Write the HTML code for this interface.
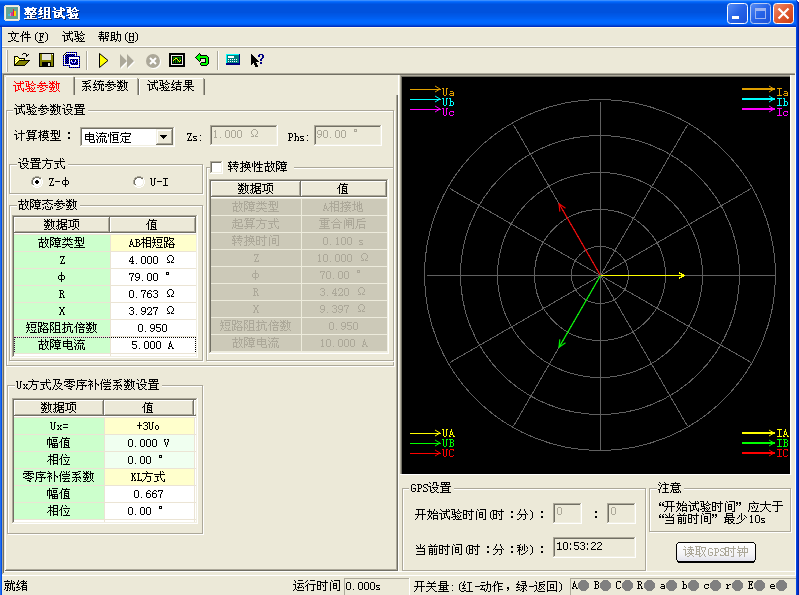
<!DOCTYPE html>
<html><head><meta charset="utf-8"><style>
html,body{margin:0;padding:0;background:#ECE9D8;width:799px;height:595px;overflow:hidden;font-family:"Liberation Sans",sans-serif}
svg{position:absolute;left:0;top:0;display:block}
</style></head><body>
<svg width="799" height="595" viewBox="0 0 799 595" shape-rendering="crispEdges"><defs><path id="g0" d="M3 0h1v1h-1zM8 0h1v1h-1zM0 1h7v1h-7zM8 1h4v1h-4zM1 2h1v1h-1zM3 2h1v1h-1zM5 2h1v1h-1zM7 2h1v1h-1zM10 2h1v1h-1zM1 3h6v1h-6zM8 3h1v1h-1zM10 3h1v1h-1zM2 4h3v1h-3zM9 4h1v1h-1zM1 5h1v1h-1zM3 5h1v1h-1zM5 5h1v1h-1zM8 5h1v1h-1zM10 5h1v1h-1zM0 6h1v1h-1zM3 6h1v1h-1zM6 6h2v1h-2zM11 6h1v1h-1zM1 7h10v1h-10zM6 8h1v1h-1zM3 9h1v1h-1zM6 9h4v1h-4zM3 10h1v1h-1zM6 10h1v1h-1zM0 11h12v1h-12z"/><path id="g1" d="M2 0h1v1h-1zM6 0h5v1h-5zM2 1h1v1h-1zM6 1h1v1h-1zM10 1h1v1h-1zM1 2h1v1h-1zM6 2h1v1h-1zM10 2h1v1h-1zM1 3h1v1h-1zM3 3h1v1h-1zM6 3h1v1h-1zM10 3h1v1h-1zM0 4h3v1h-3zM6 4h5v1h-5zM2 5h1v1h-1zM6 5h1v1h-1zM10 5h1v1h-1zM1 6h1v1h-1zM3 6h1v1h-1zM6 6h1v1h-1zM10 6h1v1h-1zM0 7h3v1h-3zM6 7h5v1h-5zM6 8h1v1h-1zM10 8h1v1h-1zM2 9h2v1h-2zM6 9h1v1h-1zM10 9h1v1h-1zM0 10h2v1h-2zM6 10h1v1h-1zM10 10h1v1h-1zM4 11h8v1h-8z"/><path id="g2" d="M1 0h1v1h-1zM8 0h1v1h-1zM2 1h1v1h-1zM8 1h1v1h-1zM10 1h1v1h-1zM2 2h1v1h-1zM8 2h1v1h-1zM11 2h1v1h-1zM4 3h8v1h-8zM0 4h3v1h-3zM8 4h1v1h-1zM2 5h1v1h-1zM4 5h5v1h-5zM2 6h1v1h-1zM6 6h1v1h-1zM8 6h1v1h-1zM2 7h1v1h-1zM6 7h1v1h-1zM8 7h1v1h-1zM2 8h1v1h-1zM4 8h1v1h-1zM6 8h1v1h-1zM9 8h1v1h-1zM2 9h2v1h-2zM6 9h2v1h-2zM9 9h1v1h-1zM11 9h1v1h-1zM2 10h1v1h-1zM4 10h2v1h-2zM10 10h2v1h-2zM11 11h1v1h-1z"/><path id="g3" d="M0 0h4v1h-4zM8 0h1v1h-1zM3 1h1v1h-1zM7 1h2v1h-2zM1 2h1v1h-1zM3 2h1v1h-1zM6 2h1v1h-1zM9 2h1v1h-1zM1 3h1v1h-1zM3 3h1v1h-1zM5 3h1v1h-1zM10 3h2v1h-2zM1 4h1v1h-1zM3 4h1v1h-1zM6 4h4v1h-4zM1 5h4v1h-4zM4 6h1v1h-1zM7 6h1v1h-1zM10 6h1v1h-1zM2 7h4v1h-4zM8 7h1v1h-1zM10 7h1v1h-1zM0 8h2v1h-2zM4 8h1v1h-1zM6 8h1v1h-1zM8 8h1v1h-1zM10 8h1v1h-1zM4 9h1v1h-1zM6 9h1v1h-1zM9 9h1v1h-1zM2 10h1v1h-1zM4 10h1v1h-1zM9 10h1v1h-1zM3 11h1v1h-1zM5 11h7v1h-7z"/><path id="g4" d="M4 0h1v1h-1zM5 1h1v1h-1zM0 2h11v1h-11zM3 3h1v1h-1zM7 3h1v1h-1zM3 4h1v1h-1zM7 4h1v1h-1zM3 5h1v1h-1zM7 5h1v1h-1zM4 6h1v1h-1zM6 6h1v1h-1zM4 7h1v1h-1zM6 7h1v1h-1zM5 8h1v1h-1zM3 9h2v1h-2zM6 9h2v1h-2zM0 10h3v1h-3zM8 10h3v1h-3z"/><path id="g5" d="M3 0h1v1h-1zM7 0h1v1h-1zM3 1h1v1h-1zM5 1h1v1h-1zM7 1h1v1h-1zM2 2h1v1h-1zM5 2h1v1h-1zM7 2h1v1h-1zM2 3h1v1h-1zM4 3h6v1h-6zM1 4h3v1h-3zM7 4h1v1h-1zM0 5h1v1h-1zM2 5h1v1h-1zM7 5h1v1h-1zM2 6h1v1h-1zM4 6h7v1h-7zM2 7h1v1h-1zM7 7h1v1h-1zM2 8h1v1h-1zM7 8h1v1h-1zM2 9h1v1h-1zM7 9h1v1h-1zM2 10h1v1h-1zM7 10h1v1h-1z"/><path id="g6" d="M5 1h1v1h-1zM4 2h1v1h-1zM3 3h1v1h-1zM3 4h1v1h-1zM3 5h1v1h-1zM3 6h1v1h-1zM3 7h1v1h-1zM3 8h1v1h-1zM4 9h1v1h-1zM5 10h1v1h-1z"/><path id="g7" d="M1 2h5v1h-5zM2 3h1v1h-1zM5 3h1v1h-1zM2 4h1v1h-1zM4 4h1v1h-1zM2 5h3v1h-3zM2 6h1v1h-1zM4 6h1v1h-1zM2 7h1v1h-1zM2 8h1v1h-1zM1 9h3v1h-3z"/><path id="g8" d="M1 1h1v1h-1zM2 2h1v1h-1zM3 3h1v1h-1zM3 4h1v1h-1zM3 5h1v1h-1zM3 6h1v1h-1zM3 7h1v1h-1zM3 8h1v1h-1zM2 9h1v1h-1zM1 10h1v1h-1z"/><path id="g9" d="M1 0h1v1h-1zM7 0h1v1h-1zM9 0h1v1h-1zM2 1h1v1h-1zM7 1h1v1h-1zM10 1h1v1h-1zM3 2h8v1h-8zM7 3h1v1h-1zM0 4h3v1h-3zM4 4h4v1h-4zM2 5h1v1h-1zM5 5h1v1h-1zM7 5h1v1h-1zM2 6h1v1h-1zM5 6h1v1h-1zM7 6h1v1h-1zM2 7h1v1h-1zM5 7h1v1h-1zM8 7h1v1h-1zM10 7h1v1h-1zM2 8h1v1h-1zM5 8h2v1h-2zM8 8h1v1h-1zM10 8h1v1h-1zM2 9h3v1h-3zM9 9h2v1h-2zM2 10h1v1h-1zM10 10h1v1h-1z"/><path id="g10" d="M0 0h4v1h-4zM7 0h1v1h-1zM3 1h1v1h-1zM7 1h1v1h-1zM1 2h1v1h-1zM3 2h1v1h-1zM6 2h1v1h-1zM8 2h1v1h-1zM1 3h1v1h-1zM3 3h3v1h-3zM9 3h2v1h-2zM1 4h1v1h-1zM3 4h1v1h-1zM6 4h3v1h-3zM1 5h4v1h-4zM4 6h1v1h-1zM6 6h1v1h-1zM9 6h1v1h-1zM2 7h4v1h-4zM7 7h1v1h-1zM9 7h1v1h-1zM0 8h2v1h-2zM4 8h1v1h-1zM6 8h1v1h-1zM8 8h1v1h-1zM4 9h1v1h-1zM7 9h1v1h-1zM2 10h2v1h-2zM5 10h6v1h-6z"/><path id="g11" d="M3 0h1v1h-1zM1 1h5v1h-5zM7 1h4v1h-4zM3 2h1v1h-1zM7 2h1v1h-1zM10 2h1v1h-1zM1 3h5v1h-5zM7 3h1v1h-1zM9 3h1v1h-1zM3 4h1v1h-1zM7 4h1v1h-1zM10 4h1v1h-1zM0 5h6v1h-6zM7 5h4v1h-4zM2 6h1v1h-1zM5 6h1v1h-1zM7 6h1v1h-1zM1 7h9v1h-9zM2 8h1v1h-1zM5 8h1v1h-1zM9 8h1v1h-1zM2 9h1v1h-1zM5 9h1v1h-1zM8 9h2v1h-2zM5 10h1v1h-1z"/><path id="g12" d="M7 0h1v1h-1zM1 1h4v1h-4zM7 1h1v1h-1zM1 2h1v1h-1zM4 2h1v1h-1zM7 2h1v1h-1zM1 3h1v1h-1zM4 3h1v1h-1zM6 3h5v1h-5zM1 4h4v1h-4zM7 4h1v1h-1zM10 4h1v1h-1zM1 5h1v1h-1zM4 5h1v1h-1zM7 5h1v1h-1zM10 5h1v1h-1zM1 6h4v1h-4zM7 6h1v1h-1zM10 6h1v1h-1zM1 7h1v1h-1zM4 7h1v1h-1zM7 7h1v1h-1zM10 7h1v1h-1zM1 8h1v1h-1zM3 8h4v1h-4zM10 8h1v1h-1zM0 9h3v1h-3zM6 9h1v1h-1zM8 9h1v1h-1zM10 9h1v1h-1zM5 10h1v1h-1zM9 10h1v1h-1z"/><path id="g13" d="M1 2h2v1h-2zM4 2h2v1h-2zM1 3h1v1h-1zM5 3h1v1h-1zM1 4h1v1h-1zM5 4h1v1h-1zM1 5h5v1h-5zM1 6h1v1h-1zM5 6h1v1h-1zM1 7h1v1h-1zM5 7h1v1h-1zM1 8h1v1h-1zM5 8h1v1h-1zM1 9h2v1h-2zM4 9h2v1h-2z"/><path id="g14" d="M4 0h1v1h-1zM3 1h1v1h-1zM7 1h1v1h-1zM2 2h7v1h-7zM4 3h1v1h-1zM0 4h11v1h-11zM2 5h1v1h-1zM5 5h1v1h-1zM8 5h1v1h-1zM0 6h2v1h-2zM3 6h2v1h-2zM9 6h2v1h-2zM5 7h2v1h-2zM3 8h2v1h-2zM8 8h1v1h-1zM6 9h2v1h-2zM2 10h4v1h-4z"/><path id="g15" d="M0 0h1v1h-1zM3 0h1v1h-1zM5 0h1v1h-1zM7 0h1v1h-1zM1 1h1v1h-1zM3 1h2v1h-2zM7 1h1v1h-1zM0 2h6v1h-6zM7 2h4v1h-4zM2 3h2v1h-2zM6 3h2v1h-2zM9 3h1v1h-1zM1 4h1v1h-1zM3 4h2v1h-2zM7 4h1v1h-1zM9 4h1v1h-1zM0 5h1v1h-1zM3 5h1v1h-1zM5 5h1v1h-1zM7 5h1v1h-1zM9 5h1v1h-1zM0 6h6v1h-6zM7 6h1v1h-1zM9 6h1v1h-1zM2 7h1v1h-1zM4 7h1v1h-1zM7 7h1v1h-1zM9 7h1v1h-1zM1 8h2v1h-2zM4 8h1v1h-1zM8 8h1v1h-1zM3 9h1v1h-1zM7 9h1v1h-1zM9 9h1v1h-1zM0 10h3v1h-3zM4 10h3v1h-3zM10 10h1v1h-1z"/><path id="g16" d="M7 0h3v1h-3zM1 1h6v1h-6zM4 2h1v1h-1zM8 2h1v1h-1zM2 3h6v1h-6zM5 4h1v1h-1zM4 5h1v1h-1zM8 5h1v1h-1zM1 6h9v1h-9zM5 7h1v1h-1zM9 7h1v1h-1zM3 8h1v1h-1zM5 8h1v1h-1zM7 8h1v1h-1zM2 9h1v1h-1zM5 9h1v1h-1zM8 9h1v1h-1zM1 10h1v1h-1zM4 10h2v1h-2zM9 10h1v1h-1z"/><path id="g17" d="M2 0h1v1h-1zM7 0h1v1h-1zM2 1h1v1h-1zM4 1h7v1h-7zM1 2h1v1h-1zM6 2h1v1h-1zM1 3h1v1h-1zM3 3h1v1h-1zM5 3h1v1h-1zM9 3h1v1h-1zM0 4h3v1h-3zM4 4h7v1h-7zM2 5h1v1h-1zM6 5h1v1h-1zM8 5h1v1h-1zM10 5h1v1h-1zM1 6h1v1h-1zM6 6h1v1h-1zM8 6h1v1h-1zM0 7h4v1h-4zM6 7h1v1h-1zM8 7h1v1h-1zM6 8h1v1h-1zM8 8h1v1h-1zM10 8h1v1h-1zM2 9h2v1h-2zM5 9h1v1h-1zM8 9h1v1h-1zM10 9h1v1h-1zM0 10h2v1h-2zM4 10h1v1h-1zM8 10h3v1h-3z"/><path id="g18" d="M2 0h1v1h-1zM7 0h1v1h-1zM2 1h1v1h-1zM7 1h1v1h-1zM1 2h1v1h-1zM4 2h7v1h-7zM1 3h1v1h-1zM3 3h1v1h-1zM7 3h1v1h-1zM0 4h3v1h-3zM5 4h5v1h-5zM2 5h1v1h-1zM1 6h1v1h-1zM5 6h5v1h-5zM0 7h4v1h-4zM5 7h1v1h-1zM9 7h1v1h-1zM4 8h2v1h-2zM9 8h1v1h-1zM2 9h2v1h-2zM5 9h5v1h-5zM0 10h2v1h-2zM5 10h1v1h-1zM9 10h1v1h-1z"/><path id="g19" d="M2 0h7v1h-7zM2 1h1v1h-1zM5 1h1v1h-1zM8 1h1v1h-1zM2 2h7v1h-7zM2 3h1v1h-1zM5 3h1v1h-1zM8 3h1v1h-1zM2 4h7v1h-7zM5 5h1v1h-1zM0 6h11v1h-11zM4 7h3v1h-3zM3 8h1v1h-1zM5 8h1v1h-1zM7 8h1v1h-1zM2 9h1v1h-1zM5 9h1v1h-1zM8 9h1v1h-1zM0 10h2v1h-2zM5 10h1v1h-1zM9 10h2v1h-2z"/><path id="g20" d="M1 0h1v1h-1zM5 0h4v1h-4zM2 1h1v1h-1zM5 1h1v1h-1zM8 1h1v1h-1zM5 2h1v1h-1zM8 2h1v1h-1zM4 3h1v1h-1zM8 3h3v1h-3zM0 4h3v1h-3zM2 5h1v1h-1zM4 5h6v1h-6zM2 6h1v1h-1zM5 6h1v1h-1zM9 6h1v1h-1zM2 7h1v1h-1zM6 7h1v1h-1zM8 7h1v1h-1zM2 8h2v1h-2zM7 8h1v1h-1zM2 9h1v1h-1zM6 9h1v1h-1zM8 9h1v1h-1zM3 10h3v1h-3zM9 10h2v1h-2z"/><path id="g21" d="M1 0h9v1h-9zM1 1h1v1h-1zM4 1h1v1h-1zM6 1h1v1h-1zM9 1h1v1h-1zM1 2h9v1h-9zM5 3h1v1h-1zM0 4h11v1h-11zM2 5h1v1h-1zM8 5h1v1h-1zM2 6h7v1h-7zM2 7h1v1h-1zM8 7h1v1h-1zM2 8h7v1h-7zM2 9h1v1h-1zM8 9h1v1h-1zM0 10h11v1h-11z"/><path id="g22" d="M1 0h1v1h-1zM7 0h1v1h-1zM2 1h1v1h-1zM7 1h1v1h-1zM7 2h1v1h-1zM4 3h7v1h-7zM0 4h3v1h-3zM7 4h1v1h-1zM2 5h1v1h-1zM7 5h1v1h-1zM2 6h1v1h-1zM7 6h1v1h-1zM2 7h1v1h-1zM4 7h1v1h-1zM7 7h1v1h-1zM2 8h2v1h-2zM7 8h1v1h-1zM2 9h1v1h-1zM7 9h1v1h-1zM7 10h1v1h-1z"/><path id="g23" d="M1 0h4v1h-4zM6 0h5v1h-5zM1 1h1v1h-1zM3 1h1v1h-1zM6 1h1v1h-1zM9 1h1v1h-1zM0 2h1v1h-1zM2 2h7v1h-7zM2 3h1v1h-1zM8 3h1v1h-1zM2 4h7v1h-7zM2 5h1v1h-1zM8 5h1v1h-1zM2 6h7v1h-7zM3 7h1v1h-1zM7 7h1v1h-1zM0 8h11v1h-11zM3 9h1v1h-1zM7 9h1v1h-1zM1 10h2v1h-2zM7 10h1v1h-1z"/><path id="g24" d="M2 0h1v1h-1zM6 0h1v1h-1zM8 0h1v1h-1zM2 1h1v1h-1zM4 1h7v1h-7zM0 2h4v1h-4zM6 2h1v1h-1zM8 2h1v1h-1zM2 3h1v1h-1zM5 3h5v1h-5zM2 4h2v1h-2zM5 4h1v1h-1zM9 4h1v1h-1zM1 5h2v1h-2zM4 5h6v1h-6zM1 6h2v1h-2zM5 6h1v1h-1zM9 6h1v1h-1zM0 7h1v1h-1zM2 7h1v1h-1zM4 7h7v1h-7zM2 8h1v1h-1zM7 8h1v1h-1zM2 9h1v1h-1zM6 9h1v1h-1zM8 9h1v1h-1zM2 10h1v1h-1zM4 10h2v1h-2zM9 10h2v1h-2z"/><path id="g25" d="M1 0h6v1h-6zM9 0h1v1h-1zM2 1h1v1h-1zM4 1h1v1h-1zM7 1h1v1h-1zM9 1h1v1h-1zM2 2h1v1h-1zM4 2h1v1h-1zM7 2h1v1h-1zM9 2h1v1h-1zM0 3h8v1h-8zM9 3h1v1h-1zM2 4h1v1h-1zM4 4h1v1h-1zM7 4h1v1h-1zM9 4h1v1h-1zM2 5h1v1h-1zM4 5h1v1h-1zM9 5h1v1h-1zM1 6h1v1h-1zM4 6h2v1h-2zM8 6h2v1h-2zM5 7h1v1h-1zM2 8h7v1h-7zM5 9h1v1h-1zM0 10h11v1h-11z"/><path id="g26" d="M6 2h2v1h-2zM6 3h2v1h-2zM6 7h2v1h-2zM6 8h2v1h-2z"/><path id="g27" d="M5 0h1v1h-1zM5 1h1v1h-1zM1 2h9v1h-9zM1 3h1v1h-1zM5 3h1v1h-1zM9 3h1v1h-1zM1 4h9v1h-9zM1 5h1v1h-1zM5 5h1v1h-1zM9 5h1v1h-1zM1 6h1v1h-1zM5 6h1v1h-1zM9 6h1v1h-1zM1 7h9v1h-9zM5 8h1v1h-1zM10 8h1v1h-1zM5 9h1v1h-1zM10 9h1v1h-1zM6 10h5v1h-5z"/><path id="g28" d="M0 0h1v1h-1zM6 0h1v1h-1zM1 1h1v1h-1zM3 1h8v1h-8zM5 2h1v1h-1zM0 3h1v1h-1zM4 3h1v1h-1zM8 3h1v1h-1zM1 4h1v1h-1zM3 4h7v1h-7zM2 5h1v1h-1zM9 5h1v1h-1zM2 6h1v1h-1zM4 6h1v1h-1zM6 6h1v1h-1zM8 6h1v1h-1zM0 7h2v1h-2zM4 7h1v1h-1zM6 7h1v1h-1zM8 7h1v1h-1zM1 8h1v1h-1zM4 8h1v1h-1zM6 8h1v1h-1zM8 8h1v1h-1zM10 8h1v1h-1zM1 9h1v1h-1zM4 9h1v1h-1zM6 9h1v1h-1zM8 9h1v1h-1zM10 9h1v1h-1zM1 10h1v1h-1zM3 10h1v1h-1zM6 10h1v1h-1zM9 10h2v1h-2z"/><path id="g29" d="M2 0h1v1h-1zM4 0h7v1h-7zM2 1h1v1h-1zM0 2h1v1h-1zM2 2h2v1h-2zM5 2h5v1h-5zM0 3h1v1h-1zM2 3h1v1h-1zM4 3h2v1h-2zM9 3h1v1h-1zM0 4h1v1h-1zM2 4h1v1h-1zM5 4h1v1h-1zM9 4h1v1h-1zM2 5h1v1h-1zM5 5h5v1h-5zM2 6h1v1h-1zM5 6h1v1h-1zM9 6h1v1h-1zM2 7h1v1h-1zM5 7h5v1h-5zM2 8h1v1h-1zM5 8h1v1h-1zM9 8h1v1h-1zM2 9h1v1h-1zM2 10h1v1h-1zM4 10h7v1h-7z"/><path id="g30" d="M5 0h1v1h-1zM1 1h10v1h-10zM1 2h1v1h-1zM10 2h1v1h-1zM0 3h1v1h-1zM9 3h1v1h-1zM2 4h8v1h-8zM5 5h1v1h-1zM2 6h1v1h-1zM5 6h1v1h-1zM2 7h1v1h-1zM5 7h4v1h-4zM2 8h1v1h-1zM5 8h1v1h-1zM1 9h1v1h-1zM3 9h1v1h-1zM5 9h1v1h-1zM0 10h1v1h-1zM4 10h7v1h-7z"/><path id="g31" d="M1 2h5v1h-5zM1 3h1v1h-1zM4 3h1v1h-1zM4 4h1v1h-1zM3 5h1v1h-1zM3 6h1v1h-1zM2 7h1v1h-1zM2 8h1v1h-1zM5 8h1v1h-1zM1 9h5v1h-5z"/><path id="g32" d="M1 5h4v1h-4zM1 6h1v1h-1zM2 7h2v1h-2zM4 8h1v1h-1zM1 9h4v1h-4z"/><path id="g33" d="M2 4h1v1h-1zM2 9h1v1h-1z"/><path id="g34" d="M3 2h1v1h-1zM2 3h2v1h-2zM3 4h1v1h-1zM3 5h1v1h-1zM3 6h1v1h-1zM3 7h1v1h-1zM3 8h1v1h-1zM2 9h3v1h-3z"/><path id="g35" d="M2 9h1v1h-1z"/><path id="g36" d="M2 2h3v1h-3zM1 3h1v1h-1zM5 3h1v1h-1zM1 4h1v1h-1zM5 4h1v1h-1zM1 5h1v1h-1zM5 5h1v1h-1zM1 6h1v1h-1zM5 6h1v1h-1zM1 7h1v1h-1zM5 7h1v1h-1zM1 8h1v1h-1zM5 8h1v1h-1zM2 9h3v1h-3z"/><path id="g37" d="M5 1h3v1h-3zM4 2h1v1h-1zM8 2h1v1h-1zM3 3h1v1h-1zM9 3h1v1h-1zM3 4h1v1h-1zM9 4h1v1h-1zM3 5h1v1h-1zM9 5h1v1h-1zM4 6h1v1h-1zM8 6h1v1h-1zM5 7h1v1h-1zM7 7h1v1h-1zM3 8h3v1h-3zM7 8h3v1h-3z"/><path id="g38" d="M1 2h4v1h-4zM2 3h1v1h-1zM5 3h1v1h-1zM2 4h1v1h-1zM5 4h1v1h-1zM2 5h1v1h-1zM5 5h1v1h-1zM2 6h3v1h-3zM2 7h1v1h-1zM2 8h1v1h-1zM1 9h3v1h-3z"/><path id="g39" d="M1 2h2v1h-2zM2 3h1v1h-1zM2 4h1v1h-1zM2 5h3v1h-3zM2 6h1v1h-1zM5 6h1v1h-1zM2 7h1v1h-1zM5 7h1v1h-1zM2 8h1v1h-1zM5 8h1v1h-1zM1 9h2v1h-2zM4 9h2v1h-2z"/><path id="g40" d="M2 2h3v1h-3zM1 3h1v1h-1zM5 3h1v1h-1zM1 4h1v1h-1zM5 4h1v1h-1zM1 5h1v1h-1zM5 5h1v1h-1zM2 6h4v1h-4zM5 7h1v1h-1zM1 8h1v1h-1zM4 8h1v1h-1zM2 9h2v1h-2z"/><path id="g41" d="M2 1h3v1h-3zM2 2h1v1h-1zM4 2h1v1h-1zM2 3h3v1h-3z"/><path id="g42" d="M4 0h1v1h-1zM5 1h1v1h-1zM0 2h11v1h-11zM4 3h1v1h-1zM4 4h1v1h-1zM4 5h5v1h-5zM3 6h1v1h-1zM8 6h1v1h-1zM3 7h1v1h-1zM8 7h1v1h-1zM2 8h1v1h-1zM8 8h1v1h-1zM1 9h1v1h-1zM8 9h1v1h-1zM0 10h1v1h-1zM5 10h3v1h-3z"/><path id="g43" d="M6 0h1v1h-1zM8 0h1v1h-1zM6 1h1v1h-1zM9 1h1v1h-1zM6 2h1v1h-1zM0 3h11v1h-11zM6 4h1v1h-1zM1 5h4v1h-4zM6 5h1v1h-1zM3 6h1v1h-1zM6 6h1v1h-1zM3 7h1v1h-1zM7 7h1v1h-1zM3 8h1v1h-1zM7 8h1v1h-1zM10 8h1v1h-1zM3 9h2v1h-2zM8 9h1v1h-1zM10 9h1v1h-1zM0 10h3v1h-3zM9 10h2v1h-2z"/><path id="g44" d="M1 5h5v1h-5z"/><path id="g45" d="M5 1h1v1h-1zM5 2h1v1h-1zM5 3h1v1h-1zM3 4h5v1h-5zM2 5h1v1h-1zM5 5h1v1h-1zM8 5h1v1h-1zM2 6h1v1h-1zM5 6h1v1h-1zM8 6h1v1h-1zM2 7h1v1h-1zM5 7h1v1h-1zM8 7h1v1h-1zM3 8h5v1h-5zM5 9h1v1h-1zM5 10h1v1h-1z"/><path id="g46" d="M0 2h2v1h-2zM4 2h2v1h-2zM1 3h1v1h-1zM4 3h1v1h-1zM1 4h1v1h-1zM4 4h1v1h-1zM1 5h1v1h-1zM4 5h1v1h-1zM1 6h1v1h-1zM4 6h1v1h-1zM1 7h1v1h-1zM4 7h1v1h-1zM1 8h1v1h-1zM4 8h1v1h-1zM2 9h2v1h-2z"/><path id="g47" d="M1 2h5v1h-5zM3 3h1v1h-1zM3 4h1v1h-1zM3 5h1v1h-1zM3 6h1v1h-1zM3 7h1v1h-1zM3 8h1v1h-1zM1 9h5v1h-5z"/><path id="g48" d="M3 0h1v1h-1zM7 0h1v1h-1zM3 1h1v1h-1zM7 1h1v1h-1zM0 2h6v1h-6zM7 2h4v1h-4zM3 3h1v1h-1zM7 3h1v1h-1zM9 3h1v1h-1zM3 4h1v1h-1zM6 4h1v1h-1zM9 4h1v1h-1zM1 5h5v1h-5zM7 5h1v1h-1zM9 5h1v1h-1zM1 6h1v1h-1zM4 6h1v1h-1zM7 6h1v1h-1zM9 6h1v1h-1zM1 7h1v1h-1zM4 7h1v1h-1zM8 7h1v1h-1zM1 8h1v1h-1zM4 8h1v1h-1zM8 8h1v1h-1zM1 9h4v1h-4zM7 9h1v1h-1zM9 9h1v1h-1zM1 10h1v1h-1zM4 10h3v1h-3zM10 10h1v1h-1z"/><path id="g49" d="M0 0h4v1h-4zM7 0h1v1h-1zM0 1h1v1h-1zM3 1h8v1h-8zM0 2h1v1h-1zM2 2h1v1h-1zM5 2h1v1h-1zM8 2h1v1h-1zM0 3h2v1h-2zM4 3h7v1h-7zM0 4h1v1h-1zM2 4h1v1h-1zM5 4h1v1h-1zM9 4h1v1h-1zM0 5h1v1h-1zM3 5h1v1h-1zM5 5h5v1h-5zM0 6h1v1h-1zM3 6h1v1h-1zM5 6h1v1h-1zM9 6h1v1h-1zM0 7h4v1h-4zM5 7h5v1h-5zM0 8h1v1h-1zM2 8h1v1h-1zM7 8h1v1h-1zM0 9h1v1h-1zM4 9h7v1h-7zM0 10h1v1h-1zM7 10h1v1h-1z"/><path id="g50" d="M5 0h1v1h-1zM0 1h11v1h-11zM5 2h1v1h-1zM4 3h1v1h-1zM6 3h1v1h-1zM2 4h3v1h-3zM7 4h2v1h-2zM0 5h2v1h-2zM5 5h1v1h-1zM9 5h2v1h-2zM3 7h1v1h-1zM5 7h1v1h-1zM9 7h1v1h-1zM1 8h1v1h-1zM3 8h1v1h-1zM6 8h1v1h-1zM8 8h1v1h-1zM10 8h1v1h-1zM1 9h1v1h-1zM3 9h1v1h-1zM8 9h1v1h-1zM10 9h1v1h-1zM0 10h1v1h-1zM4 10h5v1h-5z"/><path id="g51" d="M2 0h1v1h-1zM5 0h1v1h-1zM8 0h1v1h-1zM3 1h1v1h-1zM5 1h1v1h-1zM7 1h1v1h-1zM0 2h11v1h-11zM3 3h1v1h-1zM5 3h1v1h-1zM7 3h1v1h-1zM2 4h1v1h-1zM5 4h1v1h-1zM8 4h1v1h-1zM1 5h1v1h-1zM9 5h1v1h-1zM5 6h1v1h-1zM0 7h11v1h-11zM4 8h1v1h-1zM6 8h1v1h-1zM3 9h1v1h-1zM7 9h1v1h-1zM0 10h3v1h-3zM8 10h3v1h-3z"/><path id="g52" d="M3 2h1v1h-1zM3 3h1v1h-1zM2 4h2v1h-2zM2 5h1v1h-1zM4 5h1v1h-1zM2 6h1v1h-1zM4 6h1v1h-1zM2 7h3v1h-3zM1 8h1v1h-1zM5 8h1v1h-1zM1 9h2v1h-2zM5 9h2v1h-2z"/><path id="g53" d="M1 2h4v1h-4zM2 3h1v1h-1zM5 3h1v1h-1zM2 4h1v1h-1zM5 4h1v1h-1zM2 5h3v1h-3zM2 6h1v1h-1zM5 6h1v1h-1zM2 7h1v1h-1zM5 7h1v1h-1zM2 8h1v1h-1zM5 8h1v1h-1zM1 9h4v1h-4z"/><path id="g54" d="M3 0h1v1h-1zM6 0h5v1h-5zM3 1h1v1h-1zM6 1h1v1h-1zM10 1h1v1h-1zM1 2h6v1h-6zM10 2h1v1h-1zM3 3h1v1h-1zM6 3h5v1h-5zM3 4h1v1h-1zM6 4h1v1h-1zM10 4h1v1h-1zM2 5h3v1h-3zM6 5h1v1h-1zM10 5h1v1h-1zM1 6h1v1h-1zM3 6h1v1h-1zM5 6h6v1h-6zM0 7h1v1h-1zM3 7h1v1h-1zM6 7h1v1h-1zM10 7h1v1h-1zM3 8h1v1h-1zM6 8h1v1h-1zM10 8h1v1h-1zM3 9h1v1h-1zM6 9h5v1h-5zM3 10h1v1h-1zM6 10h1v1h-1zM10 10h1v1h-1z"/><path id="g55" d="M1 0h1v1h-1zM4 0h7v1h-7zM1 1h1v1h-1zM1 2h3v1h-3zM5 2h5v1h-5zM0 3h1v1h-1zM2 3h1v1h-1zM5 3h1v1h-1zM9 3h1v1h-1zM2 4h1v1h-1zM5 4h1v1h-1zM9 4h1v1h-1zM0 5h4v1h-4zM5 5h5v1h-5zM2 6h1v1h-1zM2 7h1v1h-1zM5 7h1v1h-1zM9 7h1v1h-1zM1 8h1v1h-1zM3 8h1v1h-1zM6 8h1v1h-1zM8 8h1v1h-1zM1 9h1v1h-1zM8 9h1v1h-1zM0 10h1v1h-1zM4 10h7v1h-7z"/><path id="g56" d="M0 0h4v1h-4zM5 0h1v1h-1zM0 1h1v1h-1zM3 1h1v1h-1zM5 1h5v1h-5zM0 2h1v1h-1zM3 2h1v1h-1zM5 2h1v1h-1zM9 2h1v1h-1zM0 3h1v1h-1zM3 3h2v1h-2zM6 3h1v1h-1zM8 3h1v1h-1zM0 4h4v1h-4zM7 4h1v1h-1zM2 5h1v1h-1zM6 5h1v1h-1zM8 5h1v1h-1zM0 6h1v1h-1zM2 6h2v1h-2zM5 6h1v1h-1zM9 6h1v1h-1zM0 7h1v1h-1zM2 7h1v1h-1zM4 7h7v1h-7zM0 8h1v1h-1zM2 8h1v1h-1zM5 8h1v1h-1zM9 8h1v1h-1zM0 9h1v1h-1zM2 9h2v1h-2zM5 9h1v1h-1zM9 9h1v1h-1zM0 10h2v1h-2zM5 10h5v1h-5z"/><path id="g57" d="M4 2h1v1h-1zM3 3h2v1h-2zM2 4h1v1h-1zM4 4h1v1h-1zM2 5h1v1h-1zM4 5h1v1h-1zM1 6h1v1h-1zM4 6h1v1h-1zM1 7h5v1h-5zM4 8h1v1h-1zM3 9h3v1h-3z"/><path id="g58" d="M1 2h5v1h-5zM1 3h1v1h-1zM5 3h1v1h-1zM4 4h1v1h-1zM4 5h1v1h-1zM3 6h1v1h-1zM3 7h1v1h-1zM3 8h1v1h-1zM3 9h1v1h-1z"/><path id="g59" d="M0 2h4v1h-4zM1 3h1v1h-1zM4 3h1v1h-1zM1 4h1v1h-1zM4 4h1v1h-1zM1 5h3v1h-3zM1 6h1v1h-1zM3 6h1v1h-1zM1 7h1v1h-1zM4 7h1v1h-1zM1 8h1v1h-1zM4 8h1v1h-1zM0 9h3v1h-3zM4 9h2v1h-2z"/><path id="g60" d="M3 2h2v1h-2zM2 3h1v1h-1zM5 3h1v1h-1zM1 4h1v1h-1zM1 5h4v1h-4zM1 6h1v1h-1zM5 6h1v1h-1zM1 7h1v1h-1zM5 7h1v1h-1zM1 8h1v1h-1zM5 8h1v1h-1zM2 9h3v1h-3z"/><path id="g61" d="M2 2h3v1h-3zM1 3h1v1h-1zM5 3h1v1h-1zM5 4h1v1h-1zM3 5h2v1h-2zM5 6h1v1h-1zM5 7h1v1h-1zM1 8h1v1h-1zM5 8h1v1h-1zM2 9h3v1h-3z"/><path id="g62" d="M0 2h2v1h-2zM4 2h2v1h-2zM1 3h1v1h-1zM4 3h1v1h-1zM2 4h2v1h-2zM2 5h2v1h-2zM2 6h2v1h-2zM1 7h1v1h-1zM4 7h1v1h-1zM1 8h1v1h-1zM4 8h1v1h-1zM0 9h2v1h-2zM4 9h2v1h-2z"/><path id="g63" d="M2 2h3v1h-3zM1 3h1v1h-1zM5 3h1v1h-1zM1 4h1v1h-1zM5 4h1v1h-1zM5 5h1v1h-1zM4 6h1v1h-1zM3 7h1v1h-1zM2 8h1v1h-1zM5 8h1v1h-1zM1 9h5v1h-5z"/><path id="g64" d="M0 0h4v1h-4zM5 0h5v1h-5zM0 1h1v1h-1zM3 1h1v1h-1zM5 1h1v1h-1zM9 1h1v1h-1zM0 2h1v1h-1zM2 2h1v1h-1zM5 2h1v1h-1zM9 2h1v1h-1zM0 3h2v1h-2zM5 3h5v1h-5zM0 4h1v1h-1zM2 4h1v1h-1zM5 4h1v1h-1zM9 4h1v1h-1zM0 5h1v1h-1zM3 5h1v1h-1zM5 5h1v1h-1zM9 5h1v1h-1zM0 6h1v1h-1zM3 6h1v1h-1zM5 6h1v1h-1zM9 6h1v1h-1zM0 7h2v1h-2zM3 7h1v1h-1zM5 7h5v1h-5zM0 8h1v1h-1zM2 8h1v1h-1zM5 8h1v1h-1zM9 8h1v1h-1zM0 9h1v1h-1zM5 9h1v1h-1zM9 9h1v1h-1zM0 10h1v1h-1zM3 10h8v1h-8z"/><path id="g65" d="M2 0h1v1h-1zM6 0h1v1h-1zM2 1h1v1h-1zM7 1h1v1h-1zM0 2h11v1h-11zM2 3h1v1h-1zM2 4h1v1h-1zM5 4h4v1h-4zM2 5h2v1h-2zM5 5h1v1h-1zM8 5h1v1h-1zM1 6h2v1h-2zM5 6h1v1h-1zM8 6h1v1h-1zM0 7h1v1h-1zM2 7h1v1h-1zM5 7h1v1h-1zM8 7h1v1h-1zM2 8h1v1h-1zM5 8h1v1h-1zM8 8h1v1h-1zM10 8h1v1h-1zM2 9h1v1h-1zM4 9h1v1h-1zM8 9h1v1h-1zM10 9h1v1h-1zM0 10h4v1h-4zM9 10h2v1h-2z"/><path id="g66" d="M3 0h1v1h-1zM6 0h1v1h-1zM3 1h1v1h-1zM7 1h1v1h-1zM2 2h1v1h-1zM4 2h7v1h-7zM2 3h1v1h-1zM5 3h1v1h-1zM9 3h1v1h-1zM1 4h2v1h-2zM6 4h1v1h-1zM8 4h1v1h-1zM0 5h1v1h-1zM2 5h1v1h-1zM4 5h7v1h-7zM2 6h1v1h-1zM2 7h1v1h-1zM5 7h5v1h-5zM2 8h1v1h-1zM5 8h1v1h-1zM9 8h1v1h-1zM2 9h1v1h-1zM5 9h1v1h-1zM9 9h1v1h-1zM2 10h1v1h-1zM5 10h5v1h-5z"/><path id="g67" d="M1 2h5v1h-5zM1 3h1v1h-1zM1 4h1v1h-1zM1 5h4v1h-4zM5 6h1v1h-1zM5 7h1v1h-1zM1 8h1v1h-1zM5 8h1v1h-1zM2 9h3v1h-3z"/><path id="g68" d="M2 0h1v1h-1zM5 0h6v1h-6zM2 1h1v1h-1zM5 1h1v1h-1zM10 1h1v1h-1zM0 2h6v1h-6zM10 2h1v1h-1zM2 3h1v1h-1zM5 3h6v1h-6zM2 4h1v1h-1zM4 4h2v1h-2zM8 4h1v1h-1zM2 5h2v1h-2zM5 5h6v1h-6zM1 6h2v1h-2zM5 6h1v1h-1zM8 6h1v1h-1zM0 7h1v1h-1zM2 7h1v1h-1zM5 7h6v1h-6zM2 8h1v1h-1zM4 8h3v1h-3zM10 8h1v1h-1zM0 9h1v1h-1zM2 9h1v1h-1zM4 9h1v1h-1zM6 9h1v1h-1zM10 9h1v1h-1zM1 10h1v1h-1zM3 10h1v1h-1zM6 10h5v1h-5z"/><path id="g69" d="M5 0h6v1h-6zM0 1h5v1h-5zM7 1h1v1h-1zM2 2h1v1h-1zM5 2h6v1h-6zM2 3h1v1h-1zM5 3h1v1h-1zM10 3h1v1h-1zM2 4h1v1h-1zM5 4h1v1h-1zM7 4h1v1h-1zM10 4h1v1h-1zM2 5h1v1h-1zM5 5h1v1h-1zM7 5h1v1h-1zM10 5h1v1h-1zM2 6h1v1h-1zM5 6h1v1h-1zM7 6h1v1h-1zM10 6h1v1h-1zM2 7h4v1h-4zM7 7h1v1h-1zM10 7h1v1h-1zM0 8h2v1h-2zM7 8h2v1h-2zM6 9h1v1h-1zM9 9h1v1h-1zM4 10h2v1h-2zM10 10h1v1h-1z"/><path id="g70" d="M3 0h1v1h-1zM7 0h1v1h-1zM3 1h8v1h-8zM2 2h1v1h-1zM6 2h1v1h-1zM2 3h1v1h-1zM5 3h5v1h-5zM1 4h2v1h-2zM5 4h1v1h-1zM9 4h1v1h-1zM0 5h1v1h-1zM2 5h1v1h-1zM5 5h5v1h-5zM2 6h1v1h-1zM5 6h1v1h-1zM9 6h1v1h-1zM2 7h1v1h-1zM5 7h3v1h-3zM9 7h1v1h-1zM2 8h1v1h-1zM5 8h1v1h-1zM7 8h3v1h-3zM2 9h1v1h-1zM5 9h1v1h-1zM9 9h1v1h-1zM2 10h1v1h-1zM4 10h7v1h-7z"/><path id="g71" d="M2 0h1v1h-1zM7 0h1v1h-1zM0 1h4v1h-4zM5 1h5v1h-5zM1 2h1v1h-1zM7 2h1v1h-1zM1 3h2v1h-2zM4 3h7v1h-7zM0 4h1v1h-1zM2 4h1v1h-1zM6 4h1v1h-1zM0 5h4v1h-4zM5 5h5v1h-5zM2 6h1v1h-1zM9 6h1v1h-1zM2 7h3v1h-3zM6 7h1v1h-1zM8 7h1v1h-1zM0 8h3v1h-3zM7 8h1v1h-1zM2 9h1v1h-1zM8 9h1v1h-1zM2 10h1v1h-1zM8 10h1v1h-1z"/><path id="g72" d="M2 0h1v1h-1zM6 0h1v1h-1zM2 1h1v1h-1zM6 1h4v1h-4zM0 2h6v1h-6zM8 2h1v1h-1zM2 3h1v1h-1zM5 3h5v1h-5zM2 4h1v1h-1zM4 4h2v1h-2zM7 4h1v1h-1zM9 4h1v1h-1zM2 5h2v1h-2zM5 5h1v1h-1zM7 5h1v1h-1zM9 5h1v1h-1zM1 6h2v1h-2zM4 6h7v1h-7zM0 7h1v1h-1zM2 7h1v1h-1zM7 7h1v1h-1zM2 8h1v1h-1zM6 8h1v1h-1zM8 8h1v1h-1zM2 9h1v1h-1zM5 9h1v1h-1zM9 9h1v1h-1zM0 10h3v1h-3zM4 10h1v1h-1zM10 10h1v1h-1z"/><path id="g73" d="M2 0h1v1h-1zM7 0h1v1h-1zM2 1h1v1h-1zM5 1h1v1h-1zM7 1h1v1h-1zM0 2h1v1h-1zM2 2h2v1h-2zM5 2h1v1h-1zM7 2h1v1h-1zM0 3h1v1h-1zM2 3h1v1h-1zM4 3h7v1h-7zM0 4h1v1h-1zM2 4h1v1h-1zM4 4h1v1h-1zM7 4h1v1h-1zM0 5h1v1h-1zM2 5h2v1h-2zM7 5h1v1h-1zM2 6h1v1h-1zM5 6h5v1h-5zM2 7h1v1h-1zM7 7h1v1h-1zM2 8h1v1h-1zM7 8h1v1h-1zM2 9h1v1h-1zM7 9h1v1h-1zM2 10h1v1h-1zM4 10h7v1h-7z"/><path id="g74" d="M2 0h1v1h-1zM7 0h1v1h-1zM2 1h1v1h-1zM4 1h7v1h-7zM0 2h4v1h-4zM5 2h1v1h-1zM9 2h1v1h-1zM2 3h1v1h-1zM6 3h1v1h-1zM8 3h1v1h-1zM2 4h1v1h-1zM4 4h7v1h-7zM2 5h2v1h-2zM7 5h1v1h-1zM1 6h2v1h-2zM4 6h7v1h-7zM0 7h1v1h-1zM2 7h1v1h-1zM6 7h1v1h-1zM9 7h1v1h-1zM2 8h1v1h-1zM5 8h2v1h-2zM8 8h1v1h-1zM2 9h1v1h-1zM7 9h1v1h-1zM9 9h1v1h-1zM0 10h3v1h-3zM4 10h3v1h-3zM10 10h1v1h-1z"/><path id="g75" d="M2 0h1v1h-1zM7 0h1v1h-1zM2 1h1v1h-1zM5 1h1v1h-1zM7 1h1v1h-1zM2 2h1v1h-1zM5 2h1v1h-1zM7 2h1v1h-1zM9 2h1v1h-1zM0 3h4v1h-4zM5 3h1v1h-1zM7 3h3v1h-3zM2 4h1v1h-1zM5 4h3v1h-3zM9 4h1v1h-1zM2 5h1v1h-1zM4 5h2v1h-2zM7 5h1v1h-1zM9 5h1v1h-1zM2 6h1v1h-1zM5 6h1v1h-1zM7 6h1v1h-1zM9 6h1v1h-1zM2 7h1v1h-1zM5 7h1v1h-1zM7 7h3v1h-3zM2 8h2v1h-2zM5 8h1v1h-1zM7 8h1v1h-1zM10 8h1v1h-1zM0 9h2v1h-2zM5 9h1v1h-1zM10 9h1v1h-1zM6 10h5v1h-5z"/><path id="g76" d="M3 0h1v1h-1zM3 1h1v1h-1zM6 1h4v1h-4zM1 2h5v1h-5zM9 2h1v1h-1zM3 3h1v1h-1zM9 3h1v1h-1zM0 4h10v1h-10zM3 5h1v1h-1zM6 5h1v1h-1zM1 6h1v1h-1zM3 6h1v1h-1zM6 6h1v1h-1zM10 6h1v1h-1zM1 7h1v1h-1zM3 7h4v1h-4zM10 7h1v1h-1zM1 8h1v1h-1zM3 8h1v1h-1zM6 8h5v1h-5zM0 9h1v1h-1zM2 9h2v1h-2zM0 10h1v1h-1zM4 10h7v1h-7z"/><path id="g77" d="M1 0h9v1h-9zM5 1h1v1h-1zM0 2h11v1h-11zM2 3h1v1h-1zM5 3h1v1h-1zM8 3h1v1h-1zM2 4h7v1h-7zM2 5h1v1h-1zM5 5h1v1h-1zM8 5h1v1h-1zM2 6h7v1h-7zM5 7h1v1h-1zM1 8h9v1h-9zM5 9h1v1h-1zM0 10h11v1h-11z"/><path id="g78" d="M5 0h1v1h-1zM4 1h1v1h-1zM6 1h1v1h-1zM3 2h1v1h-1zM7 2h1v1h-1zM2 3h1v1h-1zM8 3h1v1h-1zM0 4h2v1h-2zM3 4h5v1h-5zM9 4h2v1h-2zM2 6h7v1h-7zM2 7h1v1h-1zM8 7h1v1h-1zM2 8h1v1h-1zM8 8h1v1h-1zM2 9h7v1h-7zM2 10h1v1h-1zM8 10h1v1h-1z"/><path id="g79" d="M2 0h1v1h-1zM5 0h6v1h-6zM3 1h1v1h-1zM10 1h1v1h-1zM1 2h1v1h-1zM3 2h6v1h-6zM10 2h1v1h-1zM1 3h1v1h-1zM3 3h1v1h-1zM5 3h1v1h-1zM8 3h1v1h-1zM10 3h1v1h-1zM1 4h1v1h-1zM3 4h6v1h-6zM10 4h1v1h-1zM1 5h1v1h-1zM3 5h1v1h-1zM5 5h1v1h-1zM8 5h1v1h-1zM10 5h1v1h-1zM1 6h1v1h-1zM3 6h6v1h-6zM10 6h1v1h-1zM1 7h1v1h-1zM3 7h1v1h-1zM5 7h1v1h-1zM8 7h1v1h-1zM10 7h1v1h-1zM1 8h1v1h-1zM5 8h1v1h-1zM10 8h1v1h-1zM1 9h1v1h-1zM5 9h1v1h-1zM10 9h1v1h-1zM1 10h1v1h-1zM9 10h2v1h-2z"/><path id="g80" d="M7 0h3v1h-3zM2 1h5v1h-5zM2 2h1v1h-1zM2 3h9v1h-9zM2 4h1v1h-1zM2 5h1v1h-1zM2 6h1v1h-1zM4 6h6v1h-6zM2 7h1v1h-1zM4 7h1v1h-1zM9 7h1v1h-1zM1 8h1v1h-1zM4 8h1v1h-1zM9 8h1v1h-1zM1 9h1v1h-1zM4 9h6v1h-6zM0 10h1v1h-1zM4 10h1v1h-1zM9 10h1v1h-1z"/><path id="g81" d="M8 0h1v1h-1zM0 1h4v1h-4zM8 1h1v1h-1zM0 2h1v1h-1zM3 2h8v1h-8zM0 3h1v1h-1zM3 3h1v1h-1zM8 3h1v1h-1zM0 4h1v1h-1zM3 4h1v1h-1zM5 4h1v1h-1zM8 4h1v1h-1zM0 5h4v1h-4zM6 5h1v1h-1zM8 5h1v1h-1zM0 6h1v1h-1zM3 6h1v1h-1zM6 6h1v1h-1zM8 6h1v1h-1zM0 7h1v1h-1zM3 7h1v1h-1zM8 7h1v1h-1zM0 8h1v1h-1zM3 8h1v1h-1zM8 8h1v1h-1zM0 9h4v1h-4zM8 9h1v1h-1zM6 10h3v1h-3z"/><path id="g82" d="M2 0h1v1h-1zM5 0h6v1h-6zM3 1h1v1h-1zM10 1h1v1h-1zM1 2h1v1h-1zM10 2h1v1h-1zM1 3h1v1h-1zM4 3h4v1h-4zM10 3h1v1h-1zM1 4h1v1h-1zM4 4h1v1h-1zM7 4h1v1h-1zM10 4h1v1h-1zM1 5h1v1h-1zM4 5h4v1h-4zM10 5h1v1h-1zM1 6h1v1h-1zM4 6h1v1h-1zM7 6h1v1h-1zM10 6h1v1h-1zM1 7h1v1h-1zM4 7h1v1h-1zM7 7h1v1h-1zM10 7h1v1h-1zM1 8h1v1h-1zM4 8h4v1h-4zM10 8h1v1h-1zM1 9h1v1h-1zM10 9h1v1h-1zM1 10h1v1h-1zM8 10h3v1h-3z"/><path id="g83" d="M1 5h2v1h-2zM4 5h2v1h-2zM2 6h1v1h-1zM4 6h1v1h-1zM3 7h1v1h-1zM2 8h1v1h-1zM4 8h1v1h-1zM1 9h2v1h-2zM4 9h2v1h-2z"/><path id="g84" d="M1 0h7v1h-7zM3 1h1v1h-1zM7 1h1v1h-1zM3 2h1v1h-1zM6 2h1v1h-1zM3 3h1v1h-1zM6 3h1v1h-1zM3 4h1v1h-1zM5 4h5v1h-5zM3 5h1v1h-1zM9 5h1v1h-1zM2 6h1v1h-1zM4 6h1v1h-1zM8 6h1v1h-1zM2 7h1v1h-1zM5 7h1v1h-1zM7 7h1v1h-1zM1 8h1v1h-1zM6 8h1v1h-1zM1 9h1v1h-1zM5 9h1v1h-1zM7 9h2v1h-2zM0 10h1v1h-1zM3 10h2v1h-2zM9 10h2v1h-2z"/><path id="g85" d="M1 0h9v1h-9zM5 1h1v1h-1zM0 2h11v1h-11zM0 3h1v1h-1zM3 3h1v1h-1zM5 3h1v1h-1zM7 3h1v1h-1zM10 3h1v1h-1zM4 4h3v1h-3zM2 5h2v1h-2zM7 5h2v1h-2zM0 6h2v1h-2zM5 6h1v1h-1zM9 6h2v1h-2zM2 7h7v1h-7zM7 8h1v1h-1zM4 9h3v1h-3zM6 10h2v1h-2z"/><path id="g86" d="M5 0h1v1h-1zM1 1h10v1h-10zM1 2h1v1h-1zM1 3h1v1h-1zM3 3h6v1h-6zM1 4h1v1h-1zM5 4h1v1h-1zM7 4h1v1h-1zM1 5h1v1h-1zM6 5h1v1h-1zM1 6h10v1h-10zM1 7h1v1h-1zM6 7h1v1h-1zM9 7h1v1h-1zM1 8h1v1h-1zM6 8h1v1h-1zM0 9h1v1h-1zM6 9h1v1h-1zM0 10h1v1h-1zM4 10h3v1h-3z"/><path id="g87" d="M1 0h1v1h-1zM7 0h1v1h-1zM2 1h1v1h-1zM7 1h1v1h-1zM0 2h5v1h-5zM7 2h1v1h-1zM3 3h1v1h-1zM7 3h1v1h-1zM2 4h1v1h-1zM4 4h1v1h-1zM7 4h2v1h-2zM1 5h3v1h-3zM7 5h1v1h-1zM9 5h2v1h-2zM0 6h1v1h-1zM2 6h1v1h-1zM4 6h1v1h-1zM7 6h1v1h-1zM10 6h1v1h-1zM2 7h1v1h-1zM4 7h1v1h-1zM7 7h1v1h-1zM2 8h1v1h-1zM7 8h1v1h-1zM2 9h1v1h-1zM7 9h1v1h-1zM2 10h1v1h-1zM7 10h1v1h-1z"/><path id="g88" d="M2 0h1v1h-1zM4 0h1v1h-1zM7 0h1v1h-1zM10 0h1v1h-1zM2 1h1v1h-1zM5 1h1v1h-1zM7 1h1v1h-1zM9 1h1v1h-1zM1 2h1v1h-1zM7 2h1v1h-1zM1 3h1v1h-1zM3 3h8v1h-8zM0 4h2v1h-2zM3 4h1v1h-1zM10 4h1v1h-1zM1 5h1v1h-1zM4 5h6v1h-6zM1 6h1v1h-1zM1 7h1v1h-1zM3 7h8v1h-8zM1 8h1v1h-1zM6 8h1v1h-1zM1 9h1v1h-1zM5 9h1v1h-1zM9 9h1v1h-1zM1 10h1v1h-1zM4 10h7v1h-7z"/><path id="g89" d="M1 4h5v1h-5zM1 7h5v1h-5z"/><path id="g90" d="M3 2h1v1h-1zM3 3h1v1h-1zM3 4h1v1h-1zM1 5h5v1h-5zM3 6h1v1h-1zM3 7h1v1h-1zM3 8h1v1h-1z"/><path id="g91" d="M2 5h2v1h-2zM1 6h1v1h-1zM4 6h1v1h-1zM1 7h1v1h-1zM4 7h1v1h-1zM1 8h1v1h-1zM4 8h1v1h-1zM2 9h2v1h-2z"/><path id="g92" d="M2 0h1v1h-1zM5 0h6v1h-6zM2 1h1v1h-1zM0 2h5v1h-5zM6 2h4v1h-4zM0 3h1v1h-1zM2 3h1v1h-1zM4 3h1v1h-1zM6 3h1v1h-1zM9 3h1v1h-1zM0 4h1v1h-1zM2 4h1v1h-1zM4 4h1v1h-1zM6 4h4v1h-4zM0 5h1v1h-1zM2 5h1v1h-1zM4 5h1v1h-1zM0 6h1v1h-1zM2 6h1v1h-1zM4 6h7v1h-7zM0 7h1v1h-1zM2 7h4v1h-4zM7 7h1v1h-1zM10 7h1v1h-1zM2 8h1v1h-1zM5 8h6v1h-6zM2 9h1v1h-1zM5 9h1v1h-1zM7 9h1v1h-1zM10 9h1v1h-1zM2 10h1v1h-1zM5 10h6v1h-6z"/><path id="g93" d="M1 2h2v1h-2zM4 2h2v1h-2zM1 3h1v1h-1zM5 3h1v1h-1zM1 4h1v1h-1zM5 4h1v1h-1zM2 5h1v1h-1zM4 5h1v1h-1zM2 6h1v1h-1zM4 6h1v1h-1zM2 7h1v1h-1zM4 7h1v1h-1zM3 8h1v1h-1zM3 9h1v1h-1z"/><path id="g94" d="M3 0h1v1h-1zM6 0h1v1h-1zM3 1h1v1h-1zM7 1h1v1h-1zM2 2h1v1h-1zM2 3h1v1h-1zM4 3h7v1h-7zM1 4h2v1h-2zM0 5h1v1h-1zM2 5h1v1h-1zM5 5h1v1h-1zM9 5h1v1h-1zM2 6h1v1h-1zM6 6h1v1h-1zM9 6h1v1h-1zM2 7h1v1h-1zM6 7h1v1h-1zM8 7h1v1h-1zM2 8h1v1h-1zM8 8h1v1h-1zM2 9h1v1h-1zM7 9h1v1h-1zM2 10h1v1h-1zM4 10h7v1h-7z"/><path id="g95" d="M1 2h2v1h-2zM4 2h2v1h-2zM2 3h1v1h-1zM4 3h1v1h-1zM2 4h2v1h-2zM2 5h2v1h-2zM2 6h1v1h-1zM4 6h1v1h-1zM2 7h1v1h-1zM4 7h1v1h-1zM2 8h1v1h-1zM5 8h1v1h-1zM1 9h2v1h-2zM4 9h2v1h-2z"/><path id="g96" d="M1 2h3v1h-3zM2 3h1v1h-1zM2 4h1v1h-1zM2 5h1v1h-1zM2 6h1v1h-1zM2 7h1v1h-1zM2 8h1v1h-1zM5 8h1v1h-1zM1 9h5v1h-5z"/><path id="g97" d="M2 5h3v1h-3zM5 6h1v1h-1zM2 7h4v1h-4zM1 8h1v1h-1zM5 8h1v1h-1zM2 9h4v1h-4z"/><path id="g98" d="M1 2h2v1h-2zM2 3h1v1h-1zM2 4h1v1h-1zM2 5h3v1h-3zM2 6h1v1h-1zM5 6h1v1h-1zM2 7h1v1h-1zM5 7h1v1h-1zM2 8h1v1h-1zM5 8h1v1h-1zM1 9h4v1h-4z"/><path id="g99" d="M2 5h4v1h-4zM1 6h1v1h-1zM5 6h1v1h-1zM1 7h1v1h-1zM1 8h1v1h-1zM5 8h1v1h-1zM2 9h3v1h-3z"/><path id="g100" d="M2 2h4v1h-4zM1 3h1v1h-1zM5 3h1v1h-1zM1 4h1v1h-1zM1 5h1v1h-1zM1 6h1v1h-1zM1 7h1v1h-1zM1 8h1v1h-1zM5 8h1v1h-1zM2 9h3v1h-3z"/><path id="g101" d="M2 2h3v1h-3zM1 3h1v1h-1zM5 3h1v1h-1zM1 4h1v1h-1zM1 5h1v1h-1zM1 6h1v1h-1zM3 6h3v1h-3zM1 7h1v1h-1zM5 7h1v1h-1zM1 8h1v1h-1zM5 8h1v1h-1zM2 9h3v1h-3z"/><path id="g102" d="M2 2h4v1h-4zM1 3h1v1h-1zM5 3h1v1h-1zM1 4h1v1h-1zM2 5h2v1h-2zM4 6h1v1h-1zM5 7h1v1h-1zM1 8h1v1h-1zM5 8h1v1h-1zM1 9h4v1h-4z"/><path id="g103" d="M1 0h9v1h-9zM3 1h1v1h-1zM7 1h1v1h-1zM3 2h1v1h-1zM7 2h1v1h-1zM3 3h1v1h-1zM7 3h1v1h-1zM3 4h1v1h-1zM7 4h1v1h-1zM0 5h11v1h-11zM3 6h1v1h-1zM7 6h1v1h-1zM2 7h1v1h-1zM7 7h1v1h-1zM2 8h1v1h-1zM7 8h1v1h-1zM1 9h1v1h-1zM7 9h1v1h-1zM0 10h1v1h-1zM7 10h1v1h-1z"/><path id="g104" d="M2 0h1v1h-1zM7 0h1v1h-1zM2 1h1v1h-1zM7 1h1v1h-1zM0 2h5v1h-5zM6 2h1v1h-1zM9 2h1v1h-1zM2 3h1v1h-1zM4 3h1v1h-1zM6 3h1v1h-1zM10 3h1v1h-1zM2 4h1v1h-1zM4 4h7v1h-7zM1 5h1v1h-1zM4 5h1v1h-1zM1 6h1v1h-1zM3 6h1v1h-1zM6 6h5v1h-5zM2 7h2v1h-2zM6 7h1v1h-1zM10 7h1v1h-1zM2 8h1v1h-1zM4 8h1v1h-1zM6 8h1v1h-1zM10 8h1v1h-1zM1 9h1v1h-1zM4 9h1v1h-1zM6 9h5v1h-5zM0 10h1v1h-1zM6 10h1v1h-1zM10 10h1v1h-1z"/><path id="g105" d="M3 0h1v1h-1zM7 0h1v1h-1zM3 1h1v1h-1zM7 1h1v1h-1zM2 2h1v1h-1zM8 2h1v1h-1zM2 3h1v1h-1zM8 3h1v1h-1zM1 4h1v1h-1zM9 4h1v1h-1zM0 5h1v1h-1zM2 5h7v1h-7zM10 5h1v1h-1zM4 6h1v1h-1zM8 6h1v1h-1zM4 7h1v1h-1zM8 7h1v1h-1zM3 8h1v1h-1zM8 8h1v1h-1zM2 9h1v1h-1zM8 9h1v1h-1zM0 10h2v1h-2zM6 10h2v1h-2z"/><path id="g106" d="M2 1h3v1h-3zM1 2h1v1h-1zM5 2h1v1h-1zM1 3h1v1h-1zM5 3h1v1h-1zM1 4h1v1h-1zM5 4h1v1h-1zM1 5h1v1h-1zM5 5h1v1h-1zM1 6h1v1h-1zM5 6h1v1h-1zM1 7h1v1h-1zM5 7h1v1h-1zM2 8h3v1h-3z"/><path id="g107" d="M5 0h1v1h-1zM1 1h1v1h-1zM5 1h1v1h-1zM9 1h1v1h-1zM2 2h1v1h-1zM5 2h1v1h-1zM8 2h1v1h-1zM3 3h1v1h-1zM5 3h1v1h-1zM7 3h1v1h-1zM1 4h9v1h-9zM9 5h1v1h-1zM9 6h1v1h-1zM2 7h8v1h-8zM9 8h1v1h-1zM9 9h1v1h-1zM1 10h9v1h-9z"/><path id="g108" d="M3 0h1v1h-1zM8 0h1v1h-1zM4 1h1v1h-1zM7 1h1v1h-1zM1 2h10v1h-10zM2 4h4v1h-4zM7 4h1v1h-1zM9 4h1v1h-1zM2 5h1v1h-1zM5 5h1v1h-1zM7 5h1v1h-1zM9 5h1v1h-1zM2 6h4v1h-4zM7 6h1v1h-1zM9 6h1v1h-1zM2 7h1v1h-1zM5 7h1v1h-1zM7 7h1v1h-1zM9 7h1v1h-1zM2 8h4v1h-4zM7 8h1v1h-1zM9 8h1v1h-1zM2 9h1v1h-1zM5 9h1v1h-1zM9 9h1v1h-1zM2 10h1v1h-1zM4 10h2v1h-2zM7 10h3v1h-3z"/><path id="g109" d="M3 0h1v1h-1zM7 0h1v1h-1zM0 1h3v1h-3zM7 1h1v1h-1zM2 2h1v1h-1zM5 2h1v1h-1zM7 2h1v1h-1zM9 2h1v1h-1zM0 3h4v1h-4zM5 3h1v1h-1zM7 3h1v1h-1zM10 3h1v1h-1zM2 4h1v1h-1zM5 4h1v1h-1zM7 4h1v1h-1zM10 4h1v1h-1zM1 5h3v1h-3zM5 5h1v1h-1zM7 5h1v1h-1zM1 6h2v1h-2zM4 6h1v1h-1zM7 6h1v1h-1zM10 6h1v1h-1zM0 7h1v1h-1zM2 7h1v1h-1zM9 7h1v1h-1zM2 8h1v1h-1zM8 8h1v1h-1zM2 9h1v1h-1zM6 9h2v1h-2zM2 10h1v1h-1zM4 10h2v1h-2z"/><path id="g110" d="M3 1h1v1h-1zM1 2h3v1h-3zM3 3h1v1h-1zM3 4h1v1h-1zM3 5h1v1h-1zM3 6h1v1h-1zM3 7h1v1h-1zM1 8h5v1h-5z"/><path id="g111" d="M2 2h1v1h-1zM2 3h1v1h-1zM2 7h1v1h-1zM2 8h1v1h-1z"/><path id="g112" d="M1 1h5v1h-5zM1 2h1v1h-1zM1 3h1v1h-1zM1 4h4v1h-4zM5 5h1v1h-1zM5 6h1v1h-1zM1 7h1v1h-1zM5 7h1v1h-1zM2 8h3v1h-3z"/><path id="g113" d="M2 1h3v1h-3zM1 2h1v1h-1zM5 2h1v1h-1zM5 3h1v1h-1zM3 4h2v1h-2zM5 5h1v1h-1zM5 6h1v1h-1zM1 7h1v1h-1zM5 7h1v1h-1zM2 8h3v1h-3z"/><path id="g114" d="M2 1h3v1h-3zM1 2h1v1h-1zM5 2h1v1h-1zM5 3h1v1h-1zM4 4h1v1h-1zM3 5h1v1h-1zM2 6h1v1h-1zM1 7h1v1h-1zM1 8h5v1h-5z"/><path id="g115" d="M1 0h1v1h-1zM6 0h1v1h-1zM2 1h1v1h-1zM7 1h1v1h-1zM0 2h1v1h-1zM4 2h7v1h-7zM1 3h1v1h-1zM3 3h1v1h-1zM7 3h1v1h-1zM3 4h1v1h-1zM7 4h1v1h-1zM2 5h1v1h-1zM7 5h1v1h-1zM2 6h1v1h-1zM5 6h5v1h-5zM0 7h2v1h-2zM7 7h1v1h-1zM1 8h1v1h-1zM7 8h1v1h-1zM1 9h1v1h-1zM7 9h1v1h-1zM1 10h1v1h-1zM4 10h7v1h-7z"/><path id="g116" d="M5 0h1v1h-1zM1 1h9v1h-9zM3 2h1v1h-1zM7 2h1v1h-1zM0 3h11v1h-11zM2 4h1v1h-1zM8 4h1v1h-1zM2 5h7v1h-7zM2 6h1v1h-1zM8 6h1v1h-1zM2 7h7v1h-7zM1 8h1v1h-1zM3 8h1v1h-1zM5 8h1v1h-1zM9 8h1v1h-1zM1 9h1v1h-1zM3 9h1v1h-1zM6 9h1v1h-1zM8 9h1v1h-1zM10 9h1v1h-1zM0 10h1v1h-1zM3 10h6v1h-6zM10 10h1v1h-1z"/><path id="g117" d="M2 1h1v1h-1zM5 1h1v1h-1zM1 2h1v1h-1zM4 2h1v1h-1zM1 3h2v1h-2zM4 3h2v1h-2zM1 4h2v1h-2zM4 4h2v1h-2z"/><path id="g118" d="M0 1h2v1h-2zM3 1h2v1h-2zM0 2h2v1h-2zM3 2h2v1h-2zM1 3h1v1h-1zM4 3h1v1h-1zM0 4h1v1h-1zM3 4h1v1h-1z"/><path id="g119" d="M5 0h1v1h-1zM6 1h1v1h-1zM1 2h10v1h-10zM1 3h1v1h-1zM1 4h1v1h-1zM5 4h1v1h-1zM9 4h1v1h-1zM1 5h1v1h-1zM3 5h1v1h-1zM6 5h1v1h-1zM9 5h1v1h-1zM1 6h1v1h-1zM4 6h1v1h-1zM6 6h1v1h-1zM9 6h1v1h-1zM1 7h1v1h-1zM4 7h1v1h-1zM8 7h1v1h-1zM1 8h1v1h-1zM8 8h1v1h-1zM0 9h1v1h-1zM7 9h1v1h-1zM0 10h1v1h-1zM3 10h8v1h-8z"/><path id="g120" d="M5 0h1v1h-1zM5 1h1v1h-1zM5 2h1v1h-1zM0 3h11v1h-11zM5 4h1v1h-1zM5 5h1v1h-1zM4 6h1v1h-1zM6 6h1v1h-1zM4 7h1v1h-1zM6 7h1v1h-1zM3 8h1v1h-1zM7 8h1v1h-1zM2 9h1v1h-1zM8 9h1v1h-1zM0 10h2v1h-2zM9 10h2v1h-2z"/><path id="g121" d="M1 0h9v1h-9zM5 1h1v1h-1zM5 2h1v1h-1zM5 3h1v1h-1zM0 4h11v1h-11zM5 5h1v1h-1zM5 6h1v1h-1zM5 7h1v1h-1zM5 8h1v1h-1zM5 9h1v1h-1zM3 10h3v1h-3z"/><path id="g122" d="M2 0h7v1h-7zM2 1h1v1h-1zM8 1h1v1h-1zM2 2h7v1h-7zM2 3h1v1h-1zM8 3h1v1h-1zM0 4h11v1h-11zM1 5h1v1h-1zM4 5h1v1h-1zM1 6h9v1h-9zM1 7h1v1h-1zM4 7h1v1h-1zM6 7h1v1h-1zM9 7h1v1h-1zM1 8h4v1h-4zM7 8h2v1h-2zM0 9h2v1h-2zM4 9h1v1h-1zM7 9h2v1h-2zM4 10h3v1h-3zM9 10h2v1h-2z"/><path id="g123" d="M5 0h1v1h-1zM5 1h1v1h-1zM3 2h1v1h-1zM5 2h1v1h-1zM8 2h1v1h-1zM3 3h1v1h-1zM5 3h1v1h-1zM9 3h1v1h-1zM2 4h1v1h-1zM5 4h1v1h-1zM10 4h1v1h-1zM1 5h1v1h-1zM5 5h1v1h-1zM8 5h1v1h-1zM5 6h1v1h-1zM7 6h1v1h-1zM6 7h1v1h-1zM5 8h1v1h-1zM3 9h2v1h-2zM0 10h3v1h-3z"/><path id="g124" d="M1 0h1v1h-1zM7 0h1v1h-1zM2 1h1v1h-1zM5 1h5v1h-5zM7 2h1v1h-1zM0 3h3v1h-3zM4 3h7v1h-7zM2 4h1v1h-1zM6 4h1v1h-1zM8 4h1v1h-1zM10 4h1v1h-1zM2 5h1v1h-1zM5 5h1v1h-1zM7 5h2v1h-2zM2 6h1v1h-1zM6 6h1v1h-1zM8 6h1v1h-1zM2 7h1v1h-1zM4 7h7v1h-7zM2 8h2v1h-2zM7 8h2v1h-2zM2 9h1v1h-1zM6 9h1v1h-1zM9 9h1v1h-1zM4 10h2v1h-2zM10 10h1v1h-1z"/><path id="g125" d="M0 0h6v1h-6zM1 1h1v1h-1zM4 1h1v1h-1zM6 1h5v1h-5zM1 2h1v1h-1zM4 2h1v1h-1zM6 2h1v1h-1zM10 2h1v1h-1zM1 3h4v1h-4zM6 3h1v1h-1zM10 3h1v1h-1zM1 4h1v1h-1zM4 4h1v1h-1zM7 4h1v1h-1zM9 4h1v1h-1zM1 5h4v1h-4zM7 5h1v1h-1zM9 5h1v1h-1zM1 6h1v1h-1zM4 6h1v1h-1zM8 6h1v1h-1zM1 7h1v1h-1zM4 7h2v1h-2zM8 7h1v1h-1zM0 8h5v1h-5zM7 8h1v1h-1zM9 8h1v1h-1zM4 9h1v1h-1zM6 9h1v1h-1zM9 9h1v1h-1zM4 10h2v1h-2zM10 10h1v1h-1z"/><path id="g126" d="M1 0h1v1h-1zM7 0h1v1h-1zM1 1h1v1h-1zM7 1h1v1h-1zM1 2h10v1h-10zM0 3h1v1h-1zM5 3h1v1h-1zM7 3h1v1h-1zM10 3h1v1h-1zM1 4h3v1h-3zM5 4h1v1h-1zM7 4h1v1h-1zM10 4h1v1h-1zM2 5h1v1h-1zM5 5h1v1h-1zM7 5h1v1h-1zM10 5h1v1h-1zM0 6h11v1h-11zM2 7h1v1h-1zM7 7h1v1h-1zM2 8h1v1h-1zM4 8h1v1h-1zM7 8h1v1h-1zM2 9h2v1h-2zM7 9h1v1h-1zM2 10h1v1h-1zM7 10h1v1h-1z"/><path id="g127" d="M3 0h1v1h-1zM7 0h1v1h-1zM0 1h6v1h-6zM7 1h1v1h-1zM9 1h1v1h-1zM7 2h1v1h-1zM10 2h1v1h-1zM1 3h10v1h-10zM1 4h1v1h-1zM4 4h1v1h-1zM6 4h1v1h-1zM8 4h1v1h-1zM1 5h4v1h-4zM6 5h1v1h-1zM8 5h1v1h-1zM3 6h1v1h-1zM6 6h1v1h-1zM8 6h1v1h-1zM1 7h1v1h-1zM3 7h2v1h-2zM6 7h1v1h-1zM8 7h1v1h-1zM10 7h1v1h-1zM1 8h1v1h-1zM3 8h1v1h-1zM5 8h2v1h-2zM8 8h1v1h-1zM10 8h1v1h-1zM0 9h1v1h-1zM3 9h1v1h-1zM6 9h1v1h-1zM8 9h1v1h-1zM10 9h1v1h-1zM2 10h2v1h-2zM5 10h1v1h-1zM9 10h2v1h-2z"/><path id="g128" d="M2 0h1v1h-1zM7 0h1v1h-1zM2 1h1v1h-1zM5 1h4v1h-4zM10 1h1v1h-1zM1 2h1v1h-1zM4 2h1v1h-1zM7 2h1v1h-1zM9 2h1v1h-1zM1 3h1v1h-1zM3 3h1v1h-1zM5 3h6v1h-6zM0 4h3v1h-3zM7 4h1v1h-1zM2 5h1v1h-1zM6 5h5v1h-5zM1 6h1v1h-1zM5 6h2v1h-2zM10 6h1v1h-1zM0 7h4v1h-4zM6 7h5v1h-5zM4 8h1v1h-1zM6 8h1v1h-1zM10 8h1v1h-1zM2 9h2v1h-2zM6 9h5v1h-5zM0 10h2v1h-2zM6 10h1v1h-1zM10 10h1v1h-1z"/><path id="g129" d="M1 0h1v1h-1zM5 0h5v1h-5zM2 1h1v1h-1zM2 2h1v1h-1zM4 3h7v1h-7zM0 4h3v1h-3zM6 4h1v1h-1zM2 5h1v1h-1zM6 5h1v1h-1zM8 5h1v1h-1zM2 6h1v1h-1zM5 6h1v1h-1zM9 6h1v1h-1zM2 7h1v1h-1zM4 7h5v1h-5zM10 7h1v1h-1zM2 8h1v1h-1zM5 8h1v1h-1zM10 8h1v1h-1zM1 9h1v1h-1zM3 9h1v1h-1zM0 10h1v1h-1zM4 10h7v1h-7z"/><path id="g130" d="M2 0h1v1h-1zM5 0h5v1h-5zM1 1h1v1h-1zM0 2h1v1h-1zM3 3h1v1h-1zM2 4h1v1h-1zM4 4h7v1h-7zM1 5h2v1h-2zM8 5h1v1h-1zM0 6h1v1h-1zM2 6h1v1h-1zM8 6h1v1h-1zM2 7h1v1h-1zM8 7h1v1h-1zM2 8h1v1h-1zM8 8h1v1h-1zM2 9h1v1h-1zM8 9h1v1h-1zM2 10h1v1h-1zM6 10h3v1h-3z"/><path id="g131" d="M2 0h1v1h-1zM8 0h1v1h-1zM3 1h1v1h-1zM7 1h1v1h-1zM1 2h9v1h-9zM5 3h1v1h-1zM5 4h1v1h-1zM0 5h10v1h-10zM5 6h1v1h-1zM4 7h1v1h-1zM6 7h1v1h-1zM3 8h1v1h-1zM7 8h1v1h-1zM2 9h1v1h-1zM8 9h1v1h-1zM0 10h2v1h-2zM9 10h2v1h-2z"/><path id="g132" d="M2 0h7v1h-7zM2 1h1v1h-1zM8 1h1v1h-1zM2 2h7v1h-7zM2 3h1v1h-1zM8 3h1v1h-1zM0 4h11v1h-11zM2 5h1v1h-1zM5 5h1v1h-1zM8 5h1v1h-1zM2 6h7v1h-7zM2 7h1v1h-1zM5 7h1v1h-1zM8 7h1v1h-1zM1 8h9v1h-9zM5 9h1v1h-1zM0 10h11v1h-11z"/><path id="g133" d="M2 0h1v1h-1zM2 1h1v1h-1zM5 1h5v1h-5zM1 2h1v1h-1zM7 2h1v1h-1zM1 3h1v1h-1zM3 3h1v1h-1zM7 3h1v1h-1zM0 4h3v1h-3zM7 4h1v1h-1zM2 5h1v1h-1zM7 5h1v1h-1zM1 6h1v1h-1zM7 6h1v1h-1zM0 7h4v1h-4zM7 7h1v1h-1zM7 8h1v1h-1zM2 9h2v1h-2zM7 9h1v1h-1zM0 10h2v1h-2zM4 10h7v1h-7z"/><path id="g134" d="M7 0h1v1h-1zM1 1h4v1h-4zM7 1h1v1h-1zM7 2h1v1h-1zM6 3h5v1h-5zM0 4h6v1h-6zM7 4h1v1h-1zM10 4h1v1h-1zM2 5h1v1h-1zM7 5h1v1h-1zM10 5h1v1h-1zM2 6h1v1h-1zM7 6h1v1h-1zM10 6h1v1h-1zM1 7h1v1h-1zM4 7h1v1h-1zM7 7h1v1h-1zM10 7h1v1h-1zM0 8h5v1h-5zM6 8h1v1h-1zM10 8h1v1h-1zM4 9h1v1h-1zM6 9h1v1h-1zM10 9h1v1h-1zM5 10h1v1h-1zM8 10h2v1h-2z"/><path id="g135" d="M3 0h1v1h-1zM5 0h1v1h-1zM3 1h1v1h-1zM5 1h1v1h-1zM2 2h1v1h-1zM5 2h6v1h-6zM2 3h1v1h-1zM4 3h1v1h-1zM6 3h1v1h-1zM1 4h3v1h-3zM6 4h1v1h-1zM0 5h1v1h-1zM2 5h1v1h-1zM6 5h4v1h-4zM2 6h1v1h-1zM6 6h1v1h-1zM2 7h1v1h-1zM6 7h1v1h-1zM2 8h1v1h-1zM6 8h5v1h-5zM2 9h1v1h-1zM6 9h1v1h-1zM2 10h1v1h-1zM6 10h1v1h-1z"/><path id="g136" d="M3 6h2v1h-2zM3 7h2v1h-2zM4 8h1v1h-1zM3 9h1v1h-1z"/><path id="g137" d="M2 0h1v1h-1zM5 0h5v1h-5zM2 1h1v1h-1zM9 1h1v1h-1zM1 2h1v1h-1zM6 2h4v1h-4zM0 3h4v1h-4zM9 3h1v1h-1zM2 4h1v1h-1zM4 4h7v1h-7zM1 5h1v1h-1zM7 5h1v1h-1zM10 5h1v1h-1zM0 6h4v1h-4zM5 6h1v1h-1zM7 6h1v1h-1zM9 6h1v1h-1zM6 7h3v1h-3zM2 8h2v1h-2zM5 8h1v1h-1zM7 8h1v1h-1zM9 8h1v1h-1zM0 9h2v1h-2zM4 9h1v1h-1zM7 9h1v1h-1zM10 9h1v1h-1zM6 10h2v1h-2z"/><path id="g138" d="M1 0h1v1h-1zM9 0h2v1h-2zM2 1h1v1h-1zM5 1h4v1h-4zM2 2h1v1h-1zM5 2h1v1h-1zM5 3h6v1h-6zM0 4h3v1h-3zM5 4h2v1h-2zM10 4h1v1h-1zM2 5h1v1h-1zM5 5h1v1h-1zM7 5h1v1h-1zM9 5h1v1h-1zM2 6h1v1h-1zM5 6h1v1h-1zM8 6h1v1h-1zM2 7h1v1h-1zM4 7h1v1h-1zM7 7h1v1h-1zM9 7h1v1h-1zM2 8h1v1h-1zM5 8h2v1h-2zM10 8h1v1h-1zM1 9h1v1h-1zM3 9h1v1h-1zM0 10h1v1h-1zM4 10h7v1h-7z"/><path id="g139" d="M1 0h10v1h-10zM1 1h1v1h-1zM10 1h1v1h-1zM1 2h1v1h-1zM10 2h1v1h-1zM1 3h1v1h-1zM4 3h4v1h-4zM10 3h1v1h-1zM1 4h1v1h-1zM4 4h1v1h-1zM7 4h1v1h-1zM10 4h1v1h-1zM1 5h1v1h-1zM4 5h1v1h-1zM7 5h1v1h-1zM10 5h1v1h-1zM1 6h1v1h-1zM4 6h4v1h-4zM10 6h1v1h-1zM1 7h1v1h-1zM4 7h1v1h-1zM7 7h1v1h-1zM10 7h1v1h-1zM1 8h1v1h-1zM10 8h1v1h-1zM1 9h10v1h-10zM1 10h1v1h-1zM10 10h1v1h-1z"/><path id="g140" d="M1 5h2v1h-2zM4 5h2v1h-2zM2 6h2v1h-2zM2 7h1v1h-1zM2 8h1v1h-1zM1 9h3v1h-3z"/><path id="g141" d="M1 2h5v1h-5zM2 3h1v1h-1zM5 3h1v1h-1zM2 4h1v1h-1zM4 4h1v1h-1zM2 5h3v1h-3zM2 6h1v1h-1zM4 6h1v1h-1zM2 7h1v1h-1zM2 8h1v1h-1zM5 8h1v1h-1zM1 9h5v1h-5z"/><path id="g142" d="M2 5h3v1h-3zM1 6h1v1h-1zM5 6h1v1h-1zM1 7h5v1h-5zM1 8h1v1h-1zM2 9h4v1h-4z"/></defs>
<rect x="0" y="0" width="799" height="595" fill="#ECE9D8"/><rect x="0" y="0" width="799" height="1" fill="#3A8EFF"/><rect x="0" y="1" width="799" height="1" fill="#0A6EFF"/><rect x="0" y="2" width="799" height="1" fill="#0062F5"/><rect x="0" y="3" width="799" height="1" fill="#0058E8"/><rect x="0" y="4" width="799" height="1" fill="#0052DD"/><rect x="0" y="5" width="799" height="1" fill="#0052DD"/><rect x="0" y="6" width="799" height="1" fill="#0052DD"/><rect x="0" y="7" width="799" height="1" fill="#0052DD"/><rect x="0" y="8" width="799" height="1" fill="#0052DD"/><rect x="0" y="9" width="799" height="1" fill="#0052DD"/><rect x="0" y="10" width="799" height="1" fill="#0052DD"/><rect x="0" y="11" width="799" height="1" fill="#0052DD"/><rect x="0" y="12" width="799" height="1" fill="#0052DD"/><rect x="0" y="13" width="799" height="1" fill="#0055E2"/><rect x="0" y="14" width="799" height="1" fill="#0057E5"/><rect x="0" y="15" width="799" height="1" fill="#0059E8"/><rect x="0" y="16" width="799" height="1" fill="#005BEB"/><rect x="0" y="17" width="799" height="1" fill="#005EEF"/><rect x="0" y="18" width="799" height="1" fill="#0060F2"/><rect x="0" y="19" width="799" height="1" fill="#0064F8"/><rect x="0" y="20" width="799" height="1" fill="#0066FC"/><rect x="0" y="21" width="799" height="1" fill="#0066FF"/><rect x="0" y="22" width="799" height="1" fill="#0066FF"/><rect x="0" y="23" width="799" height="1" fill="#0064FA"/><rect x="0" y="24" width="799" height="1" fill="#005CF0"/><rect x="0" y="25" width="799" height="1" fill="#0046D8"/><rect x="0" y="26" width="799" height="1" fill="#0030C0"/><rect x="0" y="27" width="1" height="568" fill="#2470F0"/><rect x="1" y="27" width="1" height="568" fill="#0050E4"/><rect x="796" y="27" width="1" height="568" fill="#0848E0"/><rect x="797" y="27" width="1" height="568" fill="#0032C8"/><rect x="798" y="27" width="1" height="568" fill="#0022A8"/><rect x="799" y="0" width="1" height="595" fill="#001A90"/><rect x="5" y="5" width="14" height="16" fill="#E6E2D8"/><rect x="4" y="6" width="16" height="14" fill="#E6E2D8"/><rect x="6" y="6" width="12" height="14" fill="#F4F0E8"/><rect x="5" y="7" width="14" height="12" fill="#F4F0E8"/><rect x="6" y="7" width="12" height="12" fill="#62A393"/><rect x="8" y="14" width="2" height="2" fill="#40B8E0"/><rect x="10" y="13" width="1" height="3" fill="#F080C0"/><rect x="11" y="12" width="2" height="4" fill="#C040A0"/><rect x="13" y="9" width="1" height="7" fill="#E82030"/><rect x="14" y="11" width="2" height="5" fill="#FFD000"/><use href="#g0" x="25" y="8" fill="#0A246A"/><use href="#g0" x="26" y="8" fill="#0A246A"/><use href="#g1" x="39" y="8" fill="#0A246A"/><use href="#g1" x="40" y="8" fill="#0A246A"/><use href="#g2" x="53" y="8" fill="#0A246A"/><use href="#g2" x="54" y="8" fill="#0A246A"/><use href="#g3" x="67" y="8" fill="#0A246A"/><use href="#g3" x="68" y="8" fill="#0A246A"/><use href="#g0" x="24" y="7" fill="#FFFFFF"/><use href="#g0" x="25" y="7" fill="#FFFFFF"/><use href="#g1" x="38" y="7" fill="#FFFFFF"/><use href="#g1" x="39" y="7" fill="#FFFFFF"/><use href="#g2" x="52" y="7" fill="#FFFFFF"/><use href="#g2" x="53" y="7" fill="#FFFFFF"/><use href="#g3" x="66" y="7" fill="#FFFFFF"/><use href="#g3" x="67" y="7" fill="#FFFFFF"/><defs><linearGradient id="gmin" x1="0" y1="0" x2="1" y2="1"><stop offset="0" stop-color="#5A8FF5"/><stop offset="0.5" stop-color="#2663E8"/><stop offset="1" stop-color="#1A50D8"/></linearGradient><linearGradient id="gclose" x1="0" y1="0" x2="1" y2="1"><stop offset="0" stop-color="#F09070"/><stop offset="0.5" stop-color="#E05A30"/><stop offset="1" stop-color="#C83A10"/></linearGradient></defs><rect x="727.5" y="3.5" width="20" height="20" rx="3" fill="url(#gmin)" stroke="#FFFFFF" stroke-width="1" shape-rendering="auto"/><rect x="750.5" y="3.5" width="20" height="20" rx="3" fill="url(#gmin)" stroke="#B8CCF4" stroke-width="1" shape-rendering="auto"/><rect x="773.5" y="3.5" width="20" height="20" rx="3" fill="url(#gclose)" stroke="#FFFFFF" stroke-width="1" shape-rendering="auto"/><rect x="796" y="0" width="1" height="27" fill="#0A50E8"/><rect x="797" y="0" width="1" height="27" fill="#0038D0"/><rect x="798" y="0" width="1" height="27" fill="#0028B0"/><rect x="797" y="0" width="3" height="1" fill="#FFFFFF"/><rect x="798" y="1" width="2" height="1" fill="#FFFFFF"/><rect x="799" y="2" width="1" height="1" fill="#FFFFFF"/><rect x="758.5" y="4" width="1" height="1" fill="none"/><rect x="732" y="16" width="7" height="3" fill="#FFFFFF"/><rect x="755.5" y="8.5" width="10" height="10" fill="none" stroke="#9DB4F0" stroke-width="1"/><rect x="756" y="9" width="10" height="2" fill="#9DB4F0"/><path d="M778.5 8.5 L788.5 18.5 M788.5 8.5 L778.5 18.5" stroke="#FFFFFF" stroke-width="2.2" shape-rendering="auto"/><rect x="2" y="27" width="794" height="1" fill="#FFF8E8"/><use href="#g4" x="8" y="31" fill="#000"/><use href="#g5" x="20" y="31" fill="#000"/><use href="#g6" x="32" y="31" fill="#000"/><use href="#g7" x="38" y="31" fill="#000"/><use href="#g8" x="44" y="31" fill="#000"/><rect x="38" y="42" width="6" height="1" fill="#000"/><use href="#g9" x="62" y="31" fill="#000"/><use href="#g10" x="74" y="31" fill="#000"/><use href="#g11" x="98" y="31" fill="#000"/><use href="#g12" x="110" y="31" fill="#000"/><use href="#g6" x="122" y="31" fill="#000"/><use href="#g13" x="128" y="31" fill="#000"/><use href="#g8" x="134" y="31" fill="#000"/><rect x="128" y="42" width="6" height="1" fill="#000"/><rect x="2" y="46" width="794" height="1" fill="#FFFFFF"/><rect x="2" y="47" width="794" height="1" fill="#ACA899"/><rect x="6" y="50" width="1" height="22" fill="#FFFFFF"/><rect x="7" y="50" width="1" height="22" fill="#ACA899"/><rect x="2" y="73" width="793" height="1" fill="#ACA899"/><rect x="2" y="74" width="793" height="1" fill="#716F64"/><rect x="2" y="73" width="1" height="501" fill="#ACA899"/><rect x="3" y="74" width="1" height="499" fill="#716F64"/><rect x="795" y="73" width="1" height="502" fill="#FFFFFF"/><rect x="86" y="51" width="1" height="19" fill="#ACA899"/><rect x="87" y="51" width="1" height="19" fill="#FFFFFF"/><rect x="217" y="51" width="1" height="19" fill="#ACA899"/><rect x="218" y="51" width="1" height="19" fill="#FFFFFF"/><rect x="23" y="53" width="3" height="1" fill="#000000"/><rect x="22" y="54" width="1" height="1" fill="#000000"/><rect x="26" y="54" width="1" height="1" fill="#000000"/><rect x="28" y="54" width="1" height="1" fill="#000000"/><rect x="26" y="55" width="2" height="1" fill="#000000"/><rect x="14" y="56" width="4" height="1" fill="#000000"/><rect x="26" y="56" width="1" height="1" fill="#000000"/><rect x="14" y="57" width="1" height="1" fill="#000000"/><rect x="15" y="57" width="1" height="1" fill="#FFFF00"/><rect x="16" y="57" width="1" height="1" fill="#FFFFFF"/><rect x="17" y="57" width="1" height="1" fill="#FFFF00"/><rect x="18" y="57" width="1" height="1" fill="#000000"/><rect x="14" y="58" width="1" height="1" fill="#000000"/><rect x="15" y="58" width="1" height="1" fill="#FFFFFF"/><rect x="16" y="58" width="1" height="1" fill="#FFFF00"/><rect x="17" y="58" width="1" height="1" fill="#FFFFFF"/><rect x="18" y="58" width="1" height="1" fill="#FFFF00"/><rect x="19" y="58" width="6" height="1" fill="#000000"/><rect x="14" y="59" width="1" height="1" fill="#000000"/><rect x="15" y="59" width="1" height="1" fill="#FFFF00"/><rect x="16" y="59" width="1" height="1" fill="#FFFFFF"/><rect x="17" y="59" width="1" height="1" fill="#FFFF00"/><rect x="18" y="59" width="1" height="1" fill="#FFFFFF"/><rect x="19" y="59" width="1" height="1" fill="#FFFF00"/><rect x="20" y="59" width="1" height="1" fill="#FFFFFF"/><rect x="21" y="59" width="1" height="1" fill="#FFFF00"/><rect x="22" y="59" width="1" height="1" fill="#FFFFFF"/><rect x="23" y="59" width="1" height="1" fill="#FFFF00"/><rect x="24" y="59" width="1" height="1" fill="#000000"/><rect x="14" y="60" width="1" height="1" fill="#000000"/><rect x="15" y="60" width="1" height="1" fill="#FFFFFF"/><rect x="16" y="60" width="1" height="1" fill="#FFFF00"/><rect x="17" y="60" width="1" height="1" fill="#FFFFFF"/><rect x="18" y="60" width="1" height="1" fill="#FFFF00"/><rect x="19" y="60" width="11" height="1" fill="#000000"/><rect x="14" y="61" width="1" height="1" fill="#000000"/><rect x="15" y="61" width="1" height="1" fill="#FFFF00"/><rect x="16" y="61" width="1" height="1" fill="#FFFFFF"/><rect x="17" y="61" width="1" height="1" fill="#FFFF00"/><rect x="18" y="61" width="1" height="1" fill="#000000"/><rect x="19" y="61" width="9" height="1" fill="#808000"/><rect x="28" y="61" width="1" height="1" fill="#000000"/><rect x="14" y="62" width="1" height="1" fill="#000000"/><rect x="15" y="62" width="1" height="1" fill="#FFFFFF"/><rect x="16" y="62" width="1" height="1" fill="#FFFF00"/><rect x="17" y="62" width="1" height="1" fill="#000000"/><rect x="18" y="62" width="9" height="1" fill="#808000"/><rect x="27" y="62" width="1" height="1" fill="#000000"/><rect x="14" y="63" width="1" height="1" fill="#000000"/><rect x="15" y="63" width="1" height="1" fill="#FFFF00"/><rect x="16" y="63" width="1" height="1" fill="#000000"/><rect x="17" y="63" width="9" height="1" fill="#808000"/><rect x="26" y="63" width="1" height="1" fill="#000000"/><rect x="14" y="64" width="2" height="1" fill="#000000"/><rect x="16" y="64" width="9" height="1" fill="#808000"/><rect x="25" y="64" width="1" height="1" fill="#000000"/><rect x="14" y="65" width="11" height="1" fill="#000000"/><rect x="39" y="53" width="15" height="1" fill="#000000"/><rect x="39" y="54" width="1" height="1" fill="#000000"/><rect x="40" y="54" width="2" height="1" fill="#808000"/><rect x="42" y="54" width="9" height="1" fill="#E4E4DC"/><rect x="51" y="54" width="1" height="1" fill="#808000"/><rect x="52" y="54" width="1" height="1" fill="#FFFFFF"/><rect x="53" y="54" width="1" height="1" fill="#000000"/><rect x="39" y="55" width="1" height="1" fill="#000000"/><rect x="40" y="55" width="2" height="1" fill="#808000"/><rect x="42" y="55" width="9" height="1" fill="#E4E4DC"/><rect x="51" y="55" width="2" height="1" fill="#808000"/><rect x="53" y="55" width="1" height="1" fill="#000000"/><rect x="39" y="56" width="1" height="1" fill="#000000"/><rect x="40" y="56" width="2" height="1" fill="#808000"/><rect x="42" y="56" width="9" height="1" fill="#E4E4DC"/><rect x="51" y="56" width="2" height="1" fill="#808000"/><rect x="53" y="56" width="1" height="1" fill="#000000"/><rect x="39" y="57" width="1" height="1" fill="#000000"/><rect x="40" y="57" width="2" height="1" fill="#808000"/><rect x="42" y="57" width="9" height="1" fill="#E4E4DC"/><rect x="51" y="57" width="2" height="1" fill="#808000"/><rect x="53" y="57" width="1" height="1" fill="#000000"/><rect x="39" y="58" width="1" height="1" fill="#000000"/><rect x="40" y="58" width="2" height="1" fill="#808000"/><rect x="42" y="58" width="9" height="1" fill="#E4E4DC"/><rect x="51" y="58" width="2" height="1" fill="#808000"/><rect x="53" y="58" width="1" height="1" fill="#000000"/><rect x="39" y="59" width="1" height="1" fill="#000000"/><rect x="40" y="59" width="2" height="1" fill="#808000"/><rect x="42" y="59" width="9" height="1" fill="#E4E4DC"/><rect x="51" y="59" width="2" height="1" fill="#808000"/><rect x="53" y="59" width="1" height="1" fill="#000000"/><rect x="39" y="60" width="1" height="1" fill="#000000"/><rect x="40" y="60" width="13" height="1" fill="#808000"/><rect x="53" y="60" width="1" height="1" fill="#000000"/><rect x="39" y="61" width="1" height="1" fill="#000000"/><rect x="40" y="61" width="13" height="1" fill="#808000"/><rect x="53" y="61" width="1" height="1" fill="#000000"/><rect x="39" y="62" width="1" height="1" fill="#000000"/><rect x="40" y="62" width="2" height="1" fill="#808000"/><rect x="42" y="62" width="9" height="1" fill="#000000"/><rect x="51" y="62" width="2" height="1" fill="#808000"/><rect x="53" y="62" width="1" height="1" fill="#000000"/><rect x="39" y="63" width="1" height="1" fill="#000000"/><rect x="40" y="63" width="2" height="1" fill="#808000"/><rect x="42" y="63" width="6" height="1" fill="#000000"/><rect x="48" y="63" width="2" height="1" fill="#E4E4DC"/><rect x="50" y="63" width="1" height="1" fill="#000000"/><rect x="51" y="63" width="2" height="1" fill="#808000"/><rect x="53" y="63" width="1" height="1" fill="#000000"/><rect x="39" y="64" width="1" height="1" fill="#000000"/><rect x="40" y="64" width="2" height="1" fill="#808000"/><rect x="42" y="64" width="6" height="1" fill="#000000"/><rect x="48" y="64" width="2" height="1" fill="#E4E4DC"/><rect x="50" y="64" width="1" height="1" fill="#000000"/><rect x="51" y="64" width="2" height="1" fill="#808000"/><rect x="53" y="64" width="1" height="1" fill="#000000"/><rect x="39" y="65" width="1" height="1" fill="#000000"/><rect x="40" y="65" width="2" height="1" fill="#808000"/><rect x="42" y="65" width="6" height="1" fill="#000000"/><rect x="48" y="65" width="2" height="1" fill="#E4E4DC"/><rect x="50" y="65" width="1" height="1" fill="#000000"/><rect x="51" y="65" width="2" height="1" fill="#808000"/><rect x="53" y="65" width="1" height="1" fill="#000000"/><rect x="39" y="66" width="15" height="1" fill="#000000"/><rect x="66" y="52" width="1" height="1" fill="#000000"/><rect x="67" y="52" width="1" height="1" fill="#0000FF"/><rect x="68" y="52" width="1" height="1" fill="#000000"/><rect x="69" y="52" width="1" height="1" fill="#0000FF"/><rect x="70" y="52" width="1" height="1" fill="#000000"/><rect x="71" y="52" width="1" height="1" fill="#0000FF"/><rect x="72" y="52" width="1" height="1" fill="#000000"/><rect x="73" y="52" width="1" height="1" fill="#0000FF"/><rect x="74" y="52" width="1" height="1" fill="#000000"/><rect x="75" y="52" width="1" height="1" fill="#0000FF"/><rect x="76" y="52" width="1" height="1" fill="#000000"/><rect x="65" y="53" width="1" height="1" fill="#000000"/><rect x="66" y="53" width="10" height="1" fill="#FFFFFF"/><rect x="76" y="53" width="1" height="1" fill="#0000FF"/><rect x="64" y="54" width="1" height="1" fill="#000000"/><rect x="65" y="54" width="1" height="1" fill="#FFFFFF"/><rect x="66" y="54" width="1" height="1" fill="#000000"/><rect x="67" y="54" width="1" height="1" fill="#0000FF"/><rect x="68" y="54" width="1" height="1" fill="#000000"/><rect x="69" y="54" width="1" height="1" fill="#0000FF"/><rect x="70" y="54" width="1" height="1" fill="#000000"/><rect x="71" y="54" width="1" height="1" fill="#0000FF"/><rect x="72" y="54" width="1" height="1" fill="#000000"/><rect x="73" y="54" width="1" height="1" fill="#0000FF"/><rect x="74" y="54" width="1" height="1" fill="#000000"/><rect x="75" y="54" width="1" height="1" fill="#FFFFFF"/><rect x="76" y="54" width="1" height="1" fill="#000000"/><rect x="63" y="55" width="1" height="1" fill="#000000"/><rect x="64" y="55" width="1" height="1" fill="#FFFFFF"/><rect x="65" y="55" width="1" height="1" fill="#000000"/><rect x="66" y="55" width="1" height="1" fill="#0000FF"/><rect x="67" y="55" width="1" height="1" fill="#000000"/><rect x="68" y="55" width="1" height="1" fill="#0000FF"/><rect x="69" y="55" width="1" height="1" fill="#000000"/><rect x="70" y="55" width="1" height="1" fill="#0000FF"/><rect x="71" y="55" width="1" height="1" fill="#000000"/><rect x="72" y="55" width="1" height="1" fill="#0000FF"/><rect x="73" y="55" width="1" height="1" fill="#000000"/><rect x="74" y="55" width="1" height="1" fill="#0000FF"/><rect x="75" y="55" width="1" height="1" fill="#FFFFFF"/><rect x="76" y="55" width="1" height="1" fill="#0000FF"/><rect x="63" y="56" width="1" height="1" fill="#0000FF"/><rect x="64" y="56" width="1" height="1" fill="#FFFFFF"/><rect x="65" y="56" width="1" height="1" fill="#0000FF"/><rect x="66" y="56" width="1" height="1" fill="#000000"/><rect x="67" y="56" width="1" height="1" fill="#0000FF"/><rect x="68" y="56" width="1" height="1" fill="#000000"/><rect x="69" y="56" width="1" height="1" fill="#0000FF"/><rect x="70" y="56" width="1" height="1" fill="#000000"/><rect x="71" y="56" width="1" height="1" fill="#0000FF"/><rect x="72" y="56" width="1" height="1" fill="#000000"/><rect x="73" y="56" width="1" height="1" fill="#0000FF"/><rect x="74" y="56" width="1" height="1" fill="#000000"/><rect x="75" y="56" width="1" height="1" fill="#0000FF"/><rect x="76" y="56" width="1" height="1" fill="#000000"/><rect x="77" y="56" width="1" height="1" fill="#0000FF"/><rect x="78" y="56" width="1" height="1" fill="#000000"/><rect x="79" y="56" width="1" height="1" fill="#0000FF"/><rect x="63" y="57" width="1" height="1" fill="#000000"/><rect x="64" y="57" width="1" height="1" fill="#FFFFFF"/><rect x="65" y="57" width="1" height="1" fill="#000000"/><rect x="66" y="57" width="1" height="1" fill="#0000FF"/><rect x="67" y="57" width="1" height="1" fill="#000000"/><rect x="68" y="57" width="1" height="1" fill="#0000FF"/><rect x="69" y="57" width="10" height="1" fill="#FFFFFF"/><rect x="79" y="57" width="1" height="1" fill="#000000"/><rect x="63" y="58" width="1" height="1" fill="#0000FF"/><rect x="64" y="58" width="1" height="1" fill="#FFFFFF"/><rect x="65" y="58" width="1" height="1" fill="#0000FF"/><rect x="66" y="58" width="1" height="1" fill="#000000"/><rect x="67" y="58" width="1" height="1" fill="#0000FF"/><rect x="68" y="58" width="1" height="1" fill="#000000"/><rect x="69" y="58" width="10" height="1" fill="#FFFFFF"/><rect x="79" y="58" width="1" height="1" fill="#0000FF"/><rect x="63" y="59" width="1" height="1" fill="#000000"/><rect x="64" y="59" width="1" height="1" fill="#FFFFFF"/><rect x="65" y="59" width="1" height="1" fill="#000000"/><rect x="66" y="59" width="1" height="1" fill="#0000FF"/><rect x="67" y="59" width="1" height="1" fill="#000000"/><rect x="68" y="59" width="1" height="1" fill="#0000FF"/><rect x="69" y="59" width="1" height="1" fill="#FFFFFF"/><rect x="70" y="59" width="1" height="1" fill="#0000FF"/><rect x="71" y="59" width="1" height="1" fill="#000000"/><rect x="72" y="59" width="1" height="1" fill="#0000FF"/><rect x="73" y="59" width="1" height="1" fill="#000000"/><rect x="74" y="59" width="1" height="1" fill="#0000FF"/><rect x="75" y="59" width="1" height="1" fill="#000000"/><rect x="76" y="59" width="1" height="1" fill="#0000FF"/><rect x="77" y="59" width="1" height="1" fill="#000000"/><rect x="78" y="59" width="1" height="1" fill="#FFFFFF"/><rect x="79" y="59" width="1" height="1" fill="#000000"/><rect x="63" y="60" width="1" height="1" fill="#0000FF"/><rect x="64" y="60" width="1" height="1" fill="#FFFFFF"/><rect x="65" y="60" width="1" height="1" fill="#0000FF"/><rect x="66" y="60" width="1" height="1" fill="#000000"/><rect x="67" y="60" width="1" height="1" fill="#0000FF"/><rect x="68" y="60" width="1" height="1" fill="#000000"/><rect x="69" y="60" width="1" height="1" fill="#FFFFFF"/><rect x="70" y="60" width="1" height="1" fill="#000000"/><rect x="71" y="60" width="1" height="1" fill="#FFFFFF"/><rect x="72" y="60" width="1" height="1" fill="#000000"/><rect x="73" y="60" width="1" height="1" fill="#0000FF"/><rect x="74" y="60" width="1" height="1" fill="#000000"/><rect x="75" y="60" width="1" height="1" fill="#FFFFFF"/><rect x="76" y="60" width="1" height="1" fill="#000000"/><rect x="77" y="60" width="1" height="1" fill="#0000FF"/><rect x="78" y="60" width="1" height="1" fill="#FFFFFF"/><rect x="79" y="60" width="1" height="1" fill="#0000FF"/><rect x="63" y="61" width="1" height="1" fill="#000000"/><rect x="64" y="61" width="1" height="1" fill="#FFFFFF"/><rect x="65" y="61" width="1" height="1" fill="#000000"/><rect x="66" y="61" width="1" height="1" fill="#0000FF"/><rect x="67" y="61" width="1" height="1" fill="#000000"/><rect x="68" y="61" width="1" height="1" fill="#0000FF"/><rect x="69" y="61" width="1" height="1" fill="#FFFFFF"/><rect x="70" y="61" width="1" height="1" fill="#0000FF"/><rect x="71" y="61" width="1" height="1" fill="#FFFFFF"/><rect x="72" y="61" width="1" height="1" fill="#0000FF"/><rect x="73" y="61" width="1" height="1" fill="#000000"/><rect x="74" y="61" width="1" height="1" fill="#0000FF"/><rect x="75" y="61" width="1" height="1" fill="#FFFFFF"/><rect x="76" y="61" width="1" height="1" fill="#0000FF"/><rect x="77" y="61" width="1" height="1" fill="#000000"/><rect x="78" y="61" width="1" height="1" fill="#FFFFFF"/><rect x="79" y="61" width="1" height="1" fill="#000000"/><rect x="63" y="62" width="1" height="1" fill="#0000FF"/><rect x="64" y="62" width="1" height="1" fill="#FFFFFF"/><rect x="65" y="62" width="1" height="1" fill="#0000FF"/><rect x="66" y="62" width="1" height="1" fill="#000000"/><rect x="67" y="62" width="1" height="1" fill="#0000FF"/><rect x="68" y="62" width="1" height="1" fill="#000000"/><rect x="69" y="62" width="1" height="1" fill="#FFFFFF"/><rect x="70" y="62" width="1" height="1" fill="#000000"/><rect x="71" y="62" width="1" height="1" fill="#0000FF"/><rect x="72" y="62" width="1" height="1" fill="#FFFFFF"/><rect x="73" y="62" width="1" height="1" fill="#0000FF"/><rect x="74" y="62" width="1" height="1" fill="#FFFFFF"/><rect x="75" y="62" width="1" height="1" fill="#0000FF"/><rect x="76" y="62" width="1" height="1" fill="#000000"/><rect x="77" y="62" width="1" height="1" fill="#0000FF"/><rect x="78" y="62" width="1" height="1" fill="#FFFFFF"/><rect x="79" y="62" width="1" height="1" fill="#0000FF"/><rect x="63" y="63" width="1" height="1" fill="#000000"/><rect x="64" y="63" width="1" height="1" fill="#FFFFFF"/><rect x="65" y="63" width="1" height="1" fill="#000000"/><rect x="66" y="63" width="1" height="1" fill="#0000FF"/><rect x="67" y="63" width="1" height="1" fill="#000000"/><rect x="68" y="63" width="1" height="1" fill="#0000FF"/><rect x="69" y="63" width="1" height="1" fill="#FFFFFF"/><rect x="70" y="63" width="1" height="1" fill="#0000FF"/><rect x="71" y="63" width="1" height="1" fill="#000000"/><rect x="72" y="63" width="1" height="1" fill="#0000FF"/><rect x="73" y="63" width="1" height="1" fill="#000000"/><rect x="74" y="63" width="1" height="1" fill="#0000FF"/><rect x="75" y="63" width="1" height="1" fill="#000000"/><rect x="76" y="63" width="1" height="1" fill="#0000FF"/><rect x="77" y="63" width="1" height="1" fill="#000000"/><rect x="78" y="63" width="1" height="1" fill="#FFFFFF"/><rect x="79" y="63" width="1" height="1" fill="#000000"/><rect x="63" y="64" width="1" height="1" fill="#0000FF"/><rect x="64" y="64" width="7" height="1" fill="#FFFFFF"/><rect x="71" y="64" width="1" height="1" fill="#0000FF"/><rect x="72" y="64" width="1" height="1" fill="#000000"/><rect x="73" y="64" width="1" height="1" fill="#0000FF"/><rect x="74" y="64" width="1" height="1" fill="#000000"/><rect x="75" y="64" width="1" height="1" fill="#0000FF"/><rect x="76" y="64" width="1" height="1" fill="#000000"/><rect x="77" y="64" width="1" height="1" fill="#0000FF"/><rect x="78" y="64" width="1" height="1" fill="#FFFFFF"/><rect x="79" y="64" width="1" height="1" fill="#0000FF"/><rect x="63" y="65" width="1" height="1" fill="#000000"/><rect x="64" y="65" width="1" height="1" fill="#0000FF"/><rect x="65" y="65" width="1" height="1" fill="#000000"/><rect x="66" y="65" width="1" height="1" fill="#0000FF"/><rect x="67" y="65" width="1" height="1" fill="#000000"/><rect x="68" y="65" width="1" height="1" fill="#0000FF"/><rect x="69" y="65" width="1" height="1" fill="#000000"/><rect x="70" y="65" width="9" height="1" fill="#FFFFFF"/><rect x="79" y="65" width="1" height="1" fill="#000000"/><rect x="69" y="66" width="1" height="1" fill="#0000FF"/><rect x="70" y="66" width="9" height="1" fill="#FFFFFF"/><rect x="79" y="66" width="1" height="1" fill="#0000FF"/><rect x="69" y="67" width="1" height="1" fill="#000000"/><rect x="70" y="67" width="1" height="1" fill="#0000FF"/><rect x="71" y="67" width="1" height="1" fill="#000000"/><rect x="72" y="67" width="1" height="1" fill="#0000FF"/><rect x="73" y="67" width="1" height="1" fill="#000000"/><rect x="74" y="67" width="1" height="1" fill="#0000FF"/><rect x="75" y="67" width="1" height="1" fill="#000000"/><rect x="76" y="67" width="1" height="1" fill="#0000FF"/><rect x="77" y="67" width="1" height="1" fill="#000000"/><rect x="78" y="67" width="1" height="1" fill="#0000FF"/><rect x="79" y="67" width="1" height="1" fill="#000000"/><rect x="169" y="53" width="16" height="1" fill="#000000"/><rect x="169" y="54" width="16" height="1" fill="#000000"/><rect x="169" y="55" width="2" height="1" fill="#000000"/><rect x="171" y="55" width="12" height="1" fill="#F0F0F0"/><rect x="183" y="55" width="2" height="1" fill="#000000"/><rect x="169" y="56" width="2" height="1" fill="#000000"/><rect x="171" y="56" width="1" height="1" fill="#F0F0F0"/><rect x="172" y="56" width="10" height="1" fill="#000000"/><rect x="182" y="56" width="1" height="1" fill="#F0F0F0"/><rect x="183" y="56" width="2" height="1" fill="#000000"/><rect x="169" y="57" width="2" height="1" fill="#000000"/><rect x="171" y="57" width="1" height="1" fill="#F0F0F0"/><rect x="172" y="57" width="1" height="1" fill="#000000"/><rect x="173" y="57" width="8" height="1" fill="#008000"/><rect x="181" y="57" width="1" height="1" fill="#000000"/><rect x="182" y="57" width="1" height="1" fill="#F0F0F0"/><rect x="183" y="57" width="2" height="1" fill="#000000"/><rect x="169" y="58" width="2" height="1" fill="#000000"/><rect x="171" y="58" width="1" height="1" fill="#F0F0F0"/><rect x="172" y="58" width="1" height="1" fill="#000000"/><rect x="173" y="58" width="1" height="1" fill="#008000"/><rect x="174" y="58" width="1" height="1" fill="#000000"/><rect x="175" y="58" width="2" height="1" fill="#FFFF00"/><rect x="177" y="58" width="1" height="1" fill="#008000"/><rect x="178" y="58" width="1" height="1" fill="#000000"/><rect x="179" y="58" width="2" height="1" fill="#008000"/><rect x="181" y="58" width="1" height="1" fill="#000000"/><rect x="182" y="58" width="1" height="1" fill="#F0F0F0"/><rect x="183" y="58" width="2" height="1" fill="#000000"/><rect x="169" y="59" width="2" height="1" fill="#000000"/><rect x="171" y="59" width="1" height="1" fill="#F0F0F0"/><rect x="172" y="59" width="1" height="1" fill="#000000"/><rect x="173" y="59" width="1" height="1" fill="#008000"/><rect x="174" y="59" width="1" height="1" fill="#FFFF00"/><rect x="175" y="59" width="1" height="1" fill="#008000"/><rect x="176" y="59" width="1" height="1" fill="#000000"/><rect x="177" y="59" width="1" height="1" fill="#FFFF00"/><rect x="178" y="59" width="1" height="1" fill="#000000"/><rect x="179" y="59" width="2" height="1" fill="#008000"/><rect x="181" y="59" width="1" height="1" fill="#000000"/><rect x="182" y="59" width="1" height="1" fill="#F0F0F0"/><rect x="183" y="59" width="2" height="1" fill="#000000"/><rect x="169" y="60" width="2" height="1" fill="#000000"/><rect x="171" y="60" width="1" height="1" fill="#F0F0F0"/><rect x="172" y="60" width="1" height="1" fill="#000000"/><rect x="173" y="60" width="1" height="1" fill="#FFFF00"/><rect x="174" y="60" width="1" height="1" fill="#000000"/><rect x="175" y="60" width="1" height="1" fill="#008000"/><rect x="176" y="60" width="1" height="1" fill="#000000"/><rect x="177" y="60" width="1" height="1" fill="#008000"/><rect x="178" y="60" width="1" height="1" fill="#FFFF00"/><rect x="179" y="60" width="1" height="1" fill="#000000"/><rect x="180" y="60" width="1" height="1" fill="#FFFF00"/><rect x="181" y="60" width="1" height="1" fill="#000000"/><rect x="182" y="60" width="1" height="1" fill="#F0F0F0"/><rect x="183" y="60" width="2" height="1" fill="#000000"/><rect x="169" y="61" width="2" height="1" fill="#000000"/><rect x="171" y="61" width="1" height="1" fill="#F0F0F0"/><rect x="172" y="61" width="1" height="1" fill="#000000"/><rect x="173" y="61" width="1" height="1" fill="#008000"/><rect x="174" y="61" width="1" height="1" fill="#000000"/><rect x="175" y="61" width="1" height="1" fill="#008000"/><rect x="176" y="61" width="1" height="1" fill="#000000"/><rect x="177" y="61" width="2" height="1" fill="#008000"/><rect x="179" y="61" width="1" height="1" fill="#FFFF00"/><rect x="180" y="61" width="1" height="1" fill="#008000"/><rect x="181" y="61" width="1" height="1" fill="#000000"/><rect x="182" y="61" width="1" height="1" fill="#F0F0F0"/><rect x="183" y="61" width="2" height="1" fill="#000000"/><rect x="169" y="62" width="2" height="1" fill="#000000"/><rect x="171" y="62" width="1" height="1" fill="#F0F0F0"/><rect x="172" y="62" width="1" height="1" fill="#000000"/><rect x="173" y="62" width="1" height="1" fill="#008000"/><rect x="174" y="62" width="1" height="1" fill="#000000"/><rect x="175" y="62" width="1" height="1" fill="#008000"/><rect x="176" y="62" width="1" height="1" fill="#000000"/><rect x="177" y="62" width="1" height="1" fill="#008000"/><rect x="178" y="62" width="1" height="1" fill="#000000"/><rect x="179" y="62" width="1" height="1" fill="#008000"/><rect x="180" y="62" width="2" height="1" fill="#000000"/><rect x="182" y="62" width="1" height="1" fill="#F0F0F0"/><rect x="183" y="62" width="2" height="1" fill="#000000"/><rect x="169" y="63" width="2" height="1" fill="#000000"/><rect x="171" y="63" width="1" height="1" fill="#F0F0F0"/><rect x="172" y="63" width="10" height="1" fill="#000000"/><rect x="182" y="63" width="1" height="1" fill="#F0F0F0"/><rect x="183" y="63" width="2" height="1" fill="#000000"/><rect x="169" y="64" width="2" height="1" fill="#000000"/><rect x="171" y="64" width="12" height="1" fill="#F0F0F0"/><rect x="183" y="64" width="2" height="1" fill="#000000"/><rect x="169" y="65" width="16" height="1" fill="#000000"/><rect x="169" y="66" width="16" height="1" fill="#000000"/><rect x="199" y="53" width="1" height="1" fill="#000000"/><rect x="198" y="54" width="1" height="1" fill="#000000"/><rect x="199" y="54" width="1" height="1" fill="#00FF00"/><rect x="200" y="54" width="1" height="1" fill="#000000"/><rect x="197" y="55" width="1" height="1" fill="#000000"/><rect x="198" y="55" width="2" height="1" fill="#00FF00"/><rect x="200" y="55" width="7" height="1" fill="#000000"/><rect x="196" y="56" width="1" height="1" fill="#000000"/><rect x="197" y="56" width="10" height="1" fill="#00FF00"/><rect x="207" y="56" width="1" height="1" fill="#000000"/><rect x="195" y="57" width="1" height="1" fill="#000000"/><rect x="196" y="57" width="12" height="1" fill="#00FF00"/><rect x="208" y="57" width="1" height="1" fill="#000000"/><rect x="196" y="58" width="1" height="1" fill="#000000"/><rect x="197" y="58" width="3" height="1" fill="#00FF00"/><rect x="200" y="58" width="6" height="1" fill="#000000"/><rect x="206" y="58" width="2" height="1" fill="#00FF00"/><rect x="208" y="58" width="1" height="1" fill="#000000"/><rect x="197" y="59" width="1" height="1" fill="#000000"/><rect x="198" y="59" width="2" height="1" fill="#00FF00"/><rect x="200" y="59" width="1" height="1" fill="#000000"/><rect x="205" y="59" width="1" height="1" fill="#000000"/><rect x="206" y="59" width="2" height="1" fill="#00FF00"/><rect x="208" y="59" width="1" height="1" fill="#000000"/><rect x="198" y="60" width="1" height="1" fill="#000000"/><rect x="199" y="60" width="1" height="1" fill="#00FF00"/><rect x="200" y="60" width="1" height="1" fill="#000000"/><rect x="205" y="60" width="1" height="1" fill="#000000"/><rect x="206" y="60" width="2" height="1" fill="#00FF00"/><rect x="208" y="60" width="1" height="1" fill="#000000"/><rect x="199" y="61" width="1" height="1" fill="#000000"/><rect x="205" y="61" width="1" height="1" fill="#000000"/><rect x="206" y="61" width="2" height="1" fill="#00FF00"/><rect x="208" y="61" width="1" height="1" fill="#000000"/><rect x="201" y="62" width="5" height="1" fill="#000000"/><rect x="206" y="62" width="2" height="1" fill="#00FF00"/><rect x="208" y="62" width="1" height="1" fill="#000000"/><rect x="200" y="63" width="1" height="1" fill="#000000"/><rect x="201" y="63" width="7" height="1" fill="#00FF00"/><rect x="208" y="63" width="1" height="1" fill="#000000"/><rect x="200" y="64" width="1" height="1" fill="#000000"/><rect x="201" y="64" width="6" height="1" fill="#00FF00"/><rect x="207" y="64" width="1" height="1" fill="#000000"/><rect x="201" y="65" width="6" height="1" fill="#000000"/><rect x="226" y="54" width="13" height="1" fill="#00FFFF"/><rect x="239" y="54" width="1" height="1" fill="#000080"/><rect x="226" y="55" width="1" height="1" fill="#00FFFF"/><rect x="227" y="55" width="12" height="1" fill="#008080"/><rect x="239" y="55" width="1" height="1" fill="#000080"/><rect x="226" y="56" width="1" height="1" fill="#00FFFF"/><rect x="227" y="56" width="1" height="1" fill="#008080"/><rect x="228" y="56" width="6" height="1" fill="#FFFFFF"/><rect x="234" y="56" width="5" height="1" fill="#008080"/><rect x="239" y="56" width="1" height="1" fill="#000080"/><rect x="226" y="57" width="1" height="1" fill="#00FFFF"/><rect x="227" y="57" width="1" height="1" fill="#008080"/><rect x="228" y="57" width="6" height="1" fill="#FFFFFF"/><rect x="234" y="57" width="5" height="1" fill="#008080"/><rect x="239" y="57" width="1" height="1" fill="#000080"/><rect x="226" y="58" width="1" height="1" fill="#00FFFF"/><rect x="227" y="58" width="12" height="1" fill="#008080"/><rect x="239" y="58" width="1" height="1" fill="#000080"/><rect x="226" y="59" width="1" height="1" fill="#00FFFF"/><rect x="227" y="59" width="1" height="1" fill="#008080"/><rect x="228" y="59" width="1" height="1" fill="#FFFFFF"/><rect x="229" y="59" width="1" height="1" fill="#008080"/><rect x="230" y="59" width="1" height="1" fill="#FFFFFF"/><rect x="231" y="59" width="1" height="1" fill="#008080"/><rect x="232" y="59" width="1" height="1" fill="#FFFFFF"/><rect x="233" y="59" width="1" height="1" fill="#008080"/><rect x="234" y="59" width="1" height="1" fill="#FFFFFF"/><rect x="235" y="59" width="1" height="1" fill="#008080"/><rect x="236" y="59" width="1" height="1" fill="#FFFFFF"/><rect x="237" y="59" width="2" height="1" fill="#008080"/><rect x="239" y="59" width="1" height="1" fill="#000080"/><rect x="226" y="60" width="1" height="1" fill="#00FFFF"/><rect x="227" y="60" width="12" height="1" fill="#008080"/><rect x="239" y="60" width="1" height="1" fill="#000080"/><rect x="226" y="61" width="1" height="1" fill="#00FFFF"/><rect x="227" y="61" width="1" height="1" fill="#008080"/><rect x="228" y="61" width="1" height="1" fill="#FFFFFF"/><rect x="229" y="61" width="1" height="1" fill="#008080"/><rect x="230" y="61" width="1" height="1" fill="#FFFFFF"/><rect x="231" y="61" width="1" height="1" fill="#008080"/><rect x="232" y="61" width="1" height="1" fill="#FFFFFF"/><rect x="233" y="61" width="1" height="1" fill="#008080"/><rect x="234" y="61" width="1" height="1" fill="#FFFFFF"/><rect x="235" y="61" width="1" height="1" fill="#008080"/><rect x="236" y="61" width="1" height="1" fill="#FFFFFF"/><rect x="237" y="61" width="2" height="1" fill="#008080"/><rect x="239" y="61" width="1" height="1" fill="#000080"/><rect x="226" y="62" width="1" height="1" fill="#00FFFF"/><rect x="227" y="62" width="12" height="1" fill="#008080"/><rect x="239" y="62" width="1" height="1" fill="#000080"/><rect x="226" y="63" width="14" height="1" fill="#000080"/><rect x="226" y="64" width="14" height="1" fill="#000080"/><rect x="251" y="54" width="1" height="1" fill="#000000"/><rect x="259" y="54" width="4" height="1" fill="#000080"/><rect x="251" y="55" width="2" height="1" fill="#000000"/><rect x="258" y="55" width="2" height="1" fill="#000080"/><rect x="262" y="55" width="2" height="1" fill="#000080"/><rect x="251" y="56" width="3" height="1" fill="#000000"/><rect x="258" y="56" width="2" height="1" fill="#000080"/><rect x="262" y="56" width="2" height="1" fill="#000080"/><rect x="251" y="57" width="4" height="1" fill="#000000"/><rect x="262" y="57" width="2" height="1" fill="#000080"/><rect x="251" y="58" width="5" height="1" fill="#000000"/><rect x="261" y="58" width="2" height="1" fill="#000080"/><rect x="251" y="59" width="6" height="1" fill="#000000"/><rect x="260" y="59" width="2" height="1" fill="#000080"/><rect x="251" y="60" width="7" height="1" fill="#000000"/><rect x="260" y="60" width="2" height="1" fill="#000080"/><rect x="251" y="61" width="8" height="1" fill="#000000"/><rect x="251" y="62" width="5" height="1" fill="#000000"/><rect x="260" y="62" width="2" height="1" fill="#000080"/><rect x="251" y="63" width="2" height="1" fill="#000000"/><rect x="254" y="63" width="3" height="1" fill="#000000"/><rect x="260" y="63" width="2" height="1" fill="#000080"/><rect x="251" y="64" width="1" height="1" fill="#000000"/><rect x="254" y="64" width="3" height="1" fill="#000000"/><rect x="255" y="65" width="3" height="1" fill="#000000"/><rect x="255" y="66" width="3" height="1" fill="#000000"/><g shape-rendering="auto"><path d="M99.5 53.5v14l8.5 -7z" fill="#FFFF00" stroke="#000" stroke-width="1"/><path d="M121 55v14l7 -7z M128 55v14l7 -7z" fill="#FFFFFF"/><path d="M120 54v14l7 -7z M127 54v14l7 -7z" fill="#ACA899"/><circle cx="154" cy="62" r="7" fill="#FFFFFF"/><circle cx="153" cy="61" r="7" fill="#ACA899"/><path d="M150 58l6 6M156 58l-6 6" stroke="#FFFFFF" stroke-width="2"/></g><rect x="5" y="95" width="1" height="475" fill="#FFFFFF"/><rect x="397" y="95" width="1" height="476" fill="#716F64"/><rect x="396" y="95" width="1" height="475" fill="#ACA899"/><rect x="5" y="570" width="393" height="1" fill="#716F64"/><rect x="6" y="569" width="391" height="1" fill="#ACA899"/><rect x="6" y="76" width="67" height="1" fill="#FFFFFF"/><rect x="5" y="77" width="1" height="19" fill="#FFFFFF"/><rect x="73" y="77" width="1" height="18" fill="#ACA899"/><rect x="74" y="77" width="1" height="18" fill="#716F64"/><use href="#g9" x="13" y="81" fill="#FF0000"/><use href="#g10" x="25" y="81" fill="#FF0000"/><use href="#g14" x="37" y="81" fill="#FF0000"/><use href="#g15" x="49" y="81" fill="#FF0000"/><rect x="75" y="78" width="62" height="1" fill="#FFFFFF"/><rect x="137" y="79" width="1" height="16" fill="#ACA899"/><rect x="138" y="79" width="1" height="16" fill="#716F64"/><rect x="137" y="78" width="1" height="1" fill="#ACA899"/><use href="#g16" x="81" y="80" fill="#000"/><use href="#g17" x="93" y="80" fill="#000"/><use href="#g14" x="105" y="80" fill="#000"/><use href="#g15" x="117" y="80" fill="#000"/><rect x="139" y="79" width="1" height="16" fill="#FFFFFF"/><rect x="140" y="78" width="63" height="1" fill="#FFFFFF"/><rect x="203" y="79" width="1" height="16" fill="#ACA899"/><rect x="204" y="79" width="1" height="16" fill="#716F64"/><rect x="203" y="78" width="1" height="1" fill="#ACA899"/><use href="#g9" x="147" y="80" fill="#000"/><use href="#g10" x="159" y="80" fill="#000"/><use href="#g18" x="171" y="80" fill="#000"/><use href="#g19" x="183" y="80" fill="#000"/><rect x="7" y="111" width="388" height="1" fill="#FFFFFF"/><rect x="7" y="366" width="388" height="1" fill="#FFFFFF"/><rect x="7" y="111" width="1" height="256" fill="#FFFFFF"/><rect x="394" y="111" width="1" height="256" fill="#FFFFFF"/><rect x="6" y="110" width="388" height="1" fill="#ACA899"/><rect x="6" y="365" width="388" height="1" fill="#ACA899"/><rect x="6" y="110" width="1" height="256" fill="#ACA899"/><rect x="393" y="110" width="1" height="256" fill="#ACA899"/><rect x="13" y="110" width="75" height="2" fill="#ECE9D8"/><use href="#g9" x="14" y="104" fill="#000"/><use href="#g10" x="26" y="104" fill="#000"/><use href="#g14" x="38" y="104" fill="#000"/><use href="#g15" x="50" y="104" fill="#000"/><use href="#g20" x="62" y="104" fill="#000"/><use href="#g21" x="74" y="104" fill="#000"/><use href="#g22" x="14" y="130" fill="#000"/><use href="#g23" x="26" y="130" fill="#000"/><use href="#g24" x="38" y="130" fill="#000"/><use href="#g25" x="50" y="130" fill="#000"/><use href="#g26" x="62" y="130" fill="#000"/><rect x="80" y="127" width="95" height="20" fill="#FFFFFF"/><rect x="80" y="127" width="95" height="1" fill="#ACA899"/><rect x="80" y="127" width="1" height="20" fill="#ACA899"/><rect x="81" y="128" width="93" height="1" fill="#716F64"/><rect x="81" y="128" width="1" height="18" fill="#716F64"/><rect x="80" y="146" width="95" height="1" fill="#FFFFFF"/><rect x="174" y="127" width="1" height="20" fill="#FFFFFF"/><rect x="81" y="145" width="93" height="1" fill="#F1EFE2"/><rect x="173" y="128" width="1" height="18" fill="#F1EFE2"/><use href="#g27" x="84" y="132" fill="#000"/><use href="#g28" x="96" y="132" fill="#000"/><use href="#g29" x="108" y="132" fill="#000"/><use href="#g30" x="120" y="132" fill="#000"/><rect x="156" y="129" width="17" height="16" fill="#ECE9D8"/><rect x="156" y="129" width="17" height="1" fill="#F1EFE2"/><rect x="156" y="129" width="1" height="16" fill="#F1EFE2"/><rect x="157" y="130" width="15" height="1" fill="#FFFFFF"/><rect x="157" y="130" width="1" height="14" fill="#FFFFFF"/><rect x="156" y="144" width="17" height="1" fill="#716F64"/><rect x="172" y="129" width="1" height="16" fill="#716F64"/><rect x="157" y="143" width="15" height="1" fill="#ACA899"/><rect x="171" y="130" width="1" height="14" fill="#ACA899"/><rect x="160" y="135" width="7" height="1" fill="#000"/><rect x="161" y="136" width="5" height="1" fill="#000"/><rect x="162" y="137" width="3" height="1" fill="#000"/><rect x="163" y="138" width="1" height="1" fill="#000"/><use href="#g31" x="186" y="131" fill="#000"/><use href="#g32" x="192" y="131" fill="#000"/><use href="#g33" x="198" y="131" fill="#000"/><rect x="210" y="125" width="68" height="21" fill="#ECE9D8"/><rect x="210" y="125" width="68" height="1" fill="#ACA899"/><rect x="210" y="125" width="1" height="21" fill="#ACA899"/><rect x="211" y="126" width="66" height="1" fill="#716F64"/><rect x="211" y="126" width="1" height="19" fill="#716F64"/><rect x="210" y="145" width="68" height="1" fill="#FFFFFF"/><rect x="277" y="125" width="1" height="21" fill="#FFFFFF"/><rect x="211" y="144" width="66" height="1" fill="#F1EFE2"/><rect x="276" y="126" width="1" height="19" fill="#F1EFE2"/><use href="#g34" x="212" y="128" fill="#ACA899"/><use href="#g35" x="218" y="128" fill="#ACA899"/><use href="#g36" x="224" y="128" fill="#ACA899"/><use href="#g36" x="230" y="128" fill="#ACA899"/><use href="#g36" x="236" y="128" fill="#ACA899"/><use href="#g37" x="248" y="128" fill="#ACA899"/><use href="#g38" x="287" y="131" fill="#000"/><use href="#g39" x="293" y="131" fill="#000"/><use href="#g32" x="299" y="131" fill="#000"/><use href="#g33" x="305" y="131" fill="#000"/><rect x="314" y="125" width="68" height="21" fill="#ECE9D8"/><rect x="314" y="125" width="68" height="1" fill="#ACA899"/><rect x="314" y="125" width="1" height="21" fill="#ACA899"/><rect x="315" y="126" width="66" height="1" fill="#716F64"/><rect x="315" y="126" width="1" height="19" fill="#716F64"/><rect x="314" y="145" width="68" height="1" fill="#FFFFFF"/><rect x="381" y="125" width="1" height="21" fill="#FFFFFF"/><rect x="315" y="144" width="66" height="1" fill="#F1EFE2"/><rect x="380" y="126" width="1" height="19" fill="#F1EFE2"/><use href="#g40" x="316" y="128" fill="#ACA899"/><use href="#g36" x="322" y="128" fill="#ACA899"/><use href="#g35" x="328" y="128" fill="#ACA899"/><use href="#g36" x="334" y="128" fill="#ACA899"/><use href="#g36" x="340" y="128" fill="#ACA899"/><use href="#g41" x="352" y="128" fill="#ACA899"/><rect x="10" y="165" width="194" height="1" fill="#FFFFFF"/><rect x="10" y="194" width="194" height="1" fill="#FFFFFF"/><rect x="10" y="165" width="1" height="30" fill="#FFFFFF"/><rect x="203" y="165" width="1" height="30" fill="#FFFFFF"/><rect x="9" y="164" width="194" height="1" fill="#ACA899"/><rect x="9" y="193" width="194" height="1" fill="#ACA899"/><rect x="9" y="164" width="1" height="30" fill="#ACA899"/><rect x="202" y="164" width="1" height="30" fill="#ACA899"/><rect x="17" y="164" width="51" height="2" fill="#ECE9D8"/><use href="#g20" x="18" y="158" fill="#000"/><use href="#g21" x="30" y="158" fill="#000"/><use href="#g42" x="42" y="158" fill="#000"/><use href="#g43" x="54" y="158" fill="#000"/><rect x="35" y="176" width="1" height="1" fill="#ACA899"/><rect x="36" y="176" width="1" height="1" fill="#ACA899"/><rect x="37" y="176" width="1" height="1" fill="#ACA899"/><rect x="38" y="176" width="1" height="1" fill="#ACA899"/><rect x="33" y="177" width="1" height="1" fill="#ACA899"/><rect x="34" y="177" width="1" height="1" fill="#ACA899"/><rect x="35" y="177" width="1" height="1" fill="#716F64"/><rect x="36" y="177" width="1" height="1" fill="#716F64"/><rect x="37" y="177" width="1" height="1" fill="#716F64"/><rect x="38" y="177" width="1" height="1" fill="#716F64"/><rect x="39" y="177" width="1" height="1" fill="#ACA899"/><rect x="40" y="177" width="1" height="1" fill="#ACA899"/><rect x="32" y="178" width="1" height="1" fill="#ACA899"/><rect x="33" y="178" width="1" height="1" fill="#716F64"/><rect x="34" y="178" width="1" height="1" fill="#716F64"/><rect x="35" y="178" width="1" height="1" fill="#FFFFFF"/><rect x="36" y="178" width="1" height="1" fill="#FFFFFF"/><rect x="37" y="178" width="1" height="1" fill="#FFFFFF"/><rect x="38" y="178" width="1" height="1" fill="#FFFFFF"/><rect x="39" y="178" width="1" height="1" fill="#716F64"/><rect x="40" y="178" width="1" height="1" fill="#716F64"/><rect x="41" y="178" width="1" height="1" fill="#FFFFFF"/><rect x="32" y="179" width="1" height="1" fill="#ACA899"/><rect x="33" y="179" width="1" height="1" fill="#716F64"/><rect x="34" y="179" width="1" height="1" fill="#FFFFFF"/><rect x="35" y="179" width="1" height="1" fill="#FFFFFF"/><rect x="36" y="179" width="1" height="1" fill="#FFFFFF"/><rect x="37" y="179" width="1" height="1" fill="#FFFFFF"/><rect x="38" y="179" width="1" height="1" fill="#FFFFFF"/><rect x="39" y="179" width="1" height="1" fill="#FFFFFF"/><rect x="40" y="179" width="1" height="1" fill="#F1EFE2"/><rect x="41" y="179" width="1" height="1" fill="#FFFFFF"/><rect x="31" y="180" width="1" height="1" fill="#ACA899"/><rect x="32" y="180" width="1" height="1" fill="#716F64"/><rect x="33" y="180" width="1" height="1" fill="#FFFFFF"/><rect x="34" y="180" width="1" height="1" fill="#FFFFFF"/><rect x="35" y="180" width="1" height="1" fill="#FFFFFF"/><rect x="36" y="180" width="1" height="1" fill="#FFFFFF"/><rect x="37" y="180" width="1" height="1" fill="#FFFFFF"/><rect x="38" y="180" width="1" height="1" fill="#FFFFFF"/><rect x="39" y="180" width="1" height="1" fill="#FFFFFF"/><rect x="40" y="180" width="1" height="1" fill="#FFFFFF"/><rect x="41" y="180" width="1" height="1" fill="#F1EFE2"/><rect x="42" y="180" width="1" height="1" fill="#FFFFFF"/><rect x="31" y="181" width="1" height="1" fill="#ACA899"/><rect x="32" y="181" width="1" height="1" fill="#716F64"/><rect x="33" y="181" width="1" height="1" fill="#FFFFFF"/><rect x="34" y="181" width="1" height="1" fill="#FFFFFF"/><rect x="35" y="181" width="1" height="1" fill="#FFFFFF"/><rect x="36" y="181" width="1" height="1" fill="#FFFFFF"/><rect x="37" y="181" width="1" height="1" fill="#FFFFFF"/><rect x="38" y="181" width="1" height="1" fill="#FFFFFF"/><rect x="39" y="181" width="1" height="1" fill="#FFFFFF"/><rect x="40" y="181" width="1" height="1" fill="#FFFFFF"/><rect x="41" y="181" width="1" height="1" fill="#F1EFE2"/><rect x="42" y="181" width="1" height="1" fill="#FFFFFF"/><rect x="31" y="182" width="1" height="1" fill="#ACA899"/><rect x="32" y="182" width="1" height="1" fill="#716F64"/><rect x="33" y="182" width="1" height="1" fill="#FFFFFF"/><rect x="34" y="182" width="1" height="1" fill="#FFFFFF"/><rect x="35" y="182" width="1" height="1" fill="#FFFFFF"/><rect x="36" y="182" width="1" height="1" fill="#FFFFFF"/><rect x="37" y="182" width="1" height="1" fill="#FFFFFF"/><rect x="38" y="182" width="1" height="1" fill="#FFFFFF"/><rect x="39" y="182" width="1" height="1" fill="#FFFFFF"/><rect x="40" y="182" width="1" height="1" fill="#FFFFFF"/><rect x="41" y="182" width="1" height="1" fill="#F1EFE2"/><rect x="42" y="182" width="1" height="1" fill="#FFFFFF"/><rect x="31" y="183" width="1" height="1" fill="#ACA899"/><rect x="32" y="183" width="1" height="1" fill="#716F64"/><rect x="33" y="183" width="1" height="1" fill="#FFFFFF"/><rect x="34" y="183" width="1" height="1" fill="#FFFFFF"/><rect x="35" y="183" width="1" height="1" fill="#FFFFFF"/><rect x="36" y="183" width="1" height="1" fill="#FFFFFF"/><rect x="37" y="183" width="1" height="1" fill="#FFFFFF"/><rect x="38" y="183" width="1" height="1" fill="#FFFFFF"/><rect x="39" y="183" width="1" height="1" fill="#FFFFFF"/><rect x="40" y="183" width="1" height="1" fill="#FFFFFF"/><rect x="41" y="183" width="1" height="1" fill="#F1EFE2"/><rect x="42" y="183" width="1" height="1" fill="#FFFFFF"/><rect x="32" y="184" width="1" height="1" fill="#ACA899"/><rect x="33" y="184" width="1" height="1" fill="#716F64"/><rect x="34" y="184" width="1" height="1" fill="#FFFFFF"/><rect x="35" y="184" width="1" height="1" fill="#FFFFFF"/><rect x="36" y="184" width="1" height="1" fill="#FFFFFF"/><rect x="37" y="184" width="1" height="1" fill="#FFFFFF"/><rect x="38" y="184" width="1" height="1" fill="#FFFFFF"/><rect x="39" y="184" width="1" height="1" fill="#FFFFFF"/><rect x="40" y="184" width="1" height="1" fill="#F1EFE2"/><rect x="41" y="184" width="1" height="1" fill="#FFFFFF"/><rect x="32" y="185" width="1" height="1" fill="#FFFFFF"/><rect x="33" y="185" width="1" height="1" fill="#F1EFE2"/><rect x="34" y="185" width="1" height="1" fill="#F1EFE2"/><rect x="35" y="185" width="1" height="1" fill="#FFFFFF"/><rect x="36" y="185" width="1" height="1" fill="#FFFFFF"/><rect x="37" y="185" width="1" height="1" fill="#FFFFFF"/><rect x="38" y="185" width="1" height="1" fill="#FFFFFF"/><rect x="39" y="185" width="1" height="1" fill="#F1EFE2"/><rect x="40" y="185" width="1" height="1" fill="#F1EFE2"/><rect x="41" y="185" width="1" height="1" fill="#FFFFFF"/><rect x="33" y="186" width="1" height="1" fill="#FFFFFF"/><rect x="34" y="186" width="1" height="1" fill="#FFFFFF"/><rect x="35" y="186" width="1" height="1" fill="#F1EFE2"/><rect x="36" y="186" width="1" height="1" fill="#F1EFE2"/><rect x="37" y="186" width="1" height="1" fill="#F1EFE2"/><rect x="38" y="186" width="1" height="1" fill="#F1EFE2"/><rect x="39" y="186" width="1" height="1" fill="#FFFFFF"/><rect x="40" y="186" width="1" height="1" fill="#FFFFFF"/><rect x="35" y="187" width="1" height="1" fill="#FFFFFF"/><rect x="36" y="187" width="1" height="1" fill="#FFFFFF"/><rect x="37" y="187" width="1" height="1" fill="#FFFFFF"/><rect x="38" y="187" width="1" height="1" fill="#FFFFFF"/><rect x="36" y="180" width="2" height="1" fill="#000"/><rect x="35" y="181" width="4" height="2" fill="#000"/><rect x="36" y="183" width="2" height="1" fill="#000"/><use href="#g31" x="48" y="176" fill="#000"/><use href="#g44" x="54" y="176" fill="#000"/><use href="#g45" x="60" y="176" fill="#000"/><rect x="137" y="176" width="1" height="1" fill="#ACA899"/><rect x="138" y="176" width="1" height="1" fill="#ACA899"/><rect x="139" y="176" width="1" height="1" fill="#ACA899"/><rect x="140" y="176" width="1" height="1" fill="#ACA899"/><rect x="135" y="177" width="1" height="1" fill="#ACA899"/><rect x="136" y="177" width="1" height="1" fill="#ACA899"/><rect x="137" y="177" width="1" height="1" fill="#716F64"/><rect x="138" y="177" width="1" height="1" fill="#716F64"/><rect x="139" y="177" width="1" height="1" fill="#716F64"/><rect x="140" y="177" width="1" height="1" fill="#716F64"/><rect x="141" y="177" width="1" height="1" fill="#ACA899"/><rect x="142" y="177" width="1" height="1" fill="#ACA899"/><rect x="134" y="178" width="1" height="1" fill="#ACA899"/><rect x="135" y="178" width="1" height="1" fill="#716F64"/><rect x="136" y="178" width="1" height="1" fill="#716F64"/><rect x="137" y="178" width="1" height="1" fill="#FFFFFF"/><rect x="138" y="178" width="1" height="1" fill="#FFFFFF"/><rect x="139" y="178" width="1" height="1" fill="#FFFFFF"/><rect x="140" y="178" width="1" height="1" fill="#FFFFFF"/><rect x="141" y="178" width="1" height="1" fill="#716F64"/><rect x="142" y="178" width="1" height="1" fill="#716F64"/><rect x="143" y="178" width="1" height="1" fill="#FFFFFF"/><rect x="134" y="179" width="1" height="1" fill="#ACA899"/><rect x="135" y="179" width="1" height="1" fill="#716F64"/><rect x="136" y="179" width="1" height="1" fill="#FFFFFF"/><rect x="137" y="179" width="1" height="1" fill="#FFFFFF"/><rect x="138" y="179" width="1" height="1" fill="#FFFFFF"/><rect x="139" y="179" width="1" height="1" fill="#FFFFFF"/><rect x="140" y="179" width="1" height="1" fill="#FFFFFF"/><rect x="141" y="179" width="1" height="1" fill="#FFFFFF"/><rect x="142" y="179" width="1" height="1" fill="#F1EFE2"/><rect x="143" y="179" width="1" height="1" fill="#FFFFFF"/><rect x="133" y="180" width="1" height="1" fill="#ACA899"/><rect x="134" y="180" width="1" height="1" fill="#716F64"/><rect x="135" y="180" width="1" height="1" fill="#FFFFFF"/><rect x="136" y="180" width="1" height="1" fill="#FFFFFF"/><rect x="137" y="180" width="1" height="1" fill="#FFFFFF"/><rect x="138" y="180" width="1" height="1" fill="#FFFFFF"/><rect x="139" y="180" width="1" height="1" fill="#FFFFFF"/><rect x="140" y="180" width="1" height="1" fill="#FFFFFF"/><rect x="141" y="180" width="1" height="1" fill="#FFFFFF"/><rect x="142" y="180" width="1" height="1" fill="#FFFFFF"/><rect x="143" y="180" width="1" height="1" fill="#F1EFE2"/><rect x="144" y="180" width="1" height="1" fill="#FFFFFF"/><rect x="133" y="181" width="1" height="1" fill="#ACA899"/><rect x="134" y="181" width="1" height="1" fill="#716F64"/><rect x="135" y="181" width="1" height="1" fill="#FFFFFF"/><rect x="136" y="181" width="1" height="1" fill="#FFFFFF"/><rect x="137" y="181" width="1" height="1" fill="#FFFFFF"/><rect x="138" y="181" width="1" height="1" fill="#FFFFFF"/><rect x="139" y="181" width="1" height="1" fill="#FFFFFF"/><rect x="140" y="181" width="1" height="1" fill="#FFFFFF"/><rect x="141" y="181" width="1" height="1" fill="#FFFFFF"/><rect x="142" y="181" width="1" height="1" fill="#FFFFFF"/><rect x="143" y="181" width="1" height="1" fill="#F1EFE2"/><rect x="144" y="181" width="1" height="1" fill="#FFFFFF"/><rect x="133" y="182" width="1" height="1" fill="#ACA899"/><rect x="134" y="182" width="1" height="1" fill="#716F64"/><rect x="135" y="182" width="1" height="1" fill="#FFFFFF"/><rect x="136" y="182" width="1" height="1" fill="#FFFFFF"/><rect x="137" y="182" width="1" height="1" fill="#FFFFFF"/><rect x="138" y="182" width="1" height="1" fill="#FFFFFF"/><rect x="139" y="182" width="1" height="1" fill="#FFFFFF"/><rect x="140" y="182" width="1" height="1" fill="#FFFFFF"/><rect x="141" y="182" width="1" height="1" fill="#FFFFFF"/><rect x="142" y="182" width="1" height="1" fill="#FFFFFF"/><rect x="143" y="182" width="1" height="1" fill="#F1EFE2"/><rect x="144" y="182" width="1" height="1" fill="#FFFFFF"/><rect x="133" y="183" width="1" height="1" fill="#ACA899"/><rect x="134" y="183" width="1" height="1" fill="#716F64"/><rect x="135" y="183" width="1" height="1" fill="#FFFFFF"/><rect x="136" y="183" width="1" height="1" fill="#FFFFFF"/><rect x="137" y="183" width="1" height="1" fill="#FFFFFF"/><rect x="138" y="183" width="1" height="1" fill="#FFFFFF"/><rect x="139" y="183" width="1" height="1" fill="#FFFFFF"/><rect x="140" y="183" width="1" height="1" fill="#FFFFFF"/><rect x="141" y="183" width="1" height="1" fill="#FFFFFF"/><rect x="142" y="183" width="1" height="1" fill="#FFFFFF"/><rect x="143" y="183" width="1" height="1" fill="#F1EFE2"/><rect x="144" y="183" width="1" height="1" fill="#FFFFFF"/><rect x="134" y="184" width="1" height="1" fill="#ACA899"/><rect x="135" y="184" width="1" height="1" fill="#716F64"/><rect x="136" y="184" width="1" height="1" fill="#FFFFFF"/><rect x="137" y="184" width="1" height="1" fill="#FFFFFF"/><rect x="138" y="184" width="1" height="1" fill="#FFFFFF"/><rect x="139" y="184" width="1" height="1" fill="#FFFFFF"/><rect x="140" y="184" width="1" height="1" fill="#FFFFFF"/><rect x="141" y="184" width="1" height="1" fill="#FFFFFF"/><rect x="142" y="184" width="1" height="1" fill="#F1EFE2"/><rect x="143" y="184" width="1" height="1" fill="#FFFFFF"/><rect x="134" y="185" width="1" height="1" fill="#FFFFFF"/><rect x="135" y="185" width="1" height="1" fill="#F1EFE2"/><rect x="136" y="185" width="1" height="1" fill="#F1EFE2"/><rect x="137" y="185" width="1" height="1" fill="#FFFFFF"/><rect x="138" y="185" width="1" height="1" fill="#FFFFFF"/><rect x="139" y="185" width="1" height="1" fill="#FFFFFF"/><rect x="140" y="185" width="1" height="1" fill="#FFFFFF"/><rect x="141" y="185" width="1" height="1" fill="#F1EFE2"/><rect x="142" y="185" width="1" height="1" fill="#F1EFE2"/><rect x="143" y="185" width="1" height="1" fill="#FFFFFF"/><rect x="135" y="186" width="1" height="1" fill="#FFFFFF"/><rect x="136" y="186" width="1" height="1" fill="#FFFFFF"/><rect x="137" y="186" width="1" height="1" fill="#F1EFE2"/><rect x="138" y="186" width="1" height="1" fill="#F1EFE2"/><rect x="139" y="186" width="1" height="1" fill="#F1EFE2"/><rect x="140" y="186" width="1" height="1" fill="#F1EFE2"/><rect x="141" y="186" width="1" height="1" fill="#FFFFFF"/><rect x="142" y="186" width="1" height="1" fill="#FFFFFF"/><rect x="137" y="187" width="1" height="1" fill="#FFFFFF"/><rect x="138" y="187" width="1" height="1" fill="#FFFFFF"/><rect x="139" y="187" width="1" height="1" fill="#FFFFFF"/><rect x="140" y="187" width="1" height="1" fill="#FFFFFF"/><use href="#g46" x="150" y="176" fill="#000"/><use href="#g44" x="156" y="176" fill="#000"/><use href="#g47" x="162" y="176" fill="#000"/><rect x="10" y="206" width="194" height="1" fill="#FFFFFF"/><rect x="10" y="361" width="194" height="1" fill="#FFFFFF"/><rect x="10" y="206" width="1" height="156" fill="#FFFFFF"/><rect x="203" y="206" width="1" height="156" fill="#FFFFFF"/><rect x="9" y="205" width="194" height="1" fill="#ACA899"/><rect x="9" y="360" width="194" height="1" fill="#ACA899"/><rect x="9" y="205" width="1" height="156" fill="#ACA899"/><rect x="202" y="205" width="1" height="156" fill="#ACA899"/><rect x="17" y="205" width="63" height="2" fill="#ECE9D8"/><use href="#g48" x="18" y="199" fill="#000"/><use href="#g49" x="30" y="199" fill="#000"/><use href="#g50" x="42" y="199" fill="#000"/><use href="#g14" x="54" y="199" fill="#000"/><use href="#g15" x="66" y="199" fill="#000"/><rect x="12" y="215" width="186" height="143" fill="#FFFFFF"/><rect x="14" y="234" width="182" height="1" fill="#EBE4D4"/><rect x="14" y="235" width="96" height="16" fill="#CCFFCC"/><rect x="111" y="235" width="85" height="16" fill="#FFFFCC"/><rect x="14" y="251" width="182" height="1" fill="#EBE4D4"/><use href="#g48" x="38" y="237" fill="#000"/><use href="#g49" x="50" y="237" fill="#000"/><use href="#g51" x="62" y="237" fill="#000"/><use href="#g25" x="74" y="237" fill="#000"/><use href="#g52" x="128" y="237" fill="#000"/><use href="#g53" x="134" y="237" fill="#000"/><use href="#g54" x="140" y="237" fill="#000"/><use href="#g55" x="152" y="237" fill="#000"/><use href="#g56" x="164" y="237" fill="#000"/><rect x="14" y="252" width="96" height="16" fill="#CCFFCC"/><rect x="111" y="252" width="85" height="16" fill="#FFFFFF"/><rect x="14" y="268" width="182" height="1" fill="#EBE4D4"/><use href="#g31" x="59" y="254" fill="#000"/><use href="#g57" x="128" y="254" fill="#000"/><use href="#g35" x="134" y="254" fill="#000"/><use href="#g36" x="140" y="254" fill="#000"/><use href="#g36" x="146" y="254" fill="#000"/><use href="#g36" x="152" y="254" fill="#000"/><use href="#g37" x="164" y="254" fill="#000"/><rect x="14" y="269" width="96" height="16" fill="#CCFFCC"/><rect x="111" y="269" width="85" height="16" fill="#FFFFFF"/><rect x="14" y="285" width="182" height="1" fill="#EBE4D4"/><use href="#g45" x="56" y="271" fill="#000"/><use href="#g58" x="128" y="271" fill="#000"/><use href="#g40" x="134" y="271" fill="#000"/><use href="#g35" x="140" y="271" fill="#000"/><use href="#g36" x="146" y="271" fill="#000"/><use href="#g36" x="152" y="271" fill="#000"/><use href="#g41" x="164" y="271" fill="#000"/><rect x="14" y="286" width="96" height="16" fill="#CCFFCC"/><rect x="111" y="286" width="85" height="16" fill="#FFFFFF"/><rect x="14" y="302" width="182" height="1" fill="#EBE4D4"/><use href="#g59" x="59" y="288" fill="#000"/><use href="#g36" x="128" y="288" fill="#000"/><use href="#g35" x="134" y="288" fill="#000"/><use href="#g58" x="140" y="288" fill="#000"/><use href="#g60" x="146" y="288" fill="#000"/><use href="#g61" x="152" y="288" fill="#000"/><use href="#g37" x="164" y="288" fill="#000"/><rect x="14" y="303" width="96" height="16" fill="#CCFFCC"/><rect x="111" y="303" width="85" height="16" fill="#FFFFFF"/><rect x="14" y="319" width="182" height="1" fill="#EBE4D4"/><use href="#g62" x="59" y="305" fill="#000"/><use href="#g61" x="128" y="305" fill="#000"/><use href="#g35" x="134" y="305" fill="#000"/><use href="#g40" x="140" y="305" fill="#000"/><use href="#g63" x="146" y="305" fill="#000"/><use href="#g58" x="152" y="305" fill="#000"/><use href="#g37" x="164" y="305" fill="#000"/><rect x="14" y="320" width="96" height="16" fill="#CCFFCC"/><rect x="111" y="320" width="85" height="16" fill="#FFFFFF"/><rect x="14" y="336" width="182" height="1" fill="#EBE4D4"/><use href="#g55" x="26" y="322" fill="#000"/><use href="#g56" x="38" y="322" fill="#000"/><use href="#g64" x="50" y="322" fill="#000"/><use href="#g65" x="62" y="322" fill="#000"/><use href="#g66" x="74" y="322" fill="#000"/><use href="#g15" x="86" y="322" fill="#000"/><use href="#g36" x="137" y="322" fill="#000"/><use href="#g35" x="143" y="322" fill="#000"/><use href="#g40" x="149" y="322" fill="#000"/><use href="#g67" x="155" y="322" fill="#000"/><use href="#g36" x="161" y="322" fill="#000"/><rect x="14" y="337" width="96" height="16" fill="#CCFFCC"/><rect x="111" y="337" width="85" height="16" fill="#FFFFFF"/><rect x="14" y="353" width="182" height="1" fill="#EBE4D4"/><use href="#g48" x="38" y="339" fill="#000"/><use href="#g49" x="50" y="339" fill="#000"/><use href="#g27" x="62" y="339" fill="#000"/><use href="#g28" x="74" y="339" fill="#000"/><use href="#g67" x="131" y="339" fill="#000"/><use href="#g35" x="137" y="339" fill="#000"/><use href="#g36" x="143" y="339" fill="#000"/><use href="#g36" x="149" y="339" fill="#000"/><use href="#g36" x="155" y="339" fill="#000"/><use href="#g52" x="167" y="339" fill="#000"/><rect x="110" y="234" width="1" height="122" fill="#EBE4D4"/><rect x="14" y="217" width="96" height="16" fill="#ECE9D8"/><rect x="14" y="217" width="96" height="1" fill="#FFFFFF"/><rect x="14" y="217" width="1" height="16" fill="#FFFFFF"/><rect x="14" y="232" width="96" height="1" fill="#716F64"/><rect x="109" y="217" width="1" height="16" fill="#716F64"/><rect x="15" y="231" width="94" height="1" fill="#ACA899"/><rect x="108" y="218" width="1" height="14" fill="#ACA899"/><rect x="110" y="217" width="86" height="16" fill="#ECE9D8"/><rect x="110" y="217" width="86" height="1" fill="#FFFFFF"/><rect x="110" y="217" width="1" height="16" fill="#FFFFFF"/><rect x="110" y="232" width="86" height="1" fill="#716F64"/><rect x="195" y="217" width="1" height="16" fill="#716F64"/><rect x="111" y="231" width="84" height="1" fill="#ACA899"/><rect x="194" y="218" width="1" height="14" fill="#ACA899"/><rect x="14" y="233" width="182" height="1" fill="#FFFFFF"/><use href="#g15" x="44" y="219" fill="#000"/><use href="#g68" x="56" y="219" fill="#000"/><use href="#g69" x="68" y="219" fill="#000"/><use href="#g70" x="146" y="219" fill="#000"/><rect x="12" y="215" width="186" height="1" fill="#ACA899"/><rect x="12" y="215" width="1" height="143" fill="#ACA899"/><rect x="13" y="216" width="184" height="1" fill="#716F64"/><rect x="13" y="216" width="1" height="141" fill="#716F64"/><rect x="12" y="357" width="186" height="1" fill="#FFFFFF"/><rect x="197" y="215" width="1" height="143" fill="#FFFFFF"/><rect x="13" y="356" width="184" height="1" fill="#F1EFE2"/><rect x="196" y="216" width="1" height="141" fill="#F1EFE2"/><path d="M15 337h1v1h-1z M17 337h1v1h-1z M19 337h1v1h-1z M21 337h1v1h-1z M23 337h1v1h-1z M25 337h1v1h-1z M27 337h1v1h-1z M29 337h1v1h-1z M31 337h1v1h-1z M33 337h1v1h-1z M35 337h1v1h-1z M37 337h1v1h-1z M39 337h1v1h-1z M41 337h1v1h-1z M43 337h1v1h-1z M45 337h1v1h-1z M47 337h1v1h-1z M49 337h1v1h-1z M51 337h1v1h-1z M53 337h1v1h-1z M55 337h1v1h-1z M57 337h1v1h-1z M59 337h1v1h-1z M61 337h1v1h-1z M63 337h1v1h-1z M65 337h1v1h-1z M67 337h1v1h-1z M69 337h1v1h-1z M71 337h1v1h-1z M73 337h1v1h-1z M75 337h1v1h-1z M77 337h1v1h-1z M79 337h1v1h-1z M81 337h1v1h-1z M83 337h1v1h-1z M85 337h1v1h-1z M87 337h1v1h-1z M89 337h1v1h-1z M91 337h1v1h-1z M93 337h1v1h-1z M95 337h1v1h-1z M97 337h1v1h-1z M99 337h1v1h-1z M101 337h1v1h-1z M103 337h1v1h-1z M105 337h1v1h-1z M107 337h1v1h-1z M109 337h1v1h-1z M14 337h1v1h-1z M14 339h1v1h-1z M14 341h1v1h-1z M14 343h1v1h-1z M14 345h1v1h-1z M14 347h1v1h-1z M14 349h1v1h-1z M14 351h1v1h-1z " fill="#3A0A3A"/><path d="M111 337h1v1h-1z M113 337h1v1h-1z M115 337h1v1h-1z M117 337h1v1h-1z M119 337h1v1h-1z M121 337h1v1h-1z M123 337h1v1h-1z M125 337h1v1h-1z M127 337h1v1h-1z M129 337h1v1h-1z M131 337h1v1h-1z M133 337h1v1h-1z M135 337h1v1h-1z M137 337h1v1h-1z M139 337h1v1h-1z M141 337h1v1h-1z M143 337h1v1h-1z M145 337h1v1h-1z M147 337h1v1h-1z M149 337h1v1h-1z M151 337h1v1h-1z M153 337h1v1h-1z M155 337h1v1h-1z M157 337h1v1h-1z M159 337h1v1h-1z M161 337h1v1h-1z M163 337h1v1h-1z M165 337h1v1h-1z M167 337h1v1h-1z M169 337h1v1h-1z M171 337h1v1h-1z M173 337h1v1h-1z M175 337h1v1h-1z M177 337h1v1h-1z M179 337h1v1h-1z M181 337h1v1h-1z M183 337h1v1h-1z M185 337h1v1h-1z M187 337h1v1h-1z M189 337h1v1h-1z M191 337h1v1h-1z M193 337h1v1h-1z M195 337h1v1h-1z M195 337h1v1h-1z M195 339h1v1h-1z M195 341h1v1h-1z M195 343h1v1h-1z M195 345h1v1h-1z M195 347h1v1h-1z M195 349h1v1h-1z M195 351h1v1h-1z " fill="#000"/><rect x="207" y="168" width="188" height="1" fill="#FFFFFF"/><rect x="207" y="361" width="188" height="1" fill="#FFFFFF"/><rect x="207" y="168" width="1" height="194" fill="#FFFFFF"/><rect x="394" y="168" width="1" height="194" fill="#FFFFFF"/><rect x="206" y="167" width="188" height="1" fill="#ACA899"/><rect x="206" y="360" width="188" height="1" fill="#ACA899"/><rect x="206" y="167" width="1" height="194" fill="#ACA899"/><rect x="393" y="167" width="1" height="194" fill="#ACA899"/><rect x="210" y="167" width="84" height="2" fill="#ECE9D8"/><rect x="210" y="161" width="13" height="13" fill="#FFFFFF"/><rect x="210" y="161" width="13" height="1" fill="#ACA899"/><rect x="210" y="161" width="1" height="13" fill="#ACA899"/><rect x="211" y="162" width="11" height="1" fill="#716F64"/><rect x="211" y="162" width="1" height="11" fill="#716F64"/><rect x="210" y="173" width="13" height="1" fill="#FFFFFF"/><rect x="222" y="161" width="1" height="13" fill="#FFFFFF"/><rect x="211" y="172" width="11" height="1" fill="#F1EFE2"/><rect x="221" y="162" width="1" height="11" fill="#F1EFE2"/><use href="#g71" x="228" y="161" fill="#000"/><use href="#g72" x="240" y="161" fill="#000"/><use href="#g73" x="252" y="161" fill="#000"/><use href="#g48" x="264" y="161" fill="#000"/><use href="#g49" x="276" y="161" fill="#000"/><rect x="209" y="179" width="180" height="175" fill="#FFFFFF"/><rect x="211" y="198" width="176" height="1" fill="#EDEBDC"/><rect x="211" y="199" width="90" height="16" fill="#CCC9B8"/><rect x="302" y="199" width="85" height="16" fill="#CCC9B8"/><rect x="211" y="215" width="176" height="1" fill="#EDEBDC"/><use href="#g48" x="232" y="201" fill="#ACA899"/><use href="#g49" x="244" y="201" fill="#ACA899"/><use href="#g51" x="256" y="201" fill="#ACA899"/><use href="#g25" x="268" y="201" fill="#ACA899"/><use href="#g52" x="322" y="201" fill="#ACA899"/><use href="#g54" x="328" y="201" fill="#ACA899"/><use href="#g74" x="340" y="201" fill="#ACA899"/><use href="#g75" x="352" y="201" fill="#ACA899"/><rect x="211" y="216" width="90" height="16" fill="#CCC9B8"/><rect x="302" y="216" width="85" height="16" fill="#CCC9B8"/><rect x="211" y="232" width="176" height="1" fill="#EDEBDC"/><use href="#g76" x="232" y="218" fill="#ACA899"/><use href="#g23" x="244" y="218" fill="#ACA899"/><use href="#g42" x="256" y="218" fill="#ACA899"/><use href="#g43" x="268" y="218" fill="#ACA899"/><use href="#g77" x="319" y="218" fill="#ACA899"/><use href="#g78" x="331" y="218" fill="#ACA899"/><use href="#g79" x="343" y="218" fill="#ACA899"/><use href="#g80" x="355" y="218" fill="#ACA899"/><rect x="211" y="233" width="90" height="16" fill="#CCC9B8"/><rect x="302" y="233" width="85" height="16" fill="#CCC9B8"/><rect x="211" y="249" width="176" height="1" fill="#EDEBDC"/><use href="#g71" x="232" y="235" fill="#ACA899"/><use href="#g72" x="244" y="235" fill="#ACA899"/><use href="#g81" x="256" y="235" fill="#ACA899"/><use href="#g82" x="268" y="235" fill="#ACA899"/><use href="#g36" x="322" y="235" fill="#ACA899"/><use href="#g35" x="328" y="235" fill="#ACA899"/><use href="#g34" x="334" y="235" fill="#ACA899"/><use href="#g36" x="340" y="235" fill="#ACA899"/><use href="#g36" x="346" y="235" fill="#ACA899"/><use href="#g32" x="358" y="235" fill="#ACA899"/><rect x="211" y="250" width="90" height="16" fill="#CCC9B8"/><rect x="302" y="250" width="85" height="16" fill="#CCC9B8"/><rect x="211" y="266" width="176" height="1" fill="#EDEBDC"/><use href="#g31" x="253" y="252" fill="#ACA899"/><use href="#g34" x="316" y="252" fill="#ACA899"/><use href="#g36" x="322" y="252" fill="#ACA899"/><use href="#g35" x="328" y="252" fill="#ACA899"/><use href="#g36" x="334" y="252" fill="#ACA899"/><use href="#g36" x="340" y="252" fill="#ACA899"/><use href="#g36" x="346" y="252" fill="#ACA899"/><use href="#g37" x="358" y="252" fill="#ACA899"/><rect x="211" y="267" width="90" height="16" fill="#CCC9B8"/><rect x="302" y="267" width="85" height="16" fill="#CCC9B8"/><rect x="211" y="283" width="176" height="1" fill="#EDEBDC"/><use href="#g45" x="250" y="269" fill="#ACA899"/><use href="#g58" x="319" y="269" fill="#ACA899"/><use href="#g36" x="325" y="269" fill="#ACA899"/><use href="#g35" x="331" y="269" fill="#ACA899"/><use href="#g36" x="337" y="269" fill="#ACA899"/><use href="#g36" x="343" y="269" fill="#ACA899"/><use href="#g41" x="355" y="269" fill="#ACA899"/><rect x="211" y="284" width="90" height="16" fill="#CCC9B8"/><rect x="302" y="284" width="85" height="16" fill="#CCC9B8"/><rect x="211" y="300" width="176" height="1" fill="#EDEBDC"/><use href="#g59" x="253" y="286" fill="#ACA899"/><use href="#g61" x="319" y="286" fill="#ACA899"/><use href="#g35" x="325" y="286" fill="#ACA899"/><use href="#g57" x="331" y="286" fill="#ACA899"/><use href="#g63" x="337" y="286" fill="#ACA899"/><use href="#g36" x="343" y="286" fill="#ACA899"/><use href="#g37" x="355" y="286" fill="#ACA899"/><rect x="211" y="301" width="90" height="16" fill="#CCC9B8"/><rect x="302" y="301" width="85" height="16" fill="#CCC9B8"/><rect x="211" y="317" width="176" height="1" fill="#EDEBDC"/><use href="#g62" x="253" y="303" fill="#ACA899"/><use href="#g40" x="319" y="303" fill="#ACA899"/><use href="#g35" x="325" y="303" fill="#ACA899"/><use href="#g61" x="331" y="303" fill="#ACA899"/><use href="#g40" x="337" y="303" fill="#ACA899"/><use href="#g58" x="343" y="303" fill="#ACA899"/><use href="#g37" x="355" y="303" fill="#ACA899"/><rect x="211" y="318" width="90" height="16" fill="#CCC9B8"/><rect x="302" y="318" width="85" height="16" fill="#CCC9B8"/><rect x="211" y="334" width="176" height="1" fill="#EDEBDC"/><use href="#g55" x="220" y="320" fill="#ACA899"/><use href="#g56" x="232" y="320" fill="#ACA899"/><use href="#g64" x="244" y="320" fill="#ACA899"/><use href="#g65" x="256" y="320" fill="#ACA899"/><use href="#g66" x="268" y="320" fill="#ACA899"/><use href="#g15" x="280" y="320" fill="#ACA899"/><use href="#g36" x="328" y="320" fill="#ACA899"/><use href="#g35" x="334" y="320" fill="#ACA899"/><use href="#g40" x="340" y="320" fill="#ACA899"/><use href="#g67" x="346" y="320" fill="#ACA899"/><use href="#g36" x="352" y="320" fill="#ACA899"/><rect x="211" y="335" width="90" height="16" fill="#CCC9B8"/><rect x="302" y="335" width="85" height="16" fill="#CCC9B8"/><rect x="211" y="351" width="176" height="1" fill="#EDEBDC"/><use href="#g48" x="232" y="337" fill="#ACA899"/><use href="#g49" x="244" y="337" fill="#ACA899"/><use href="#g27" x="256" y="337" fill="#ACA899"/><use href="#g28" x="268" y="337" fill="#ACA899"/><use href="#g34" x="319" y="337" fill="#ACA899"/><use href="#g36" x="325" y="337" fill="#ACA899"/><use href="#g35" x="331" y="337" fill="#ACA899"/><use href="#g36" x="337" y="337" fill="#ACA899"/><use href="#g36" x="343" y="337" fill="#ACA899"/><use href="#g36" x="349" y="337" fill="#ACA899"/><use href="#g52" x="361" y="337" fill="#ACA899"/><rect x="301" y="198" width="1" height="154" fill="#EDEBDC"/><rect x="211" y="181" width="90" height="16" fill="#ECE9D8"/><rect x="211" y="181" width="90" height="1" fill="#FFFFFF"/><rect x="211" y="181" width="1" height="16" fill="#FFFFFF"/><rect x="211" y="196" width="90" height="1" fill="#716F64"/><rect x="300" y="181" width="1" height="16" fill="#716F64"/><rect x="212" y="195" width="88" height="1" fill="#ACA899"/><rect x="299" y="182" width="1" height="14" fill="#ACA899"/><rect x="301" y="181" width="86" height="16" fill="#ECE9D8"/><rect x="301" y="181" width="86" height="1" fill="#FFFFFF"/><rect x="301" y="181" width="1" height="16" fill="#FFFFFF"/><rect x="301" y="196" width="86" height="1" fill="#716F64"/><rect x="386" y="181" width="1" height="16" fill="#716F64"/><rect x="302" y="195" width="84" height="1" fill="#ACA899"/><rect x="385" y="182" width="1" height="14" fill="#ACA899"/><rect x="211" y="197" width="176" height="1" fill="#FFFFFF"/><use href="#g15" x="238" y="183" fill="#000"/><use href="#g68" x="250" y="183" fill="#000"/><use href="#g69" x="262" y="183" fill="#000"/><use href="#g70" x="337" y="183" fill="#000"/><rect x="209" y="179" width="180" height="1" fill="#ACA899"/><rect x="209" y="179" width="1" height="175" fill="#ACA899"/><rect x="210" y="180" width="178" height="1" fill="#716F64"/><rect x="210" y="180" width="1" height="173" fill="#716F64"/><rect x="209" y="353" width="180" height="1" fill="#FFFFFF"/><rect x="388" y="179" width="1" height="175" fill="#FFFFFF"/><rect x="210" y="352" width="178" height="1" fill="#F1EFE2"/><rect x="387" y="180" width="1" height="173" fill="#F1EFE2"/><rect x="8" y="386" width="196" height="1" fill="#FFFFFF"/><rect x="8" y="534" width="196" height="1" fill="#FFFFFF"/><rect x="8" y="386" width="1" height="149" fill="#FFFFFF"/><rect x="203" y="386" width="1" height="149" fill="#FFFFFF"/><rect x="7" y="385" width="196" height="1" fill="#ACA899"/><rect x="7" y="533" width="196" height="1" fill="#ACA899"/><rect x="7" y="385" width="1" height="149" fill="#ACA899"/><rect x="202" y="385" width="1" height="149" fill="#ACA899"/><rect x="15" y="385" width="147" height="2" fill="#ECE9D8"/><use href="#g46" x="16" y="379" fill="#000"/><use href="#g83" x="22" y="379" fill="#000"/><use href="#g42" x="28" y="379" fill="#000"/><use href="#g43" x="40" y="379" fill="#000"/><use href="#g84" x="52" y="379" fill="#000"/><use href="#g85" x="64" y="379" fill="#000"/><use href="#g86" x="76" y="379" fill="#000"/><use href="#g87" x="88" y="379" fill="#000"/><use href="#g88" x="100" y="379" fill="#000"/><use href="#g16" x="112" y="379" fill="#000"/><use href="#g15" x="124" y="379" fill="#000"/><use href="#g20" x="136" y="379" fill="#000"/><use href="#g21" x="148" y="379" fill="#000"/><rect x="12" y="398" width="186" height="126" fill="#FFFFFF"/><rect x="14" y="417" width="182" height="1" fill="#EBE4D4"/><rect x="14" y="418" width="90" height="16" fill="#CCFFCC"/><rect x="105" y="418" width="89" height="16" fill="#FFFFCC"/><rect x="14" y="434" width="182" height="1" fill="#EBE4D4"/><use href="#g46" x="50" y="420" fill="#000"/><use href="#g83" x="56" y="420" fill="#000"/><use href="#g89" x="62" y="420" fill="#000"/><use href="#g90" x="136" y="420" fill="#000"/><use href="#g61" x="142" y="420" fill="#000"/><use href="#g46" x="148" y="420" fill="#000"/><use href="#g91" x="154" y="420" fill="#000"/><rect x="14" y="435" width="90" height="16" fill="#CCFFCC"/><rect x="105" y="435" width="89" height="16" fill="#F0FFF0"/><rect x="14" y="451" width="182" height="1" fill="#EBE4D4"/><use href="#g92" x="47" y="437" fill="#000"/><use href="#g70" x="59" y="437" fill="#000"/><use href="#g36" x="127" y="437" fill="#000"/><use href="#g35" x="133" y="437" fill="#000"/><use href="#g36" x="139" y="437" fill="#000"/><use href="#g36" x="145" y="437" fill="#000"/><use href="#g36" x="151" y="437" fill="#000"/><use href="#g93" x="163" y="437" fill="#000"/><rect x="14" y="452" width="90" height="16" fill="#CCFFCC"/><rect x="105" y="452" width="89" height="16" fill="#F0FFF0"/><rect x="14" y="468" width="182" height="1" fill="#EBE4D4"/><use href="#g54" x="47" y="454" fill="#000"/><use href="#g94" x="59" y="454" fill="#000"/><use href="#g36" x="127" y="454" fill="#000"/><use href="#g35" x="133" y="454" fill="#000"/><use href="#g36" x="139" y="454" fill="#000"/><use href="#g36" x="145" y="454" fill="#000"/><use href="#g41" x="157" y="454" fill="#000"/><rect x="14" y="469" width="90" height="16" fill="#CCFFCC"/><rect x="105" y="469" width="89" height="16" fill="#FFFFCC"/><rect x="14" y="485" width="182" height="1" fill="#EBE4D4"/><use href="#g85" x="23" y="471" fill="#000"/><use href="#g86" x="35" y="471" fill="#000"/><use href="#g87" x="47" y="471" fill="#000"/><use href="#g88" x="59" y="471" fill="#000"/><use href="#g16" x="71" y="471" fill="#000"/><use href="#g15" x="83" y="471" fill="#000"/><use href="#g95" x="130" y="471" fill="#000"/><use href="#g96" x="136" y="471" fill="#000"/><use href="#g42" x="142" y="471" fill="#000"/><use href="#g43" x="154" y="471" fill="#000"/><rect x="14" y="486" width="90" height="16" fill="#CCFFCC"/><rect x="105" y="486" width="89" height="16" fill="#FFFFFF"/><rect x="14" y="502" width="182" height="1" fill="#EBE4D4"/><use href="#g92" x="47" y="488" fill="#000"/><use href="#g70" x="59" y="488" fill="#000"/><use href="#g36" x="133" y="488" fill="#000"/><use href="#g35" x="139" y="488" fill="#000"/><use href="#g60" x="145" y="488" fill="#000"/><use href="#g60" x="151" y="488" fill="#000"/><use href="#g58" x="157" y="488" fill="#000"/><rect x="14" y="503" width="90" height="16" fill="#CCFFCC"/><rect x="105" y="503" width="89" height="16" fill="#FFFFFF"/><rect x="14" y="519" width="182" height="1" fill="#EBE4D4"/><use href="#g54" x="47" y="505" fill="#000"/><use href="#g94" x="59" y="505" fill="#000"/><use href="#g36" x="127" y="505" fill="#000"/><use href="#g35" x="133" y="505" fill="#000"/><use href="#g36" x="139" y="505" fill="#000"/><use href="#g36" x="145" y="505" fill="#000"/><use href="#g41" x="157" y="505" fill="#000"/><rect x="104" y="417" width="1" height="105" fill="#EBE4D4"/><rect x="194" y="417" width="1" height="105" fill="#EBE4D4"/><rect x="14" y="400" width="90" height="16" fill="#ECE9D8"/><rect x="14" y="400" width="90" height="1" fill="#FFFFFF"/><rect x="14" y="400" width="1" height="16" fill="#FFFFFF"/><rect x="14" y="415" width="90" height="1" fill="#716F64"/><rect x="103" y="400" width="1" height="16" fill="#716F64"/><rect x="15" y="414" width="88" height="1" fill="#ACA899"/><rect x="102" y="401" width="1" height="14" fill="#ACA899"/><rect x="104" y="400" width="90" height="16" fill="#ECE9D8"/><rect x="104" y="400" width="90" height="1" fill="#FFFFFF"/><rect x="104" y="400" width="1" height="16" fill="#FFFFFF"/><rect x="104" y="415" width="90" height="1" fill="#716F64"/><rect x="193" y="400" width="1" height="16" fill="#716F64"/><rect x="105" y="414" width="88" height="1" fill="#ACA899"/><rect x="192" y="401" width="1" height="14" fill="#ACA899"/><rect x="194" y="400" width="2" height="16" fill="#ECE9D8"/><rect x="194" y="400" width="1" height="16" fill="#FFFFFF"/><rect x="194" y="400" width="2" height="1" fill="#FFFFFF"/><rect x="194" y="415" width="2" height="1" fill="#716F64"/><rect x="195" y="414" width="1" height="1" fill="#ACA899"/><rect x="14" y="416" width="182" height="1" fill="#FFFFFF"/><use href="#g15" x="41" y="402" fill="#000"/><use href="#g68" x="53" y="402" fill="#000"/><use href="#g69" x="65" y="402" fill="#000"/><use href="#g70" x="142" y="402" fill="#000"/><rect x="12" y="398" width="186" height="1" fill="#ACA899"/><rect x="12" y="398" width="1" height="126" fill="#ACA899"/><rect x="13" y="399" width="184" height="1" fill="#716F64"/><rect x="13" y="399" width="1" height="124" fill="#716F64"/><rect x="12" y="523" width="186" height="1" fill="#FFFFFF"/><rect x="197" y="398" width="1" height="126" fill="#FFFFFF"/><rect x="13" y="522" width="184" height="1" fill="#F1EFE2"/><rect x="196" y="399" width="1" height="124" fill="#F1EFE2"/><rect x="402" y="77" width="388" height="397" fill="#000"/><rect x="398" y="75" width="1" height="497" fill="#FFFFFF"/><rect x="400" y="75" width="391" height="1" fill="#ACA899"/><rect x="401" y="76" width="389" height="1" fill="#716F64"/><rect x="400" y="75" width="1" height="400" fill="#ACA899"/><rect x="401" y="76" width="1" height="398" fill="#716F64"/><rect x="400" y="474" width="391" height="1" fill="#FFFFFF"/><rect x="790" y="75" width="1" height="400" fill="#FFFFFF"/><rect x="791" y="75" width="1" height="400" fill="#F1EFE2"/><g shape-rendering="crispEdges"><circle cx="600" cy="275" r="28.5" fill="none" stroke="#606060"/><circle cx="600" cy="275" r="65.5" fill="none" stroke="#606060"/><circle cx="600" cy="275" r="102.5" fill="none" stroke="#606060"/><circle cx="600" cy="275" r="139.5" fill="none" stroke="#606060"/><circle cx="600" cy="275" r="175.5" fill="none" stroke="#606060"/><line x1="600.5" y1="275.5" x2="774.50" y2="275.50" stroke="#606060"/><line x1="600.5" y1="275.5" x2="751.19" y2="188.50" stroke="#606060"/><line x1="600.5" y1="275.5" x2="687.50" y2="124.81" stroke="#606060"/><line x1="600.5" y1="275.5" x2="600.50" y2="101.50" stroke="#606060"/><line x1="600.5" y1="275.5" x2="513.50" y2="124.81" stroke="#606060"/><line x1="600.5" y1="275.5" x2="449.81" y2="188.50" stroke="#606060"/><line x1="600.5" y1="275.5" x2="426.50" y2="275.50" stroke="#606060"/><line x1="600.5" y1="275.5" x2="449.81" y2="362.50" stroke="#606060"/><line x1="600.5" y1="275.5" x2="513.50" y2="426.19" stroke="#606060"/><line x1="600.5" y1="275.5" x2="600.50" y2="449.50" stroke="#606060"/><line x1="600.5" y1="275.5" x2="687.50" y2="426.19" stroke="#606060"/><line x1="600.5" y1="275.5" x2="751.19" y2="362.50" stroke="#606060"/><g shape-rendering="crispEdges"><line x1="600.5" y1="275.5" x2="684.50" y2="275.50" stroke="#FFFF00" stroke-width="1"/><line x1="684.50" y1="275.50" x2="678.50" y2="272.53" stroke="#FFFF00" stroke-width="1"/><line x1="684.50" y1="275.50" x2="678.50" y2="278.47" stroke="#FFFF00" stroke-width="1"/></g><g shape-rendering="auto"><line x1="600.5" y1="275.5" x2="559.00" y2="203.62" stroke="#F00000" stroke-width="1.15"/><line x1="559.00" y1="203.62" x2="559.83" y2="211.58" stroke="#F00000" stroke-width="1.15"/><line x1="559.00" y1="203.62" x2="565.48" y2="208.31" stroke="#F00000" stroke-width="1.15"/></g><g shape-rendering="auto"><line x1="600.5" y1="275.5" x2="559.00" y2="347.38" stroke="#00F000" stroke-width="1.2"/><line x1="559.00" y1="347.38" x2="565.48" y2="342.69" stroke="#00F000" stroke-width="1.2"/><line x1="559.00" y1="347.38" x2="559.83" y2="339.42" stroke="#00F000" stroke-width="1.2"/></g></g><rect x="410" y="89" width="31" height="1" fill="#E0A000"/><path d="M435 86l5 3l-5 3" fill="none" stroke="#E0A000" shape-rendering="auto"/><use href="#g46" x="442" y="86" fill="#E0A000"/><use href="#g97" x="448" y="86" fill="#E0A000"/><rect x="410" y="99" width="31" height="1" fill="#00FFFF"/><path d="M435 96l5 3l-5 3" fill="none" stroke="#00FFFF" shape-rendering="auto"/><use href="#g46" x="442" y="96" fill="#00FFFF"/><use href="#g98" x="448" y="96" fill="#00FFFF"/><rect x="410" y="109" width="31" height="1" fill="#FF00FF"/><path d="M435 106l5 3l-5 3" fill="none" stroke="#FF00FF" shape-rendering="auto"/><use href="#g46" x="442" y="106" fill="#FF00FF"/><use href="#g99" x="448" y="106" fill="#FF00FF"/><rect x="742" y="88" width="33" height="2" fill="#E0A000"/><path d="M769 86l5 3l-5 3" fill="none" stroke="#E0A000" shape-rendering="auto"/><use href="#g47" x="776" y="86" fill="#E0A000"/><use href="#g97" x="782" y="86" fill="#E0A000"/><rect x="742" y="98" width="33" height="2" fill="#00FFFF"/><path d="M769 96l5 3l-5 3" fill="none" stroke="#00FFFF" shape-rendering="auto"/><use href="#g47" x="776" y="96" fill="#00FFFF"/><use href="#g98" x="782" y="96" fill="#00FFFF"/><rect x="742" y="108" width="33" height="2" fill="#FF00FF"/><path d="M769 106l5 3l-5 3" fill="none" stroke="#FF00FF" shape-rendering="auto"/><use href="#g47" x="776" y="106" fill="#FF00FF"/><use href="#g99" x="782" y="106" fill="#FF00FF"/><rect x="410" y="433" width="31" height="1" fill="#FFFF00"/><path d="M435 430l5 3l-5 3" fill="none" stroke="#FFFF00" shape-rendering="auto"/><use href="#g46" x="442" y="427" fill="#FFFF00"/><use href="#g52" x="448" y="427" fill="#FFFF00"/><rect x="410" y="443" width="31" height="1" fill="#00FF00"/><path d="M435 440l5 3l-5 3" fill="none" stroke="#00FF00" shape-rendering="auto"/><use href="#g46" x="442" y="437" fill="#00FF00"/><use href="#g53" x="448" y="437" fill="#00FF00"/><rect x="410" y="453" width="31" height="1" fill="#FF0000"/><path d="M435 450l5 3l-5 3" fill="none" stroke="#FF0000" shape-rendering="auto"/><use href="#g46" x="442" y="447" fill="#FF0000"/><use href="#g100" x="448" y="447" fill="#FF0000"/><rect x="742" y="432" width="33" height="2" fill="#FFFF00"/><path d="M769 430l5 3l-5 3" fill="none" stroke="#FFFF00" shape-rendering="auto"/><use href="#g47" x="776" y="427" fill="#FFFF00"/><use href="#g52" x="782" y="427" fill="#FFFF00"/><rect x="742" y="442" width="33" height="2" fill="#00FF00"/><path d="M769 440l5 3l-5 3" fill="none" stroke="#00FF00" shape-rendering="auto"/><use href="#g47" x="776" y="437" fill="#00FF00"/><use href="#g53" x="782" y="437" fill="#00FF00"/><rect x="742" y="452" width="33" height="2" fill="#FF0000"/><path d="M769 450l5 3l-5 3" fill="none" stroke="#FF0000" shape-rendering="auto"/><use href="#g47" x="776" y="447" fill="#FF0000"/><use href="#g100" x="782" y="447" fill="#FF0000"/><rect x="403" y="489" width="244" height="1" fill="#FFFFFF"/><rect x="403" y="571" width="244" height="1" fill="#FFFFFF"/><rect x="403" y="489" width="1" height="83" fill="#FFFFFF"/><rect x="646" y="489" width="1" height="83" fill="#FFFFFF"/><rect x="402" y="488" width="244" height="1" fill="#ACA899"/><rect x="402" y="570" width="244" height="1" fill="#ACA899"/><rect x="402" y="488" width="1" height="83" fill="#ACA899"/><rect x="645" y="488" width="1" height="83" fill="#ACA899"/><rect x="409" y="488" width="45" height="2" fill="#ECE9D8"/><use href="#g101" x="410" y="482" fill="#000"/><use href="#g38" x="416" y="482" fill="#000"/><use href="#g102" x="422" y="482" fill="#000"/><use href="#g20" x="428" y="482" fill="#000"/><use href="#g21" x="440" y="482" fill="#000"/><use href="#g103" x="415" y="509" fill="#000"/><use href="#g104" x="427" y="509" fill="#000"/><use href="#g9" x="439" y="509" fill="#000"/><use href="#g10" x="451" y="509" fill="#000"/><use href="#g81" x="463" y="509" fill="#000"/><use href="#g82" x="475" y="509" fill="#000"/><use href="#g6" x="487" y="509" fill="#000"/><use href="#g81" x="493" y="509" fill="#000"/><use href="#g26" x="505" y="509" fill="#000"/><use href="#g105" x="517" y="509" fill="#000"/><use href="#g8" x="529" y="509" fill="#000"/><use href="#g26" x="535" y="509" fill="#000"/><rect x="553" y="503" width="29" height="21" fill="#ECE9D8"/><rect x="553" y="503" width="29" height="1" fill="#ACA899"/><rect x="553" y="503" width="1" height="21" fill="#ACA899"/><rect x="554" y="504" width="27" height="1" fill="#716F64"/><rect x="554" y="504" width="1" height="19" fill="#716F64"/><rect x="553" y="523" width="29" height="1" fill="#FFFFFF"/><rect x="581" y="503" width="1" height="21" fill="#FFFFFF"/><rect x="554" y="522" width="27" height="1" fill="#F1EFE2"/><rect x="580" y="504" width="1" height="19" fill="#F1EFE2"/><use href="#g106" x="556" y="506" fill="#ACA899"/><use href="#g26" x="589" y="509" fill="#000"/><rect x="607" y="503" width="29" height="21" fill="#ECE9D8"/><rect x="607" y="503" width="29" height="1" fill="#ACA899"/><rect x="607" y="503" width="1" height="21" fill="#ACA899"/><rect x="608" y="504" width="27" height="1" fill="#716F64"/><rect x="608" y="504" width="1" height="19" fill="#716F64"/><rect x="607" y="523" width="29" height="1" fill="#FFFFFF"/><rect x="635" y="503" width="1" height="21" fill="#FFFFFF"/><rect x="608" y="522" width="27" height="1" fill="#F1EFE2"/><rect x="634" y="504" width="1" height="19" fill="#F1EFE2"/><use href="#g106" x="610" y="506" fill="#ACA899"/><use href="#g107" x="415" y="544" fill="#000"/><use href="#g108" x="427" y="544" fill="#000"/><use href="#g81" x="439" y="544" fill="#000"/><use href="#g82" x="451" y="544" fill="#000"/><use href="#g6" x="463" y="544" fill="#000"/><use href="#g81" x="469" y="544" fill="#000"/><use href="#g26" x="481" y="544" fill="#000"/><use href="#g105" x="493" y="544" fill="#000"/><use href="#g26" x="505" y="544" fill="#000"/><use href="#g109" x="517" y="544" fill="#000"/><use href="#g8" x="529" y="544" fill="#000"/><use href="#g26" x="535" y="544" fill="#000"/><rect x="553" y="537" width="83" height="21" fill="#ECE9D8"/><rect x="553" y="537" width="83" height="1" fill="#ACA899"/><rect x="553" y="537" width="1" height="21" fill="#ACA899"/><rect x="554" y="538" width="81" height="1" fill="#716F64"/><rect x="554" y="538" width="1" height="19" fill="#716F64"/><rect x="553" y="557" width="83" height="1" fill="#FFFFFF"/><rect x="635" y="537" width="1" height="21" fill="#FFFFFF"/><rect x="554" y="556" width="81" height="1" fill="#F1EFE2"/><rect x="634" y="538" width="1" height="19" fill="#F1EFE2"/><use href="#g110" x="556" y="541" fill="#000"/><use href="#g106" x="562" y="541" fill="#000"/><use href="#g111" x="568" y="541" fill="#000"/><use href="#g112" x="573" y="541" fill="#000"/><use href="#g113" x="579" y="541" fill="#000"/><use href="#g111" x="585" y="541" fill="#000"/><use href="#g114" x="590" y="541" fill="#000"/><use href="#g114" x="596" y="541" fill="#000"/><rect x="650" y="489" width="142" height="1" fill="#FFFFFF"/><rect x="650" y="532" width="142" height="1" fill="#FFFFFF"/><rect x="650" y="489" width="1" height="44" fill="#FFFFFF"/><rect x="791" y="489" width="1" height="44" fill="#FFFFFF"/><rect x="649" y="488" width="142" height="1" fill="#ACA899"/><rect x="649" y="531" width="142" height="1" fill="#ACA899"/><rect x="649" y="488" width="1" height="44" fill="#ACA899"/><rect x="790" y="488" width="1" height="44" fill="#ACA899"/><rect x="657" y="488" width="27" height="2" fill="#ECE9D8"/><use href="#g115" x="658" y="482" fill="#000"/><use href="#g116" x="670" y="482" fill="#000"/><use href="#g117" x="658" y="501" fill="#000"/><use href="#g103" x="664" y="501" fill="#000"/><use href="#g104" x="676" y="501" fill="#000"/><use href="#g9" x="688" y="501" fill="#000"/><use href="#g10" x="700" y="501" fill="#000"/><use href="#g81" x="712" y="501" fill="#000"/><use href="#g82" x="724" y="501" fill="#000"/><use href="#g118" x="736" y="501" fill="#000"/><use href="#g119" x="748" y="501" fill="#000"/><use href="#g120" x="760" y="501" fill="#000"/><use href="#g121" x="772" y="501" fill="#000"/><use href="#g117" x="658" y="513" fill="#000"/><use href="#g107" x="664" y="513" fill="#000"/><use href="#g108" x="676" y="513" fill="#000"/><use href="#g81" x="688" y="513" fill="#000"/><use href="#g82" x="700" y="513" fill="#000"/><use href="#g118" x="712" y="513" fill="#000"/><use href="#g122" x="724" y="513" fill="#000"/><use href="#g123" x="736" y="513" fill="#000"/><use href="#g34" x="748" y="513" fill="#000"/><use href="#g36" x="754" y="513" fill="#000"/><use href="#g32" x="760" y="513" fill="#000"/><defs><linearGradient id="gbtn" x1="0" y1="0" x2="0" y2="1"><stop offset="0" stop-color="#FFFFFF"/><stop offset="0.6" stop-color="#F4F4F6"/><stop offset="1" stop-color="#E2E2EC"/></linearGradient></defs><rect x="677" y="543" width="78" height="18" fill="url(#gbtn)"/><rect x="678" y="542" width="76" height="1" fill="#000"/><rect x="677" y="543" width="1" height="1" fill="#000"/><rect x="754" y="543" width="1" height="1" fill="#000"/><rect x="676" y="544" width="1" height="16" fill="#000"/><rect x="755" y="544" width="1" height="16" fill="#000"/><rect x="677" y="560" width="1" height="1" fill="#000"/><rect x="754" y="560" width="1" height="1" fill="#000"/><rect x="678" y="561" width="76" height="2" fill="#000"/><rect x="677" y="561" width="1" height="1" fill="#000"/><rect x="754" y="561" width="1" height="1" fill="#000"/><use href="#g124" x="683" y="546" fill="#ACA899"/><use href="#g125" x="695" y="546" fill="#ACA899"/><use href="#g101" x="707" y="546" fill="#ACA899"/><use href="#g38" x="713" y="546" fill="#ACA899"/><use href="#g102" x="719" y="546" fill="#ACA899"/><use href="#g81" x="725" y="546" fill="#ACA899"/><use href="#g126" x="737" y="546" fill="#ACA899"/><rect x="4" y="571" width="792" height="1" fill="#FFFFFF"/><rect x="2" y="575" width="794" height="1" fill="#FFFFFF"/><use href="#g127" x="4" y="580" fill="#000"/><use href="#g128" x="16" y="580" fill="#000"/><use href="#g129" x="293" y="580" fill="#000"/><use href="#g130" x="305" y="580" fill="#000"/><use href="#g81" x="317" y="580" fill="#000"/><use href="#g82" x="329" y="580" fill="#000"/><rect x="344" y="578" width="66" height="1" fill="#ACA899"/><rect x="344" y="578" width="1" height="18" fill="#ACA899"/><rect x="409" y="578" width="1" height="18" fill="#FFFFFF"/><use href="#g36" x="345" y="580" fill="#000"/><use href="#g35" x="351" y="580" fill="#000"/><use href="#g36" x="357" y="580" fill="#000"/><use href="#g36" x="363" y="580" fill="#000"/><use href="#g36" x="369" y="580" fill="#000"/><use href="#g32" x="375" y="580" fill="#000"/><use href="#g103" x="414" y="581" fill="#000"/><use href="#g131" x="426" y="581" fill="#000"/><use href="#g132" x="438" y="581" fill="#000"/><use href="#g33" x="450" y="581" fill="#000"/><use href="#g6" x="456" y="581" fill="#000"/><use href="#g133" x="462" y="581" fill="#000"/><use href="#g44" x="474" y="581" fill="#000"/><use href="#g134" x="480" y="581" fill="#000"/><use href="#g135" x="492" y="581" fill="#000"/><use href="#g136" x="504" y="581" fill="#000"/><use href="#g137" x="516" y="581" fill="#000"/><use href="#g44" x="528" y="581" fill="#000"/><use href="#g138" x="534" y="581" fill="#000"/><use href="#g139" x="546" y="581" fill="#000"/><use href="#g8" x="558" y="581" fill="#000"/><rect x="570" y="578" width="226" height="1" fill="#ACA899"/><rect x="570" y="578" width="1" height="18" fill="#ACA899"/><use href="#g52" x="571" y="579" fill="#000"/><rect x="581" y="580" width="5" height="1" fill="#808080"/><rect x="580" y="581" width="7" height="1" fill="#808080"/><rect x="579" y="582" width="9" height="1" fill="#808080"/><rect x="578" y="583" width="11" height="1" fill="#808080"/><rect x="578" y="584" width="11" height="1" fill="#808080"/><rect x="578" y="585" width="11" height="1" fill="#808080"/><rect x="578" y="586" width="11" height="1" fill="#808080"/><rect x="578" y="587" width="11" height="1" fill="#808080"/><rect x="579" y="588" width="9" height="1" fill="#808080"/><rect x="580" y="589" width="7" height="1" fill="#808080"/><rect x="581" y="590" width="5" height="1" fill="#808080"/><use href="#g53" x="593" y="579" fill="#000"/><rect x="603" y="580" width="5" height="1" fill="#808080"/><rect x="602" y="581" width="7" height="1" fill="#808080"/><rect x="601" y="582" width="9" height="1" fill="#808080"/><rect x="600" y="583" width="11" height="1" fill="#808080"/><rect x="600" y="584" width="11" height="1" fill="#808080"/><rect x="600" y="585" width="11" height="1" fill="#808080"/><rect x="600" y="586" width="11" height="1" fill="#808080"/><rect x="600" y="587" width="11" height="1" fill="#808080"/><rect x="601" y="588" width="9" height="1" fill="#808080"/><rect x="602" y="589" width="7" height="1" fill="#808080"/><rect x="603" y="590" width="5" height="1" fill="#808080"/><use href="#g100" x="615" y="579" fill="#000"/><rect x="625" y="580" width="5" height="1" fill="#808080"/><rect x="624" y="581" width="7" height="1" fill="#808080"/><rect x="623" y="582" width="9" height="1" fill="#808080"/><rect x="622" y="583" width="11" height="1" fill="#808080"/><rect x="622" y="584" width="11" height="1" fill="#808080"/><rect x="622" y="585" width="11" height="1" fill="#808080"/><rect x="622" y="586" width="11" height="1" fill="#808080"/><rect x="622" y="587" width="11" height="1" fill="#808080"/><rect x="623" y="588" width="9" height="1" fill="#808080"/><rect x="624" y="589" width="7" height="1" fill="#808080"/><rect x="625" y="590" width="5" height="1" fill="#808080"/><use href="#g59" x="637" y="579" fill="#000"/><rect x="647" y="580" width="5" height="1" fill="#808080"/><rect x="646" y="581" width="7" height="1" fill="#808080"/><rect x="645" y="582" width="9" height="1" fill="#808080"/><rect x="644" y="583" width="11" height="1" fill="#808080"/><rect x="644" y="584" width="11" height="1" fill="#808080"/><rect x="644" y="585" width="11" height="1" fill="#808080"/><rect x="644" y="586" width="11" height="1" fill="#808080"/><rect x="644" y="587" width="11" height="1" fill="#808080"/><rect x="645" y="588" width="9" height="1" fill="#808080"/><rect x="646" y="589" width="7" height="1" fill="#808080"/><rect x="647" y="590" width="5" height="1" fill="#808080"/><use href="#g97" x="659" y="579" fill="#000"/><rect x="669" y="580" width="5" height="1" fill="#808080"/><rect x="668" y="581" width="7" height="1" fill="#808080"/><rect x="667" y="582" width="9" height="1" fill="#808080"/><rect x="666" y="583" width="11" height="1" fill="#808080"/><rect x="666" y="584" width="11" height="1" fill="#808080"/><rect x="666" y="585" width="11" height="1" fill="#808080"/><rect x="666" y="586" width="11" height="1" fill="#808080"/><rect x="666" y="587" width="11" height="1" fill="#808080"/><rect x="667" y="588" width="9" height="1" fill="#808080"/><rect x="668" y="589" width="7" height="1" fill="#808080"/><rect x="669" y="590" width="5" height="1" fill="#808080"/><use href="#g98" x="681" y="579" fill="#000"/><rect x="691" y="580" width="5" height="1" fill="#808080"/><rect x="690" y="581" width="7" height="1" fill="#808080"/><rect x="689" y="582" width="9" height="1" fill="#808080"/><rect x="688" y="583" width="11" height="1" fill="#808080"/><rect x="688" y="584" width="11" height="1" fill="#808080"/><rect x="688" y="585" width="11" height="1" fill="#808080"/><rect x="688" y="586" width="11" height="1" fill="#808080"/><rect x="688" y="587" width="11" height="1" fill="#808080"/><rect x="689" y="588" width="9" height="1" fill="#808080"/><rect x="690" y="589" width="7" height="1" fill="#808080"/><rect x="691" y="590" width="5" height="1" fill="#808080"/><use href="#g99" x="703" y="579" fill="#000"/><rect x="713" y="580" width="5" height="1" fill="#808080"/><rect x="712" y="581" width="7" height="1" fill="#808080"/><rect x="711" y="582" width="9" height="1" fill="#808080"/><rect x="710" y="583" width="11" height="1" fill="#808080"/><rect x="710" y="584" width="11" height="1" fill="#808080"/><rect x="710" y="585" width="11" height="1" fill="#808080"/><rect x="710" y="586" width="11" height="1" fill="#808080"/><rect x="710" y="587" width="11" height="1" fill="#808080"/><rect x="711" y="588" width="9" height="1" fill="#808080"/><rect x="712" y="589" width="7" height="1" fill="#808080"/><rect x="713" y="590" width="5" height="1" fill="#808080"/><use href="#g140" x="725" y="579" fill="#000"/><rect x="735" y="580" width="5" height="1" fill="#808080"/><rect x="734" y="581" width="7" height="1" fill="#808080"/><rect x="733" y="582" width="9" height="1" fill="#808080"/><rect x="732" y="583" width="11" height="1" fill="#808080"/><rect x="732" y="584" width="11" height="1" fill="#808080"/><rect x="732" y="585" width="11" height="1" fill="#808080"/><rect x="732" y="586" width="11" height="1" fill="#808080"/><rect x="732" y="587" width="11" height="1" fill="#808080"/><rect x="733" y="588" width="9" height="1" fill="#808080"/><rect x="734" y="589" width="7" height="1" fill="#808080"/><rect x="735" y="590" width="5" height="1" fill="#808080"/><use href="#g141" x="747" y="579" fill="#000"/><rect x="757" y="580" width="5" height="1" fill="#808080"/><rect x="756" y="581" width="7" height="1" fill="#808080"/><rect x="755" y="582" width="9" height="1" fill="#808080"/><rect x="754" y="583" width="11" height="1" fill="#808080"/><rect x="754" y="584" width="11" height="1" fill="#808080"/><rect x="754" y="585" width="11" height="1" fill="#808080"/><rect x="754" y="586" width="11" height="1" fill="#808080"/><rect x="754" y="587" width="11" height="1" fill="#808080"/><rect x="755" y="588" width="9" height="1" fill="#808080"/><rect x="756" y="589" width="7" height="1" fill="#808080"/><rect x="757" y="590" width="5" height="1" fill="#808080"/><use href="#g142" x="769" y="579" fill="#000"/><rect x="779" y="580" width="5" height="1" fill="#808080"/><rect x="778" y="581" width="7" height="1" fill="#808080"/><rect x="777" y="582" width="9" height="1" fill="#808080"/><rect x="776" y="583" width="11" height="1" fill="#808080"/><rect x="776" y="584" width="11" height="1" fill="#808080"/><rect x="776" y="585" width="11" height="1" fill="#808080"/><rect x="776" y="586" width="11" height="1" fill="#808080"/><rect x="776" y="587" width="11" height="1" fill="#808080"/><rect x="777" y="588" width="9" height="1" fill="#808080"/><rect x="778" y="589" width="7" height="1" fill="#808080"/><rect x="779" y="590" width="5" height="1" fill="#808080"/>
</svg>
</body></html>
